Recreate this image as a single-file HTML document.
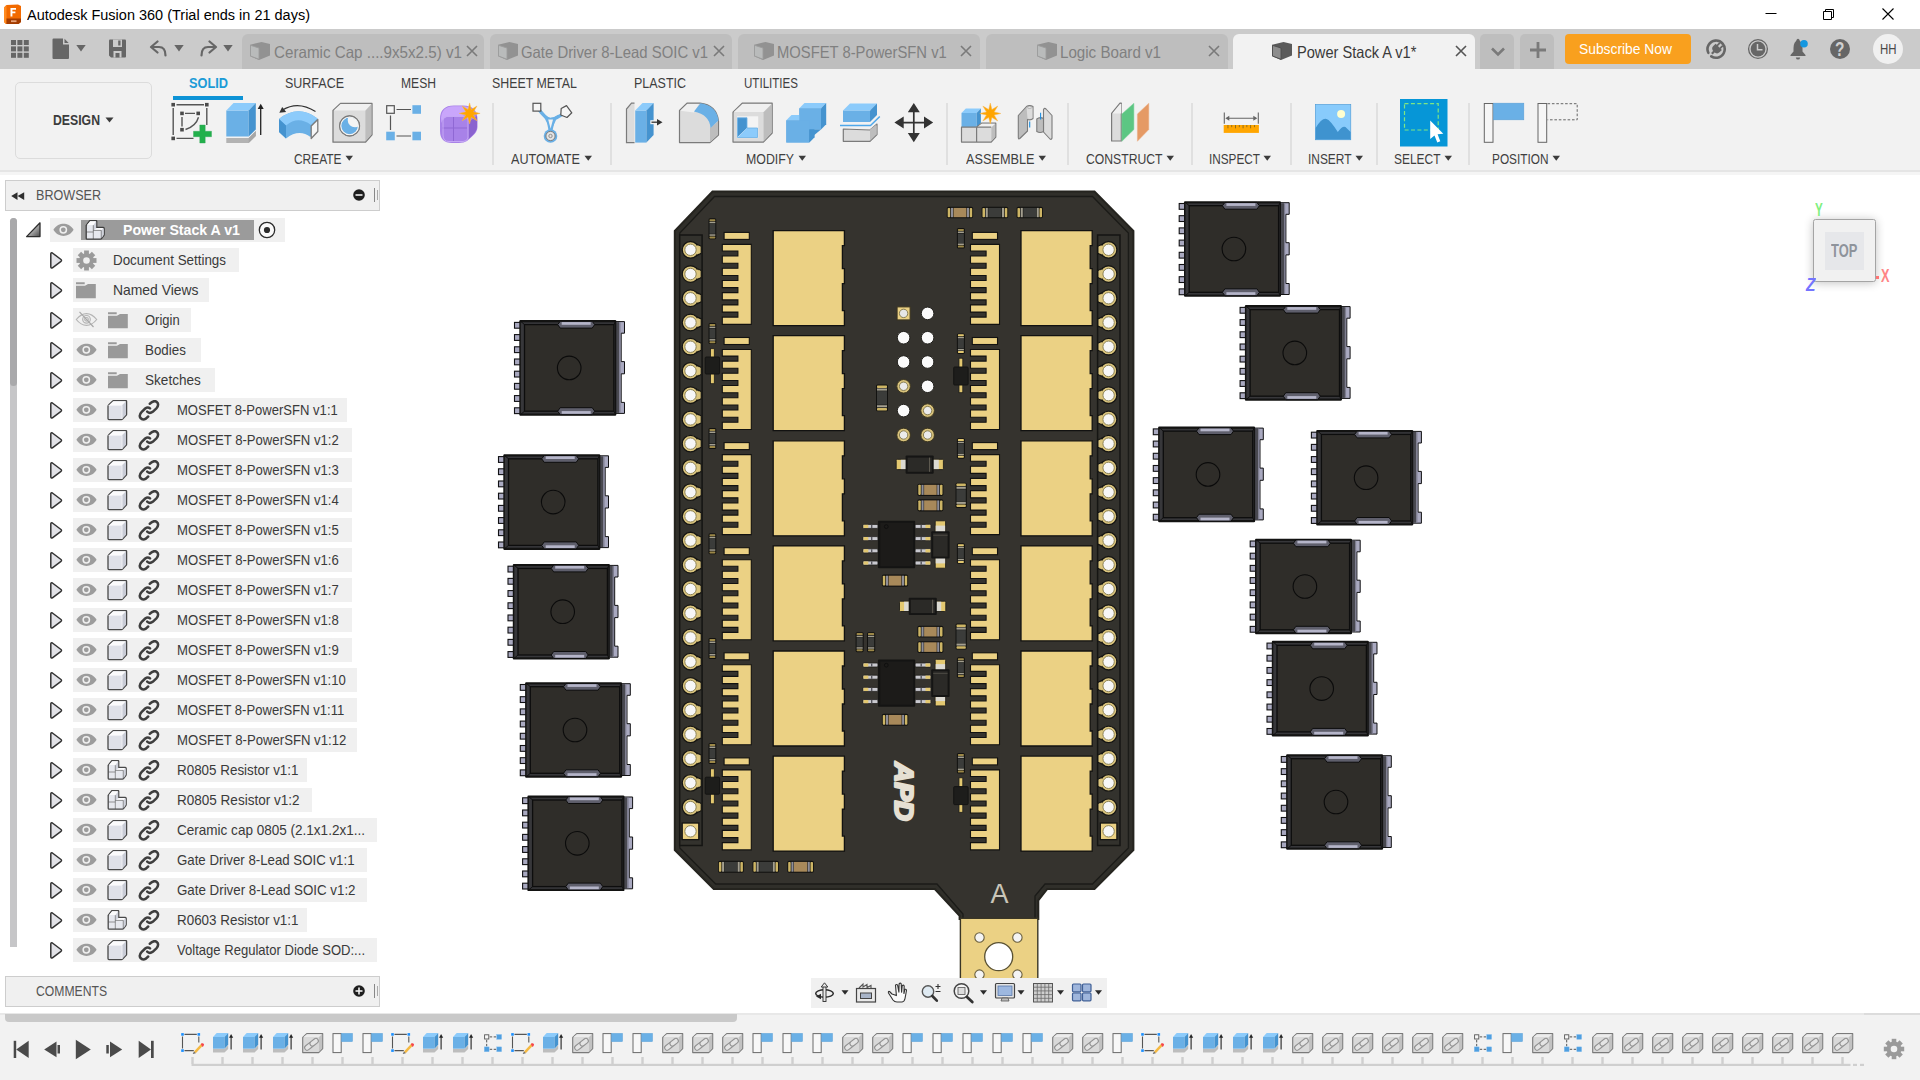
<!DOCTYPE html>
<html><head><meta charset="utf-8"><title>Autodesk Fusion 360</title>
<style>
html,body{margin:0;padding:0;}
body{width:1920px;height:1080px;overflow:hidden;background:#fff;font-family:"Liberation Sans",sans-serif;position:relative;}
.a{position:absolute;display:block;}
.t{position:absolute;white-space:nowrap;line-height:1;transform-origin:0 50%;}
</style></head><body>
<div class="a" style="left:0px;top:0px;width:1920px;height:29px;background:#ffffff;"></div>
<svg class="a" style="left:3px;top:4px;" width="19" height="21" viewBox="0 0 19 21">
<path d="M1 3.5 L3.5 1 L15 0.5 L18 2 L18 18 L15.5 20 L3 20 L1 18 Z" fill="#f26a00"/>
<path d="M1 3.5 L3.5 1 L3.5 20 L3 20 L1 18 Z" fill="#ff8a1f"/>
<path d="M3.5 14.5 L18 14.5 L18 18 L15.5 20 L3.5 20 Z" fill="#a33c00"/>
<path d="M7.5 4 H13 V5.8 H9.4 V7.6 H12.4 V9.3 H9.4 V12.5 H7.5 Z" fill="#fff"/>
<rect x="8" y="16.3" width="5.5" height="1.8" fill="#e7a37a"/>
</svg>
<span class="t" style="left:27px;top:6.75px;font-size:15.5px;color:#000000;font-weight:400;transform:scaleX(0.9349);">Autodesk Fusion 360 (Trial ends in 21 days)</span>
<svg class="a" style="left:1760px;top:4px;" width="150" height="22" viewBox="0 0 150 22">
<path d="M5.5 9.5 H16.5" stroke="#000" stroke-width="1" fill="none"/>
<path d="M63.5 7.5 h8 v8 h-8 z M65.5 7.5 v-2 h8 v8 h-2" stroke="#000" stroke-width="1" fill="none" stroke-linejoin="round"/>
<path d="M122.5 4.5 l11 11 M133.5 4.5 l-11 11" stroke="#000" stroke-width="1.1" fill="none"/>
</svg>
<div class="a" style="left:0px;top:29px;width:1920px;height:40px;background:#cbcbcb;"></div>
<svg class="a" style="left:10px;top:39px;" width="20" height="20" viewBox="0 0 20 20"><rect x="1.0" y="1.0" width="5" height="5" fill="#666666"/><rect x="1.0" y="7.4" width="5" height="5" fill="#666666"/><rect x="1.0" y="13.8" width="5" height="5" fill="#666666"/><rect x="7.4" y="1.0" width="5" height="5" fill="#666666"/><rect x="7.4" y="7.4" width="5" height="5" fill="#666666"/><rect x="7.4" y="13.8" width="5" height="5" fill="#666666"/><rect x="13.8" y="1.0" width="5" height="5" fill="#666666"/><rect x="13.8" y="7.4" width="5" height="5" fill="#666666"/><rect x="13.8" y="13.8" width="5" height="5" fill="#666666"/></svg>
<svg class="a" style="left:52px;top:38px;" width="18" height="22" viewBox="0 0 18 22"><path d="M0.5 1.5 Q0.5 0.5 1.5 0.5 H11 V6.5 H17 V20 Q17 21 16 21 H1.5 Q0.5 21 0.5 20 Z" fill="#666666"/><path d="M12.5 0.8 L16.7 5 H12.5 Z" fill="#666666"/></svg>
<svg class="a" style="left:76px;top:44px;" width="10" height="8" viewBox="0 0 10 8"><path d="M0.300 1 H9.700 L5 7.600 Z" fill="#666666"/></svg>
<svg class="a" style="left:108px;top:39px;" width="19" height="20" viewBox="0 0 19 20"><path d="M1 1.5 Q1 0.5 2 0.5 H17 Q18 0.5 18 1.5 V17.5 Q18 18.5 17 18.5 H3 L1 16.5 Z" fill="#666666"/><rect x="5" y="0.5" width="9" height="7.5" fill="#cbcbcb"/><rect x="10.2" y="1.5" width="2.3" height="5" fill="#666666"/><rect x="5.5" y="12" width="8" height="6.5" fill="#cbcbcb"/><rect x="7.5" y="14" width="4" height="4.5" fill="#666666"/></svg>
<svg class="a" style="left:149px;top:40px;" width="20" height="18" viewBox="0 0 20 18"><path d="M8.5 1.5 L2 7 L8.5 12.5 M2.5 7 H10 Q16.5 7 16.5 15.5" stroke="#666666" stroke-width="2.2" fill="none" stroke-linecap="round" stroke-linejoin="round"/></svg>
<svg class="a" style="left:174px;top:44px;" width="10" height="8" viewBox="0 0 10 8"><path d="M0.300 1 H9.700 L5 7.600 Z" fill="#666666"/></svg>
<svg class="a" style="left:198px;top:40px;" width="20" height="18" viewBox="0 0 20 18"><path d="M11.5 1.5 L18 7 L11.5 12.5 M17.5 7 H10 Q3.5 7 3.5 15.5" stroke="#666666" stroke-width="2.2" fill="none" stroke-linecap="round" stroke-linejoin="round"/></svg>
<svg class="a" style="left:223px;top:44px;" width="10" height="8" viewBox="0 0 10 8"><path d="M0.300 1 H9.700 L5 7.600 Z" fill="#666666"/></svg>
<div class="a" style="left:242px;top:34px;width:242px;height:35px;background:#bebebe;border-radius:6px 6px 0 0;"></div>
<svg class="a" style="left:249px;top:41px;" width="22" height="20" viewBox="0 0 22 20"><path d="M1.200 3.800 L12.500 1 L21 3 L21 14.500 L10 19 L1.200 15.300 Z" fill="#929292"/><path d="M1.500 4.300 L10 7 L10 18.300 L1.500 15 Z" fill="#b9bbbb" stroke="#9c9c9c" stroke-width="0.900" stroke-linejoin="round"/></svg>
<span class="t" style="left:274px;top:43.75px;font-size:16.5px;color:#808080;font-weight:400;transform:scaleX(0.9193);">Ceramic Cap ....9x5x2.5) v1</span>
<svg class="a" style="left:466px;top:45px;" width="12" height="12" viewBox="0 0 12 12"><path d="M1 1 L11 11 M11 1 L1 11" stroke="#7a7a7a" stroke-width="1.6" fill="none"/></svg>
<div class="a" style="left:490px;top:34px;width:242px;height:35px;background:#bebebe;border-radius:6px 6px 0 0;"></div>
<svg class="a" style="left:497px;top:41px;" width="22" height="20" viewBox="0 0 22 20"><path d="M1.200 3.800 L12.500 1 L21 3 L21 14.500 L10 19 L1.200 15.300 Z" fill="#929292"/><path d="M1.500 4.300 L10 7 L10 18.300 L1.500 15 Z" fill="#b9bbbb" stroke="#9c9c9c" stroke-width="0.900" stroke-linejoin="round"/></svg>
<span class="t" style="left:521px;top:43.75px;font-size:16.5px;color:#808080;font-weight:400;transform:scaleX(0.9023);">Gate Driver 8-Lead SOIC v1</span>
<svg class="a" style="left:713px;top:45px;" width="12" height="12" viewBox="0 0 12 12"><path d="M1 1 L11 11 M11 1 L1 11" stroke="#7a7a7a" stroke-width="1.6" fill="none"/></svg>
<div class="a" style="left:738px;top:34px;width:242px;height:35px;background:#bebebe;border-radius:6px 6px 0 0;"></div>
<svg class="a" style="left:753px;top:41px;" width="22" height="20" viewBox="0 0 22 20"><path d="M1.200 3.800 L12.500 1 L21 3 L21 14.500 L10 19 L1.200 15.300 Z" fill="#929292"/><path d="M1.500 4.300 L10 7 L10 18.300 L1.500 15 Z" fill="#b9bbbb" stroke="#9c9c9c" stroke-width="0.900" stroke-linejoin="round"/></svg>
<span class="t" style="left:777px;top:43.75px;font-size:16.5px;color:#808080;font-weight:400;transform:scaleX(0.8958);">MOSFET 8-PowerSFN v1</span>
<svg class="a" style="left:960px;top:45px;" width="12" height="12" viewBox="0 0 12 12"><path d="M1 1 L11 11 M11 1 L1 11" stroke="#7a7a7a" stroke-width="1.6" fill="none"/></svg>
<div class="a" style="left:986px;top:34px;width:242px;height:35px;background:#bebebe;border-radius:6px 6px 0 0;"></div>
<svg class="a" style="left:1036px;top:41px;" width="22" height="20" viewBox="0 0 22 20"><path d="M1.200 3.800 L12.500 1 L21 3 L21 14.500 L10 19 L1.200 15.300 Z" fill="#929292"/><path d="M1.500 4.300 L10 7 L10 18.300 L1.500 15 Z" fill="#b9bbbb" stroke="#9c9c9c" stroke-width="0.900" stroke-linejoin="round"/></svg>
<span class="t" style="left:1060px;top:43.75px;font-size:16.5px;color:#808080;font-weight:400;transform:scaleX(0.9176);">Logic Board v1</span>
<svg class="a" style="left:1208px;top:45px;" width="12" height="12" viewBox="0 0 12 12"><path d="M1 1 L11 11 M11 1 L1 11" stroke="#7a7a7a" stroke-width="1.6" fill="none"/></svg>
<div class="a" style="left:1233px;top:34px;width:242px;height:35px;background:#f2f2f2;border-radius:6px 6px 0 0;"></div>
<svg class="a" style="left:1271px;top:41px;" width="22" height="20" viewBox="0 0 22 20"><path d="M1.200 3.800 L12.500 1 L21 3 L21 14.500 L10 19 L1.200 15.300 Z" fill="#5a5a5a"/><path d="M1.500 4.300 L10 7 L10 18.300 L1.500 15 Z" fill="#8d8d8d" stroke="#4c4c4c" stroke-width="0.900" stroke-linejoin="round"/></svg>
<span class="t" style="left:1297px;top:43.75px;font-size:16.5px;color:#3a3a3a;font-weight:400;transform:scaleX(0.8855);">Power Stack A v1*</span>
<svg class="a" style="left:1455px;top:45px;" width="12" height="12" viewBox="0 0 12 12"><path d="M1 1 L11 11 M11 1 L1 11" stroke="#555" stroke-width="1.6" fill="none"/></svg>
<div class="a" style="left:1480px;top:34px;width:34px;height:35px;background:#bebebe;border-radius:5px 5px 0 0;"></div>
<svg class="a" style="left:1490px;top:46px;" width="16" height="12" viewBox="0 0 16 12"><path d="M2 2.5 L8 8.5 L14 2.5" stroke="#7a7a7a" stroke-width="2.6" fill="none"/></svg>
<div class="a" style="left:1520px;top:34px;width:34px;height:35px;background:#bebebe;border-radius:5px 5px 0 0;"></div>
<svg class="a" style="left:1529px;top:41px;" width="18" height="18" viewBox="0 0 18 18"><path d="M9 1 V17 M1 9 H17" stroke="#7a7a7a" stroke-width="2.8" fill="none"/></svg>
<div class="a" style="left:1565px;top:34px;width:126px;height:30px;background:#f9a01e;border-radius:4px;"></div>
<span class="t" style="left:1579px;top:42.00px;font-size:14px;color:#ffffff;font-weight:400;transform:scaleX(0.9878);">Subscribe Now</span>
<svg class="a" style="left:1705px;top:38px;" width="23" height="23" viewBox="0 0 23 23"><path d="M6.300 18.300 A8.600 8.600 0 1 0 3.300 14.800" stroke="#666666" stroke-width="2.600" fill="none" stroke-linecap="round"/><g transform="translate(11.800 10.800) rotate(45)" fill="#666666"><rect x="-2.900" y="-6.300" width="1.700" height="4" rx="0.600"/><rect x="1.200" y="-6.300" width="1.700" height="4" rx="0.600"/><path d="M-4.400 -2.800 H4.400 V0.600 Q4.400 4.200 0 4.200 Q-4.400 4.200 -4.400 0.600 Z"/><rect x="-1.100" y="3.600" width="2.200" height="3.400" /></g></svg>
<svg class="a" style="left:1747px;top:38px;" width="22" height="22" viewBox="0 0 22 22"><circle cx="11" cy="11" r="9.400" stroke="#666666" stroke-width="1.300" fill="none"/><circle cx="11" cy="11" r="7.400" fill="#666666"/><path d="M10.500 6 V11.800 H15.500" stroke="#cbcbcb" stroke-width="1.500" fill="none"/></svg>
<svg class="a" style="left:1788px;top:37px;" width="22" height="24" viewBox="0 0 22 24"><path d="M10 3 Q5.500 4.500 5.500 11 V14.500 L2.500 18 V19 H17.500 V18 L14.500 14.500 V11 Q14.500 4.500 10 3 Z" fill="#666666"/><circle cx="10" cy="3.200" r="1.500" fill="#666666"/><path d="M7.800 20.400 H12.200 Q11.800 22.600 10 22.600 Q8.200 22.600 7.800 20.400 Z" fill="#666666"/><circle cx="16" cy="6.700" r="3.800" fill="#1597e0"/></svg>
<svg class="a" style="left:1829px;top:38px;" width="22" height="22" viewBox="0 0 22 22"><circle cx="11" cy="11" r="10" fill="#666666"/></svg>
<span class="t" style="left:1835.3px;top:38.80px;font-size:20px;color:#d0d0d0;font-weight:700;transform:scaleX(0.7694);">?</span>
<div class="a" style="left:1873px;top:34px;width:30px;height:30px;border-radius:15px;background:#f0f0f0;"></div>
<span class="t" style="left:1879.5px;top:41.75px;font-size:14.5px;color:#4a4a4a;font-weight:400;transform:scaleX(0.7879);">HH</span>
<div class="a" style="left:0px;top:69px;width:1920px;height:102px;background:#f2f2f2;"></div>
<div class="a" style="left:0px;top:170px;width:1920px;height:2px;background:#e5e5e5;"></div>
<div class="a" style="left:0px;top:172px;width:1920px;height:2.7px;background:#f5f5f5;"></div>
<div class="a" style="left:15px;top:82px;width:135px;height:75px;border:1.5px solid #dcdcdc;border-radius:5px;box-sizing:content-box;"></div>
<span class="t" style="left:53px;top:113.25px;font-size:14.5px;color:#3c3c3c;font-weight:700;transform:scaleX(0.8454);">DESIGN</span>
<svg class="a" style="left:105px;top:117px;" width="10" height="7" viewBox="0 0 10 7"><path d="M0.5 0.5 H8.5 L4.5 5.5 Z" fill="#3c3c3c"/></svg>
<span class="t" style="left:189px;top:75.75px;font-size:14.5px;color:#1b9bd7;font-weight:700;transform:scaleX(0.8802);">SOLID</span>
<div class="a" style="left:173px;top:96px;width:70px;height:3.5px;background:#0d93d6;"></div>
<span class="t" style="left:285px;top:75.75px;font-size:14.5px;color:#3f3f3f;font-weight:400;transform:scaleX(0.8615);">SURFACE</span>
<span class="t" style="left:401px;top:75.75px;font-size:14.5px;color:#3f3f3f;font-weight:400;transform:scaleX(0.8355);">MESH</span>
<span class="t" style="left:492px;top:75.75px;font-size:14.5px;color:#3f3f3f;font-weight:400;transform:scaleX(0.8531);">SHEET METAL</span>
<span class="t" style="left:634px;top:75.75px;font-size:14.5px;color:#3f3f3f;font-weight:400;transform:scaleX(0.8604);">PLASTIC</span>
<span class="t" style="left:744px;top:75.75px;font-size:14.5px;color:#3f3f3f;font-weight:400;transform:scaleX(0.7979);">UTILITIES</span>
<div class="a" style="left:492px;top:103px;width:2px;height:62px;background:#e0e0e0;"></div>
<div class="a" style="left:610px;top:103px;width:2px;height:62px;background:#e0e0e0;"></div>
<div class="a" style="left:946px;top:103px;width:2px;height:62px;background:#e0e0e0;"></div>
<div class="a" style="left:1067px;top:103px;width:2px;height:62px;background:#e0e0e0;"></div>
<div class="a" style="left:1191px;top:103px;width:2px;height:62px;background:#e0e0e0;"></div>
<div class="a" style="left:1290px;top:103px;width:2px;height:62px;background:#e0e0e0;"></div>
<div class="a" style="left:1376px;top:103px;width:2px;height:62px;background:#e0e0e0;"></div>
<div class="a" style="left:1468px;top:103px;width:2px;height:62px;background:#e0e0e0;"></div>
<span class="t" style="left:294px;top:151.75px;font-size:14.5px;color:#3f3f3f;font-weight:400;transform:scaleX(0.8227);">CREATE</span>
<svg class="a" style="left:345.0px;top:155px;" width="9" height="7" viewBox="0 0 9 7"><path d="M0.5 0.8 H8 L4.25 5.8 Z" fill="#3c3c3c"/></svg>
<span class="t" style="left:511px;top:151.75px;font-size:14.5px;color:#3f3f3f;font-weight:400;transform:scaleX(0.8710);">AUTOMATE</span>
<svg class="a" style="left:583.5px;top:155px;" width="9" height="7" viewBox="0 0 9 7"><path d="M0.5 0.8 H8 L4.25 5.8 Z" fill="#3c3c3c"/></svg>
<span class="t" style="left:746px;top:151.75px;font-size:14.5px;color:#3f3f3f;font-weight:400;transform:scaleX(0.8513);">MODIFY</span>
<svg class="a" style="left:797.5px;top:155px;" width="9" height="7" viewBox="0 0 9 7"><path d="M0.5 0.8 H8 L4.25 5.8 Z" fill="#3c3c3c"/></svg>
<span class="t" style="left:966px;top:151.75px;font-size:14.5px;color:#3f3f3f;font-weight:400;transform:scaleX(0.8763);">ASSEMBLE</span>
<svg class="a" style="left:1038.0px;top:155px;" width="9" height="7" viewBox="0 0 9 7"><path d="M0.5 0.8 H8 L4.25 5.8 Z" fill="#3c3c3c"/></svg>
<span class="t" style="left:1085.5px;top:151.75px;font-size:14.5px;color:#3f3f3f;font-weight:400;transform:scaleX(0.8405);">CONSTRUCT</span>
<svg class="a" style="left:1165.5px;top:155px;" width="9" height="7" viewBox="0 0 9 7"><path d="M0.5 0.8 H8 L4.25 5.8 Z" fill="#3c3c3c"/></svg>
<span class="t" style="left:1208.5px;top:151.75px;font-size:14.5px;color:#3f3f3f;font-weight:400;transform:scaleX(0.8115);">INSPECT</span>
<svg class="a" style="left:1263.0px;top:155px;" width="9" height="7" viewBox="0 0 9 7"><path d="M0.5 0.8 H8 L4.25 5.8 Z" fill="#3c3c3c"/></svg>
<span class="t" style="left:1307.5px;top:151.75px;font-size:14.5px;color:#3f3f3f;font-weight:400;transform:scaleX(0.8222);">INSERT</span>
<svg class="a" style="left:1354.5px;top:155px;" width="9" height="7" viewBox="0 0 9 7"><path d="M0.5 0.8 H8 L4.25 5.8 Z" fill="#3c3c3c"/></svg>
<span class="t" style="left:1394px;top:151.75px;font-size:14.5px;color:#3f3f3f;font-weight:400;transform:scaleX(0.8244);">SELECT</span>
<svg class="a" style="left:1444.0px;top:155px;" width="9" height="7" viewBox="0 0 9 7"><path d="M0.5 0.8 H8 L4.25 5.8 Z" fill="#3c3c3c"/></svg>
<span class="t" style="left:1491.5px;top:151.75px;font-size:14.5px;color:#3f3f3f;font-weight:400;transform:scaleX(0.8155);">POSITION</span>
<svg class="a" style="left:1551.5px;top:155px;" width="9" height="7" viewBox="0 0 9 7"><path d="M0.5 0.8 H8 L4.25 5.8 Z" fill="#3c3c3c"/></svg>
<svg class="a" style="left:0;top:96px" width="1920" height="56" viewBox="0 96 1920 56"><g stroke="#555555" stroke-width="1.4" fill="none"><path d="M176.5 104.7 H204 M173.2 108 V135 M206.8 108 V125 M176.5 138.4 H193.5"/><path d="M185 113.4 H195 M182 117 V126.5 M185.5 129.5 Q196 126 198.5 117.2"/></g><rect x="171.39999999999998" y="102.9" width="3.6" height="3.6" fill="#4a4a4a"/><rect x="205.0" y="102.9" width="3.6" height="3.6" fill="#4a4a4a"/><rect x="171.39999999999998" y="136.6" width="3.6" height="3.6" fill="#4a4a4a"/><rect x="180.2" y="111.60000000000001" width="3.6" height="3.6" fill="#4a4a4a"/><rect x="196.39999999999998" y="111.60000000000001" width="3.6" height="3.6" fill="#4a4a4a"/><rect x="180.2" y="127.89999999999999" width="3.6" height="3.6" fill="#4a4a4a"/><path d="M199.8 125 h5.4 v6.3 h6.3 v5.4 h-6.3 v6.3 h-5.4 v-6.3 h-6.3 v-5.4 h6.3 z" fill="#22b04b" stroke="#2ea556" stroke-width="0.4"/><path d="M226.3 138 H248.7 L255.8 131 V136 L248.7 143 H226.3 Z" fill="#b3b3b3"/><path d="M248.7 138 L255.8 131 V136 L248.7 143 Z" fill="#a6a6a6"/><path d="M226.3 110.5 H248.7 V136.5 H226.3 Z" fill="#6ab0e6"/><path d="M226.3 110.5 L233.5 103 H255.8 L248.7 110.5 Z" fill="#8ccbfb"/><path d="M248.7 110.5 L255.8 103 V129.5 L248.7 136.5 Z" fill="#4593cf"/><path d="M260.7 135 V108" stroke="#222" stroke-width="1.3"/><path d="M260.7 103.8 L257.7 109 H263.7 Z" fill="#222"/><path d="M279 119 Q298 104 317.5 118.5 L310.5 137 Q299 128.5 286 138.5 L279 132 Z" fill="#6ab0e6"/><path d="M279 119 Q298 104 317.5 118.5 L311 125 Q298 115.5 286 125.5 Z" fill="#8ccbfb"/><path d="M279 119 L286 125.5 V138.5 L279 132 Z" fill="#4593cf"/><path d="M311.2 126 L317.8 119.5 V131.5 L311.2 138.5 Z" fill="#f6f6f6" stroke="#7b7b7b" stroke-width="1.3" stroke-linejoin="round"/><path d="M315.5 111.5 Q298 100.5 282.5 110" stroke="#333" stroke-width="1.2" fill="none"/><path d="M279.3 112.8 L282.2 107 L286.2 112 Z" fill="#333"/><path d="M333 110.5 L340.5 103.4 H372 V134.7 L365.4 142.2 H333 Z" fill="#dcdcdc" stroke="#7b7b7b" stroke-width="1.3" stroke-linejoin="round"/><path d="M333.7 110.5 L340.8 104 H371.3 L365.4 110.5 Z" fill="#f0f0f0"/><path d="M365.4 110.8 L371.4 104.3 V134.5 L365.4 141.5 Z" fill="#bdbdbd"/><defs><clipPath id="hc"><circle cx="349.6" cy="125.9" r="8.6"/></clipPath></defs><circle cx="349.6" cy="125.9" r="10" fill="#f4f4f4" stroke="#7b7b7b" stroke-width="1.1"/><circle cx="349.6" cy="125.9" r="8.3" fill="#6ab0e6"/><circle cx="355" cy="120" r="7.3" fill="#f4f4f4" clip-path="url(#hc)"/><circle cx="349.6" cy="125.9" r="9.2" fill="none" stroke="#f4f4f4" stroke-width="1.2"/><circle cx="349.6" cy="125.9" r="10" fill="none" stroke="#7b7b7b" stroke-width="1.1"/><path d="M396.5 109.5 H411 M390.5 115.5 V130 M396.5 136 H411" stroke="#555555" stroke-width="1.2"/><rect x="386.7" y="105.7" width="7.6" height="7.6" fill="#f6f6f6" stroke="#555555" stroke-width="1.2"/><rect x="412.4" y="105.2" width="8.6" height="8.6" fill="#6ab0e6"/><rect x="386.2" y="131.7" width="8.6" height="8.6" fill="#6ab0e6"/><rect x="412.4" y="131.7" width="8.6" height="8.6" fill="#6ab0e6"/><path d="M440 119 Q440 105.5 454 105.5 H463 Q477.5 105.5 477.5 120 V127 Q477.5 132 472 136.5 L467 141 Q464 143 459 143 H452 Q440 143 440 131 Z" fill="#a882e8"/><path d="M441 118 Q441.5 107 453 106.2 H462 Q470 106.5 472 110 Q468 116 458 116.5 H449 Q443 117 441.5 123 Z" fill="#c9a6fb"/><path d="M468.5 122 L477 116 V127 Q477 132 468.5 139 Z" fill="#8a63cf"/><path d="M442 128 H467 M453.5 117 V142" stroke="#8f68d4" stroke-width="1" fill="none"/><path d="M443 120 Q443 116.5 447 116.5 H465.5 Q468 117 468 120 V138 Q467 141.5 463 141.5 H449 Q443 141.500 443 135 Z" fill="none" stroke="#c5a7f5" stroke-width="1"/><polygon points="469.60,102.90 471.21,109.52 477.02,105.98 473.48,111.79 480.10,113.40 473.48,115.01 477.02,120.82 471.21,117.28 469.60,123.90 467.99,117.28 462.18,120.82 465.72,115.01 459.10,113.40 465.72,111.79 462.18,105.98 467.99,109.52" fill="#ffa500" stroke="#f7b955" stroke-width="0.5"/><path d="M537 107 Q546 119.500 550.5 119.500 Q556 119.500 566 111.500 M548 118.5 L550.5 132 L553.5 118.5" stroke="#6ab0e6" stroke-width="3.4" fill="none" stroke-linejoin="round"/><path d="M543 115 Q550 121 558.5 114.500 L551 131 Z" fill="#6ab0e6"/><path d="M548.2 119.500 H553 L550.6 128.5 Z" fill="#f2f2f2"/><circle cx="550.5" cy="136" r="6.8" fill="#6ab0e6"/><circle cx="550.5" cy="136" r="4.6" fill="#e4e4e4" stroke="#7b7b7b" stroke-width="1"/><circle cx="550.5" cy="136" r="1.7" fill="none" stroke="#7b7b7b" stroke-width="0.8"/><rect x="533" y="103.300" width="7.8" height="7.8" fill="#f6f6f6" stroke="#555555" stroke-width="1.2"/><polygon points="566.5,105.600 571.8,112.800 567,117.500 560.800,115 561.2,108.5" fill="#f6f6f6" stroke="#555555" stroke-width="1.2" stroke-linejoin="round"/><path d="M634.5 103.200 H631.500 L626.500 109 V142.600 H634.5" fill="#dcdcdc" stroke="#7b7b7b" stroke-width="1.2"/><path d="M635.2 110.5 H646.4 V142.600 H635.2 Z" fill="#6ab0e6"/><path d="M635.2 110.5 L642.5 103 H653.600 L646.4 110.5 Z" fill="#8ccbfb"/><path d="M646.4 110.5 L653.600 103 V135 L646.4 142.600 Z" fill="#4593cf"/><rect x="650.300" y="120.2" width="5" height="4" fill="#f2f2f2"/><path d="M651.5 122.2 H658" stroke="#333" stroke-width="1.3"/><path d="M662.5 122.2 L657 119 V125.4 Z" fill="#333"/><path d="M679.500 142.600 V110.5 L687 103.200 H700 Q716.500 105 718.500 121 V135 L710 142.600 Z" fill="#dcdcdc" stroke="#7b7b7b" stroke-width="1.2" stroke-linejoin="round"/><path d="M680.200 110.7 L687.200 103.900 H699 L694 112.5 Z" fill="#f0f0f0"/><path d="M710 128 L718 121.500 V134.800 L710 142 Z" fill="#bdbdbd"/><path d="M694 111.500 L700.500 103.300 Q716.500 105.500 718.500 120.5 L710.5 128 Q709.500 114.500 694 111.500 Z" fill="#6ab0e6"/><path d="M733 112.300 L742.2 103.200 H772.2 V133 L763.400 142.100 H733 Z" fill="#dcdcdc" stroke="#7b7b7b" stroke-width="1.2" stroke-linejoin="round"/><path d="M733.800 112.100 L742.400 103.900 H771.400 L763.400 112.100 Z" fill="#f0f0f0"/><path d="M763.600 112.300 L771.600 104.200 V132.800 L763.600 141.300 Z" fill="#bdbdbd"/><rect x="737" y="116.300" width="21.2" height="21.8" fill="#f4f4f4"/><path d="M737.5 117.800 H747 V128 L737.5 137 Z" fill="#4593cf"/><path d="M747 128 H757.500 V137.500 H737.5 Z" fill="#8ccbfb"/><path d="M737.5 117.800 H747 V128 H757.500 V137.500 H737.5 Z" fill="none" stroke="#6ab0e6" stroke-width="0.8"/><path d="M799.3 108.3 H821 V129.5 H799.3 Z" fill="#6ab0e6"/><path d="M799.3 108.3 L804.5 103.1 H826.2 L821 108.3 Z" fill="#8ccbfb"/><path d="M821 108.3 L826.2 103.1 V124.3 L821 129.5 Z" fill="#4593cf"/><path d="M786.3 120.3 H809.2 V142.5 H786.3 Z" fill="#6ab0e6"/><path d="M786.3 120.3 L791.5 115.1 H814.4000000000001 L809.2 120.3 Z" fill="#8ccbfb"/><path d="M809.2 120.3 L814.4000000000001 115.1 V137.3 L809.2 142.5 Z" fill="#4593cf"/><rect x="799.300" y="108.300" width="21.7" height="21.2" fill="#6ab0e6"/><rect x="786.300" y="120.300" width="22.900" height="22.200" fill="#6ab0e6"/><path d="M809.200 129.500 H821 L814.400 134.900 V137.300 L809.200 142.500 Z" fill="#4593cf"/><path d="M843.300 129 V141.300 H870 L877 134.500 V124 L870 130 Z" fill="#dcdcdc" stroke="#7b7b7b" stroke-width="1.2" stroke-linejoin="round"/><path d="M870 129.500 L876.500 124.500 V134.300 L870 140.700 Z" fill="#bdbdbd"/><path d="M843 110.4 H870 V122 H843 Z" fill="#6ab0e6"/><path d="M843 110.4 L850 103.4 H877 L870 110.4 Z" fill="#8ccbfb"/><path d="M870 110.4 L877 103.4 V115 L870 122 Z" fill="#4593cf"/><path d="M840 125.500 H870.500 L879.800 116.500" stroke="#f2f2f2" stroke-width="4.200" fill="none"/><path d="M840 125.500 H870.500 L879.800 116.500" stroke="#4fa8ea" stroke-width="1.500" fill="none"/><path d="M913.800 108 V137 M899 122.600 H929" stroke="#333" stroke-width="1.700"/><path d="M913.800 103 L907.800 112.300 H919.800 Z M913.800 142.200 L907.800 133 H919.800 Z M894.400 122.600 L903.700 116.600 V128.600 Z M933.200 122.600 L924 116.600 V128.600 Z" fill="#333"/><path d="M961.5 112.9 H976.6 V127.2 H961.5 Z" fill="#6ab0e6"/><path d="M961.5 112.9 L965.8 108.60000000000001 H980.9 L976.6 112.9 Z" fill="#8ccbfb"/><path d="M976.6 112.9 L980.9 108.60000000000001 V122.9 L976.6 127.2 Z" fill="#4593cf"/><path d="M961.500 127.200 H976.600 L981.500 123.200 H995.800 V137 L991.200 142.100 H961.500 Z" fill="#dcdcdc" stroke="#7b7b7b" stroke-width="1.200" stroke-linejoin="round"/><path d="M977.200 127.200 L981.700 123.800 H995 L991.200 127.200 Z" fill="#f0f0f0"/><path d="M991.400 127.500 L995.200 124 V136.800 L991.400 141.300 Z" fill="#bdbdbd"/><path d="M976.600 127.200 V142 M976.600 127.200 H991.200" stroke="#7b7b7b" stroke-width="1.200" fill="none"/><polygon points="990.30,103.00 991.91,109.62 997.72,106.08 994.18,111.89 1000.80,113.50 994.18,115.11 997.72,120.92 991.91,117.38 990.30,124.00 988.69,117.38 982.88,120.92 986.42,115.11 979.80,113.50 986.42,111.89 982.88,106.08 988.69,109.62" fill="#ffa500" stroke="#f7b955" stroke-width="0.5"/><path d="M1018.300 115.500 L1026.500 106.500 Q1029.500 104.700 1033 106.500 V118.500 Q1031 120.500 1027.500 119.500 V131 L1019.800 138.500 Q1018.300 139.500 1018.300 137.500 Z" fill="#bdbdbd" stroke="#7b7b7b" stroke-width="1.100" stroke-linejoin="round"/><path d="M1026.500 107 Q1029.500 105.300 1032.500 107 V118 Q1030 119.600 1027.500 118.500 Z" fill="#dcdcdc"/><ellipse cx="1029.600" cy="107.200" rx="2.600" ry="1" fill="#fafafa" stroke="#7b7b7b" stroke-width="0.600"/><path d="M1043.500 109.500 Q1044.500 107.500 1046 109 L1052 115.500 V138 Q1051.500 140 1050 139 L1043.500 132 Z" fill="#dcdcdc" stroke="#7b7b7b" stroke-width="1.100" stroke-linejoin="round"/><path d="M1036.800 119 Q1040 116.500 1043.500 118.500 V131.500 Q1040 133.500 1036.800 131.500 Z" fill="#bdbdbd" stroke="#7b7b7b" stroke-width="1.100"/><path d="M1029.700 121.500 V127.500 M1040.600 112.800 V119.500" stroke="#1f8fe0" stroke-width="1.100"/><path d="M1121.300 103.200 H1120 L1111.600 113.500 V141 H1121.300 Z" fill="#dcdcdc" stroke="#7b7b7b" stroke-width="1.200" stroke-linejoin="round"/><path d="M1112.300 113.500 L1120.200 103.900 H1121.300 V113.500 Z" fill="#f0f0f0"/><polygon points="1121.900,114 1133.900,103.200 1133.900,129.500 1121.900,141.300" fill="#5cc683" stroke="#7fd09b" stroke-width="0.500"/><polygon points="1137.400,114 1148.800,103.200 1148.800,129.500 1137.400,141.300" fill="#e59a65" stroke="#ecb088" stroke-width="0.500"/><rect x="1223.700" y="125" width="35.200" height="7.900" fill="#ffa600"/><rect x="1227.50" y="125" width="0.900" height="3.3" fill="#8a6a1c"/><rect x="1231.28" y="125" width="0.900" height="2.2" fill="#8a6a1c"/><rect x="1235.06" y="125" width="0.900" height="3.3" fill="#8a6a1c"/><rect x="1238.84" y="125" width="0.900" height="2.2" fill="#8a6a1c"/><rect x="1242.62" y="125" width="0.900" height="3.3" fill="#8a6a1c"/><rect x="1246.40" y="125" width="0.900" height="2.2" fill="#8a6a1c"/><rect x="1250.18" y="125" width="0.900" height="3.3" fill="#8a6a1c"/><rect x="1253.96" y="125" width="0.900" height="2.2" fill="#8a6a1c"/><path d="M1224.300 112.600 V123.700 M1258.300 112.600 V123.700 M1227 118.300 H1255.500" stroke="#666" stroke-width="1.100"/><path d="M1225.300 118.300 L1229.300 115.800 V120.800 Z M1257.300 118.300 L1253.300 115.800 V120.800 Z" fill="#666"/><rect x="1315.300" y="104.400" width="35.500" height="35.400" fill="#88cbfc" stroke="#4a97d3" stroke-width="0.600"/><path d="M1315.600 128 Q1322 117.500 1326.500 119 Q1330 119.800 1337.800 132 Q1343.500 124 1346.500 128 L1350.600 132 V139.600 H1315.600 Z" fill="#3f93cf"/><circle cx="1341.100" cy="114" r="4" fill="#ffffd0"/><rect x="1400" y="99" width="47.500" height="47.500" fill="#0696d7"/><rect x="1404.500" y="103.700" width="33.700" height="26.300" fill="none" stroke="#7fe683" stroke-width="1.200" stroke-dasharray="4 2.400"/><path d="M1430.200 120.500 L1430.200 139 L1434.500 135.500 L1437.300 142.500 L1440.300 141.200 L1437.600 134.300 L1443.300 133.800 Z" fill="#fff"/><rect x="1484.300" y="103.500" width="8.700" height="38.800" fill="#f6f6f6" stroke="#666" stroke-width="1"/><rect x="1493.500" y="103.200" width="30.300" height="16.600" fill="#6ab0e6" stroke="#5a9fd6" stroke-width="0.600"/><rect x="1538" y="103.500" width="8.700" height="38.800" fill="#f6f6f6" stroke="#666" stroke-width="1"/><path d="M1547.500 103.700 H1577.200 V119.800 H1547.500" fill="none" stroke="#666" stroke-width="1" stroke-dasharray="2.600 1.800"/></svg>
<div class="a" style="left:5px;top:180.300px;width:373px;height:28.500px;background:#f0f0f0;border:1px solid #cdcdcd;"></div>
<svg class="a" style="left:11px;top:190px;" width="14" height="12" viewBox="0 0 14 12"><path d="M0.200 6.100 L6.500 2.200 V10 Z M6.600 6.100 L13.200 2.200 V10 Z" fill="#2e2e2e"/></svg>
<span class="t" style="left:36px;top:187.75px;font-size:14.5px;color:#555555;font-weight:400;transform:scaleX(0.8676);">BROWSER</span>
<svg class="a" style="left:352px;top:188px;" width="14" height="14" viewBox="0 0 14 14"><circle cx="7" cy="7" r="5.800" fill="#1e1e1e"/><rect x="3.500" y="6.200" width="7" height="1.600" fill="#f0f0f0"/></svg>
<div class="a" style="left:374px;top:188px;width:1px;height:14px;background:#888;"></div>
<div class="a" style="left:376.5px;top:190px;width:1px;height:10px;background:#aaa;"></div>
<div class="a" style="left:10.200px;top:217.500px;width:7px;height:729.500px;background:#c6c6c8;border-radius:3.500px 3.500px 0 0;"></div>
<div class="a" style="left:10.200px;top:217.500px;width:7px;height:168px;background:#a9a9ab;border-radius:3.500px;"></div>
<div class="a" style="left:50px;top:218px;width:235px;height:24px;background:#f0f0f0;"></div>
<div class="a" style="left:81.3px;top:220.2px;width:173px;height:19.5px;background:#9b9b9b;"></div>
<svg class="a" style="left:25px;top:221px;" width="17" height="17" viewBox="0 0 17 17"><defs><linearGradient id="rg" x1="0" y1="0" x2="1" y2="1"><stop offset="0.300" stop-color="#d5d5d5"/><stop offset="1" stop-color="#4a4a4a"/></linearGradient></defs><path d="M1.600 15.600 H15 V1.800 Z" fill="url(#rg)" stroke="#2e2e2e" stroke-width="1.300" stroke-linejoin="round"/></svg>
<svg class="a" style="left:53.25px;top:223.1px;" width="21" height="13" viewBox="0 0 21 13"><path d="M0.400 6.800 C3 2.300 7 0.700 10.500 0.700 C14 0.700 18 2.300 20.600 6.800 C18 11.300 14 12.900 10.500 12.900 C7 12.900 3 11.300 0.400 6.800 Z" fill="#9c9c9c"/><circle cx="10.300" cy="6.800" r="3.900" fill="#f0f0f0"/><circle cx="10.300" cy="6.800" r="2.400" fill="#9c9c9c"/></svg>
<svg class="a" style="left:85px;top:220px;" width="21" height="21" viewBox="0 0 21 21"><path d="M1.200 5.300 L4.600 0.800 Q5 0.500 5.600 0.500 H10.900 Q11.700 0.500 11.700 1.300 V7.500 H18.300 Q19.200 7.500 19.200 8.400 V14.600 Q19.200 15.200 18.800 15.700 L16.500 18.700 Q16.100 19.200 15.400 19.200 H2.200 Q1.200 19.200 1.200 18.200 Z" fill="#e6e8ee" stroke="#3e3e3e" stroke-width="1.300" stroke-linejoin="round"/><path d="M2 5 L5.200 1.200 H11 L8.300 5 Z M9 10.200 L11.800 8 H18.400 L16.200 10.200 Z" fill="#fcfcfd"/><path d="M8.500 5.300 L11.200 1.600 V7.500 L8.500 10.400 Z M16.500 10.600 L18.700 8.300 V14.700 L16.500 18.400 Z" fill="#cfd2db"/><path d="M8.300 5.200 V19 M8.300 10.400 H16.250 V19 M1.500 12 H8.300" fill="none" stroke="#3e3e3e" stroke-width="1" opacity="0.550"/></svg>
<span class="t" style="left:123px;top:222.75px;font-size:14.5px;color:#ffffff;font-weight:700;transform:scaleX(0.9761);">Power Stack A v1</span>
<svg class="a" style="left:258px;top:221px;" width="18" height="18" viewBox="0 0 18 18"><circle cx="9" cy="9" r="7.700" fill="#fafafa" stroke="#2b2b2b" stroke-width="1.300"/><circle cx="9" cy="9" r="3.100" fill="#2b2b2b"/></svg>
<div class="a" style="left:72.7px;top:247.7px;width:166.8px;height:24.3px;background:#f0f0f0;"></div>
<svg class="a" style="left:49px;top:250.5px;" width="14" height="19" viewBox="0 0 14 19"><path d="M1.800 3 Q1.800 1.300 3.400 2 L12 8.500 Q13 9.400 12 10.300 L3.400 16.800 Q1.800 17.500 1.800 15.800 Z" fill="#e2e2e7" stroke="#333" stroke-width="1.500" stroke-linejoin="round"/></svg>
<svg class="a" style="left:75.75px;top:249.5px;" width="21" height="21" viewBox="0 0 21 21"><g transform="translate(10.500 10.500)"><rect x="-2.400" y="-10" width="4.800" height="5" transform="rotate(0)" fill="#9a9a9a"/><rect x="-2.400" y="-10" width="4.800" height="5" transform="rotate(45)" fill="#9a9a9a"/><rect x="-2.400" y="-10" width="4.800" height="5" transform="rotate(90)" fill="#9a9a9a"/><rect x="-2.400" y="-10" width="4.800" height="5" transform="rotate(135)" fill="#9a9a9a"/><rect x="-2.400" y="-10" width="4.800" height="5" transform="rotate(180)" fill="#9a9a9a"/><rect x="-2.400" y="-10" width="4.800" height="5" transform="rotate(225)" fill="#9a9a9a"/><rect x="-2.400" y="-10" width="4.800" height="5" transform="rotate(270)" fill="#9a9a9a"/><rect x="-2.400" y="-10" width="4.800" height="5" transform="rotate(315)" fill="#9a9a9a"/><circle r="7.300" fill="#9a9a9a"/><circle r="3.300" fill="#f0f0f0"/></g></svg>
<span class="t" style="left:113px;top:252.75px;font-size:14.5px;color:#3a3a3a;font-weight:400;transform:scaleX(0.9224);">Document Settings</span>
<div class="a" style="left:72.7px;top:277.7px;width:136.8px;height:24.3px;background:#f0f0f0;"></div>
<svg class="a" style="left:49px;top:280.5px;" width="14" height="19" viewBox="0 0 14 19"><path d="M1.800 3 Q1.800 1.300 3.400 2 L12 8.500 Q13 9.400 12 10.300 L3.400 16.800 Q1.800 17.500 1.800 15.800 Z" fill="#e2e2e7" stroke="#333" stroke-width="1.500" stroke-linejoin="round"/></svg>
<svg class="a" style="left:76.3px;top:281.5px;" width="20" height="17" viewBox="0 0 20 17"><path d="M0 0.200 H8.700 V2.300 H0 Z M0 3.800 H9 L12 2 H19.800 V16.200 H0 Z" fill="#999"/></svg>
<span class="t" style="left:113px;top:282.75px;font-size:14.5px;color:#3a3a3a;font-weight:400;transform:scaleX(0.9587);">Named Views</span>
<div class="a" style="left:72.7px;top:307.7px;width:118.10000000000001px;height:24.3px;background:#f0f0f0;"></div>
<svg class="a" style="left:49px;top:310.5px;" width="14" height="19" viewBox="0 0 14 19"><path d="M1.800 3 Q1.800 1.300 3.400 2 L12 8.500 Q13 9.400 12 10.300 L3.400 16.800 Q1.800 17.500 1.800 15.800 Z" fill="#e2e2e7" stroke="#333" stroke-width="1.500" stroke-linejoin="round"/></svg>
<svg class="a" style="left:74.75px;top:311.3px;" width="23" height="17" viewBox="0 0 23 17"><g fill="none" stroke="#b4b4b4" stroke-width="1.200"><path d="M1.300 8.500 Q6 2.600 11.500 2.600 Q17 2.600 21.700 8.500 Q17 14.400 11.500 14.400 Q6 14.400 1.300 8.500 Z"/><circle cx="11.500" cy="8.300" r="3.800"/><circle cx="11.500" cy="8.300" r="1.800"/><path d="M4.500 0.800 L18.500 16" stroke="#a8a8a8"/></g></svg>
<svg class="a" style="left:107.5px;top:311.5px;" width="20" height="17" viewBox="0 0 20 17"><path d="M0 0.200 H8.700 V2.300 H0 Z M0 3.800 H9 L12 2 H19.800 V16.200 H0 Z" fill="#999"/></svg>
<span class="t" style="left:145px;top:312.75px;font-size:14.5px;color:#3a3a3a;font-weight:400;transform:scaleX(0.8946);">Origin</span>
<div class="a" style="left:72.7px;top:337.7px;width:128.10000000000002px;height:24.3px;background:#f0f0f0;"></div>
<svg class="a" style="left:49px;top:340.5px;" width="14" height="19" viewBox="0 0 14 19"><path d="M1.800 3 Q1.800 1.300 3.400 2 L12 8.500 Q13 9.400 12 10.300 L3.400 16.800 Q1.800 17.500 1.800 15.800 Z" fill="#e2e2e7" stroke="#333" stroke-width="1.500" stroke-linejoin="round"/></svg>
<svg class="a" style="left:75.75px;top:343.3px;" width="21" height="13" viewBox="0 0 21 13"><path d="M0.400 6.800 C3 2.300 7 0.700 10.500 0.700 C14 0.700 18 2.300 20.600 6.800 C18 11.300 14 12.900 10.500 12.900 C7 12.900 3 11.300 0.400 6.800 Z" fill="#9c9c9c"/><circle cx="10.300" cy="6.800" r="3.900" fill="#f0f0f0"/><circle cx="10.300" cy="6.800" r="2.400" fill="#9c9c9c"/></svg>
<svg class="a" style="left:107.5px;top:341.5px;" width="20" height="17" viewBox="0 0 20 17"><path d="M0 0.200 H8.700 V2.300 H0 Z M0 3.800 H9 L12 2 H19.800 V16.200 H0 Z" fill="#999"/></svg>
<span class="t" style="left:145px;top:342.75px;font-size:14.5px;color:#3a3a3a;font-weight:400;transform:scaleX(0.9203);">Bodies</span>
<div class="a" style="left:72.7px;top:367.7px;width:142.8px;height:24.3px;background:#f0f0f0;"></div>
<svg class="a" style="left:49px;top:370.5px;" width="14" height="19" viewBox="0 0 14 19"><path d="M1.800 3 Q1.800 1.300 3.400 2 L12 8.500 Q13 9.400 12 10.300 L3.400 16.800 Q1.800 17.500 1.800 15.800 Z" fill="#e2e2e7" stroke="#333" stroke-width="1.500" stroke-linejoin="round"/></svg>
<svg class="a" style="left:75.75px;top:373.3px;" width="21" height="13" viewBox="0 0 21 13"><path d="M0.400 6.800 C3 2.300 7 0.700 10.500 0.700 C14 0.700 18 2.300 20.600 6.800 C18 11.300 14 12.900 10.500 12.900 C7 12.900 3 11.300 0.400 6.800 Z" fill="#9c9c9c"/><circle cx="10.300" cy="6.800" r="3.900" fill="#f0f0f0"/><circle cx="10.300" cy="6.800" r="2.400" fill="#9c9c9c"/></svg>
<svg class="a" style="left:107.5px;top:371.5px;" width="20" height="17" viewBox="0 0 20 17"><path d="M0 0.200 H8.700 V2.300 H0 Z M0 3.800 H9 L12 2 H19.800 V16.200 H0 Z" fill="#999"/></svg>
<span class="t" style="left:145px;top:372.75px;font-size:14.5px;color:#3a3a3a;font-weight:400;transform:scaleX(0.9356);">Sketches</span>
<div class="a" style="left:72.7px;top:397.7px;width:274.8px;height:24.3px;background:#f0f0f0;"></div>
<svg class="a" style="left:49px;top:400.5px;" width="14" height="19" viewBox="0 0 14 19"><path d="M1.800 3 Q1.800 1.300 3.400 2 L12 8.500 Q13 9.400 12 10.300 L3.400 16.800 Q1.800 17.500 1.800 15.800 Z" fill="#e2e2e7" stroke="#333" stroke-width="1.500" stroke-linejoin="round"/></svg>
<svg class="a" style="left:75.75px;top:403.3px;" width="21" height="13" viewBox="0 0 21 13"><path d="M0.400 6.800 C3 2.300 7 0.700 10.500 0.700 C14 0.700 18 2.300 20.600 6.800 C18 11.300 14 12.900 10.500 12.900 C7 12.900 3 11.300 0.400 6.800 Z" fill="#9c9c9c"/><circle cx="10.300" cy="6.800" r="3.900" fill="#f0f0f0"/><circle cx="10.300" cy="6.800" r="2.400" fill="#9c9c9c"/></svg>
<svg class="a" style="left:107.2px;top:400px;" width="21" height="21" viewBox="0 0 21 21"><path d="M1 6.400 Q1 5.400 1.800 4.800 L5.800 0.900 Q6.300 0.500 7 0.500 H18.600 Q19.600 0.500 19.600 1.500 V14.200 Q19.600 14.900 19.100 15.400 L15.600 19.100 Q15.100 19.600 14.400 19.600 H2 Q1 19.600 1 18.600 Z" fill="#dfe1e8" stroke="#484848" stroke-width="1.300" stroke-linejoin="round"/><path d="M2 5.300 L6.300 1.200 H18.800 L14.900 5.300 Z" fill="#fbfbfc"/><path d="M15.200 5.600 L18.900 1.800 V14.400 L15.200 18.600 Z" fill="#c9ccd6"/><path d="M1.500 5.500 H15 V19" fill="none" stroke="#f4f4f6" stroke-width="0.800"/></svg>
<svg class="a" style="left:138px;top:399.5px;" width="22" height="21" viewBox="0 0 22 21"><g fill="none" stroke="#3e3e3e" stroke-width="2.500" stroke-linecap="round" stroke-linejoin="round"><path d="M11.800 3.800 L14 2.100 Q17.300 -0.100 19.500 2.700 Q21.100 5.600 18.400 8.300 L14.700 11.800 Q11.800 14 9.200 11.600"/><path d="M10.200 16.500 L7.900 18.600 Q4.700 20.700 2.400 17.900 Q0.700 15 3.500 12.100 L7.200 8.500 Q9.800 6.400 12 8.400"/></g></svg>
<span class="t" style="left:176.5px;top:402.75px;font-size:14.5px;color:#3a3a3a;font-weight:400;transform:scaleX(0.9001);">MOSFET 8-PowerSFN v1:1</span>
<div class="a" style="left:72.7px;top:427.7px;width:279.8px;height:24.3px;background:#f0f0f0;"></div>
<svg class="a" style="left:49px;top:430.5px;" width="14" height="19" viewBox="0 0 14 19"><path d="M1.800 3 Q1.800 1.300 3.400 2 L12 8.500 Q13 9.400 12 10.300 L3.400 16.800 Q1.800 17.500 1.800 15.800 Z" fill="#e2e2e7" stroke="#333" stroke-width="1.500" stroke-linejoin="round"/></svg>
<svg class="a" style="left:75.75px;top:433.3px;" width="21" height="13" viewBox="0 0 21 13"><path d="M0.400 6.800 C3 2.300 7 0.700 10.500 0.700 C14 0.700 18 2.300 20.600 6.800 C18 11.300 14 12.900 10.500 12.900 C7 12.900 3 11.300 0.400 6.800 Z" fill="#9c9c9c"/><circle cx="10.300" cy="6.800" r="3.900" fill="#f0f0f0"/><circle cx="10.300" cy="6.800" r="2.400" fill="#9c9c9c"/></svg>
<svg class="a" style="left:107.2px;top:430px;" width="21" height="21" viewBox="0 0 21 21"><path d="M1 6.400 Q1 5.400 1.800 4.800 L5.800 0.900 Q6.300 0.500 7 0.500 H18.600 Q19.600 0.500 19.600 1.500 V14.200 Q19.600 14.900 19.100 15.400 L15.600 19.100 Q15.100 19.600 14.400 19.600 H2 Q1 19.600 1 18.600 Z" fill="#dfe1e8" stroke="#484848" stroke-width="1.300" stroke-linejoin="round"/><path d="M2 5.300 L6.300 1.200 H18.800 L14.900 5.300 Z" fill="#fbfbfc"/><path d="M15.200 5.600 L18.900 1.800 V14.400 L15.200 18.600 Z" fill="#c9ccd6"/><path d="M1.500 5.500 H15 V19" fill="none" stroke="#f4f4f6" stroke-width="0.800"/></svg>
<svg class="a" style="left:138px;top:429.5px;" width="22" height="21" viewBox="0 0 22 21"><g fill="none" stroke="#3e3e3e" stroke-width="2.500" stroke-linecap="round" stroke-linejoin="round"><path d="M11.800 3.800 L14 2.100 Q17.300 -0.100 19.500 2.700 Q21.100 5.600 18.400 8.300 L14.700 11.800 Q11.800 14 9.200 11.600"/><path d="M10.200 16.500 L7.900 18.600 Q4.700 20.700 2.400 17.900 Q0.700 15 3.500 12.100 L7.200 8.500 Q9.800 6.400 12 8.400"/></g></svg>
<span class="t" style="left:176.5px;top:432.75px;font-size:14.5px;color:#3a3a3a;font-weight:400;transform:scaleX(0.9057);">MOSFET 8-PowerSFN v1:2</span>
<div class="a" style="left:72.7px;top:457.7px;width:279.8px;height:24.3px;background:#f0f0f0;"></div>
<svg class="a" style="left:49px;top:460.5px;" width="14" height="19" viewBox="0 0 14 19"><path d="M1.800 3 Q1.800 1.300 3.400 2 L12 8.500 Q13 9.400 12 10.300 L3.400 16.800 Q1.800 17.500 1.800 15.800 Z" fill="#e2e2e7" stroke="#333" stroke-width="1.500" stroke-linejoin="round"/></svg>
<svg class="a" style="left:75.75px;top:463.3px;" width="21" height="13" viewBox="0 0 21 13"><path d="M0.400 6.800 C3 2.300 7 0.700 10.500 0.700 C14 0.700 18 2.300 20.600 6.800 C18 11.300 14 12.900 10.500 12.900 C7 12.900 3 11.300 0.400 6.800 Z" fill="#9c9c9c"/><circle cx="10.300" cy="6.800" r="3.900" fill="#f0f0f0"/><circle cx="10.300" cy="6.800" r="2.400" fill="#9c9c9c"/></svg>
<svg class="a" style="left:107.2px;top:460px;" width="21" height="21" viewBox="0 0 21 21"><path d="M1 6.400 Q1 5.400 1.800 4.800 L5.800 0.900 Q6.300 0.500 7 0.500 H18.600 Q19.600 0.500 19.600 1.500 V14.200 Q19.600 14.900 19.100 15.400 L15.600 19.100 Q15.100 19.600 14.400 19.600 H2 Q1 19.600 1 18.600 Z" fill="#dfe1e8" stroke="#484848" stroke-width="1.300" stroke-linejoin="round"/><path d="M2 5.300 L6.300 1.200 H18.800 L14.900 5.300 Z" fill="#fbfbfc"/><path d="M15.200 5.600 L18.900 1.800 V14.400 L15.200 18.600 Z" fill="#c9ccd6"/><path d="M1.500 5.500 H15 V19" fill="none" stroke="#f4f4f6" stroke-width="0.800"/></svg>
<svg class="a" style="left:138px;top:459.5px;" width="22" height="21" viewBox="0 0 22 21"><g fill="none" stroke="#3e3e3e" stroke-width="2.500" stroke-linecap="round" stroke-linejoin="round"><path d="M11.800 3.800 L14 2.100 Q17.300 -0.100 19.500 2.700 Q21.100 5.600 18.400 8.300 L14.700 11.800 Q11.800 14 9.200 11.600"/><path d="M10.200 16.500 L7.900 18.600 Q4.700 20.700 2.400 17.900 Q0.700 15 3.500 12.100 L7.200 8.500 Q9.800 6.400 12 8.400"/></g></svg>
<span class="t" style="left:176.5px;top:462.75px;font-size:14.5px;color:#3a3a3a;font-weight:400;transform:scaleX(0.9057);">MOSFET 8-PowerSFN v1:3</span>
<div class="a" style="left:72.7px;top:487.7px;width:279.8px;height:24.3px;background:#f0f0f0;"></div>
<svg class="a" style="left:49px;top:490.5px;" width="14" height="19" viewBox="0 0 14 19"><path d="M1.800 3 Q1.800 1.300 3.400 2 L12 8.500 Q13 9.400 12 10.300 L3.400 16.800 Q1.800 17.500 1.800 15.800 Z" fill="#e2e2e7" stroke="#333" stroke-width="1.500" stroke-linejoin="round"/></svg>
<svg class="a" style="left:75.75px;top:493.3px;" width="21" height="13" viewBox="0 0 21 13"><path d="M0.400 6.800 C3 2.300 7 0.700 10.500 0.700 C14 0.700 18 2.300 20.600 6.800 C18 11.300 14 12.900 10.500 12.900 C7 12.900 3 11.300 0.400 6.800 Z" fill="#9c9c9c"/><circle cx="10.300" cy="6.800" r="3.900" fill="#f0f0f0"/><circle cx="10.300" cy="6.800" r="2.400" fill="#9c9c9c"/></svg>
<svg class="a" style="left:107.2px;top:490px;" width="21" height="21" viewBox="0 0 21 21"><path d="M1 6.400 Q1 5.400 1.800 4.800 L5.800 0.900 Q6.300 0.500 7 0.500 H18.600 Q19.600 0.500 19.600 1.500 V14.200 Q19.600 14.900 19.100 15.400 L15.600 19.100 Q15.100 19.600 14.400 19.600 H2 Q1 19.600 1 18.600 Z" fill="#dfe1e8" stroke="#484848" stroke-width="1.300" stroke-linejoin="round"/><path d="M2 5.300 L6.300 1.200 H18.800 L14.900 5.300 Z" fill="#fbfbfc"/><path d="M15.200 5.600 L18.900 1.800 V14.400 L15.200 18.600 Z" fill="#c9ccd6"/><path d="M1.500 5.500 H15 V19" fill="none" stroke="#f4f4f6" stroke-width="0.800"/></svg>
<svg class="a" style="left:138px;top:489.5px;" width="22" height="21" viewBox="0 0 22 21"><g fill="none" stroke="#3e3e3e" stroke-width="2.500" stroke-linecap="round" stroke-linejoin="round"><path d="M11.800 3.800 L14 2.100 Q17.300 -0.100 19.500 2.700 Q21.100 5.600 18.400 8.300 L14.700 11.800 Q11.800 14 9.200 11.600"/><path d="M10.200 16.500 L7.900 18.600 Q4.700 20.700 2.400 17.900 Q0.700 15 3.500 12.100 L7.200 8.500 Q9.800 6.400 12 8.400"/></g></svg>
<span class="t" style="left:176.5px;top:492.75px;font-size:14.5px;color:#3a3a3a;font-weight:400;transform:scaleX(0.9057);">MOSFET 8-PowerSFN v1:4</span>
<div class="a" style="left:72.7px;top:517.7px;width:279.8px;height:24.3px;background:#f0f0f0;"></div>
<svg class="a" style="left:49px;top:520.5px;" width="14" height="19" viewBox="0 0 14 19"><path d="M1.800 3 Q1.800 1.300 3.400 2 L12 8.500 Q13 9.400 12 10.300 L3.400 16.800 Q1.800 17.500 1.800 15.800 Z" fill="#e2e2e7" stroke="#333" stroke-width="1.500" stroke-linejoin="round"/></svg>
<svg class="a" style="left:75.75px;top:523.3px;" width="21" height="13" viewBox="0 0 21 13"><path d="M0.400 6.800 C3 2.300 7 0.700 10.500 0.700 C14 0.700 18 2.300 20.600 6.800 C18 11.300 14 12.900 10.500 12.900 C7 12.900 3 11.300 0.400 6.800 Z" fill="#9c9c9c"/><circle cx="10.300" cy="6.800" r="3.900" fill="#f0f0f0"/><circle cx="10.300" cy="6.800" r="2.400" fill="#9c9c9c"/></svg>
<svg class="a" style="left:107.2px;top:520px;" width="21" height="21" viewBox="0 0 21 21"><path d="M1 6.400 Q1 5.400 1.800 4.800 L5.800 0.900 Q6.300 0.500 7 0.500 H18.600 Q19.600 0.500 19.600 1.500 V14.200 Q19.600 14.900 19.100 15.400 L15.600 19.100 Q15.100 19.600 14.400 19.600 H2 Q1 19.600 1 18.600 Z" fill="#dfe1e8" stroke="#484848" stroke-width="1.300" stroke-linejoin="round"/><path d="M2 5.300 L6.300 1.200 H18.800 L14.900 5.300 Z" fill="#fbfbfc"/><path d="M15.200 5.600 L18.900 1.800 V14.400 L15.200 18.600 Z" fill="#c9ccd6"/><path d="M1.500 5.500 H15 V19" fill="none" stroke="#f4f4f6" stroke-width="0.800"/></svg>
<svg class="a" style="left:138px;top:519.5px;" width="22" height="21" viewBox="0 0 22 21"><g fill="none" stroke="#3e3e3e" stroke-width="2.500" stroke-linecap="round" stroke-linejoin="round"><path d="M11.800 3.800 L14 2.100 Q17.300 -0.100 19.500 2.700 Q21.100 5.600 18.400 8.300 L14.700 11.800 Q11.800 14 9.200 11.600"/><path d="M10.200 16.500 L7.900 18.600 Q4.700 20.700 2.400 17.900 Q0.700 15 3.500 12.100 L7.200 8.500 Q9.800 6.400 12 8.400"/></g></svg>
<span class="t" style="left:176.5px;top:522.75px;font-size:14.5px;color:#3a3a3a;font-weight:400;transform:scaleX(0.9057);">MOSFET 8-PowerSFN v1:5</span>
<div class="a" style="left:72.7px;top:547.7px;width:279.8px;height:24.3px;background:#f0f0f0;"></div>
<svg class="a" style="left:49px;top:550.5px;" width="14" height="19" viewBox="0 0 14 19"><path d="M1.800 3 Q1.800 1.300 3.400 2 L12 8.500 Q13 9.400 12 10.300 L3.400 16.800 Q1.800 17.500 1.800 15.800 Z" fill="#e2e2e7" stroke="#333" stroke-width="1.500" stroke-linejoin="round"/></svg>
<svg class="a" style="left:75.75px;top:553.3px;" width="21" height="13" viewBox="0 0 21 13"><path d="M0.400 6.800 C3 2.300 7 0.700 10.500 0.700 C14 0.700 18 2.300 20.600 6.800 C18 11.300 14 12.900 10.500 12.900 C7 12.900 3 11.300 0.400 6.800 Z" fill="#9c9c9c"/><circle cx="10.300" cy="6.800" r="3.900" fill="#f0f0f0"/><circle cx="10.300" cy="6.800" r="2.400" fill="#9c9c9c"/></svg>
<svg class="a" style="left:107.2px;top:550px;" width="21" height="21" viewBox="0 0 21 21"><path d="M1 6.400 Q1 5.400 1.800 4.800 L5.800 0.900 Q6.300 0.500 7 0.500 H18.600 Q19.600 0.500 19.600 1.500 V14.200 Q19.600 14.900 19.100 15.400 L15.600 19.100 Q15.100 19.600 14.400 19.600 H2 Q1 19.600 1 18.600 Z" fill="#dfe1e8" stroke="#484848" stroke-width="1.300" stroke-linejoin="round"/><path d="M2 5.300 L6.300 1.200 H18.800 L14.900 5.300 Z" fill="#fbfbfc"/><path d="M15.200 5.600 L18.900 1.800 V14.400 L15.200 18.600 Z" fill="#c9ccd6"/><path d="M1.500 5.500 H15 V19" fill="none" stroke="#f4f4f6" stroke-width="0.800"/></svg>
<svg class="a" style="left:138px;top:549.5px;" width="22" height="21" viewBox="0 0 22 21"><g fill="none" stroke="#3e3e3e" stroke-width="2.500" stroke-linecap="round" stroke-linejoin="round"><path d="M11.800 3.800 L14 2.100 Q17.300 -0.100 19.500 2.700 Q21.100 5.600 18.400 8.300 L14.700 11.800 Q11.800 14 9.200 11.600"/><path d="M10.200 16.500 L7.900 18.600 Q4.700 20.700 2.400 17.900 Q0.700 15 3.500 12.100 L7.200 8.500 Q9.800 6.400 12 8.400"/></g></svg>
<span class="t" style="left:176.5px;top:552.75px;font-size:14.5px;color:#3a3a3a;font-weight:400;transform:scaleX(0.9057);">MOSFET 8-PowerSFN v1:6</span>
<div class="a" style="left:72.7px;top:577.7px;width:279.8px;height:24.3px;background:#f0f0f0;"></div>
<svg class="a" style="left:49px;top:580.5px;" width="14" height="19" viewBox="0 0 14 19"><path d="M1.800 3 Q1.800 1.300 3.400 2 L12 8.500 Q13 9.400 12 10.300 L3.400 16.800 Q1.800 17.500 1.800 15.800 Z" fill="#e2e2e7" stroke="#333" stroke-width="1.500" stroke-linejoin="round"/></svg>
<svg class="a" style="left:75.75px;top:583.3px;" width="21" height="13" viewBox="0 0 21 13"><path d="M0.400 6.800 C3 2.300 7 0.700 10.500 0.700 C14 0.700 18 2.300 20.600 6.800 C18 11.300 14 12.900 10.500 12.900 C7 12.900 3 11.300 0.400 6.800 Z" fill="#9c9c9c"/><circle cx="10.300" cy="6.800" r="3.900" fill="#f0f0f0"/><circle cx="10.300" cy="6.800" r="2.400" fill="#9c9c9c"/></svg>
<svg class="a" style="left:107.2px;top:580px;" width="21" height="21" viewBox="0 0 21 21"><path d="M1 6.400 Q1 5.400 1.800 4.800 L5.800 0.900 Q6.300 0.500 7 0.500 H18.600 Q19.600 0.500 19.600 1.500 V14.200 Q19.600 14.900 19.100 15.400 L15.600 19.100 Q15.100 19.600 14.400 19.600 H2 Q1 19.600 1 18.600 Z" fill="#dfe1e8" stroke="#484848" stroke-width="1.300" stroke-linejoin="round"/><path d="M2 5.300 L6.300 1.200 H18.800 L14.900 5.300 Z" fill="#fbfbfc"/><path d="M15.200 5.600 L18.900 1.800 V14.400 L15.200 18.600 Z" fill="#c9ccd6"/><path d="M1.500 5.500 H15 V19" fill="none" stroke="#f4f4f6" stroke-width="0.800"/></svg>
<svg class="a" style="left:138px;top:579.5px;" width="22" height="21" viewBox="0 0 22 21"><g fill="none" stroke="#3e3e3e" stroke-width="2.500" stroke-linecap="round" stroke-linejoin="round"><path d="M11.800 3.800 L14 2.100 Q17.300 -0.100 19.500 2.700 Q21.100 5.600 18.400 8.300 L14.700 11.800 Q11.800 14 9.200 11.600"/><path d="M10.200 16.500 L7.900 18.600 Q4.700 20.700 2.400 17.900 Q0.700 15 3.500 12.100 L7.200 8.500 Q9.800 6.400 12 8.400"/></g></svg>
<span class="t" style="left:176.5px;top:582.75px;font-size:14.5px;color:#3a3a3a;font-weight:400;transform:scaleX(0.9057);">MOSFET 8-PowerSFN v1:7</span>
<div class="a" style="left:72.7px;top:607.7px;width:279.8px;height:24.3px;background:#f0f0f0;"></div>
<svg class="a" style="left:49px;top:610.5px;" width="14" height="19" viewBox="0 0 14 19"><path d="M1.800 3 Q1.800 1.300 3.400 2 L12 8.500 Q13 9.400 12 10.300 L3.400 16.800 Q1.800 17.500 1.800 15.800 Z" fill="#e2e2e7" stroke="#333" stroke-width="1.500" stroke-linejoin="round"/></svg>
<svg class="a" style="left:75.75px;top:613.3px;" width="21" height="13" viewBox="0 0 21 13"><path d="M0.400 6.800 C3 2.300 7 0.700 10.500 0.700 C14 0.700 18 2.300 20.600 6.800 C18 11.300 14 12.900 10.500 12.900 C7 12.900 3 11.300 0.400 6.800 Z" fill="#9c9c9c"/><circle cx="10.300" cy="6.800" r="3.900" fill="#f0f0f0"/><circle cx="10.300" cy="6.800" r="2.400" fill="#9c9c9c"/></svg>
<svg class="a" style="left:107.2px;top:610px;" width="21" height="21" viewBox="0 0 21 21"><path d="M1 6.400 Q1 5.400 1.800 4.800 L5.800 0.900 Q6.300 0.500 7 0.500 H18.600 Q19.600 0.500 19.600 1.500 V14.200 Q19.600 14.900 19.100 15.400 L15.600 19.100 Q15.100 19.600 14.400 19.600 H2 Q1 19.600 1 18.600 Z" fill="#dfe1e8" stroke="#484848" stroke-width="1.300" stroke-linejoin="round"/><path d="M2 5.300 L6.300 1.200 H18.800 L14.900 5.300 Z" fill="#fbfbfc"/><path d="M15.200 5.600 L18.900 1.800 V14.400 L15.200 18.600 Z" fill="#c9ccd6"/><path d="M1.500 5.500 H15 V19" fill="none" stroke="#f4f4f6" stroke-width="0.800"/></svg>
<svg class="a" style="left:138px;top:609.5px;" width="22" height="21" viewBox="0 0 22 21"><g fill="none" stroke="#3e3e3e" stroke-width="2.500" stroke-linecap="round" stroke-linejoin="round"><path d="M11.800 3.800 L14 2.100 Q17.300 -0.100 19.500 2.700 Q21.100 5.600 18.400 8.300 L14.700 11.800 Q11.800 14 9.200 11.600"/><path d="M10.200 16.500 L7.900 18.600 Q4.700 20.700 2.400 17.900 Q0.700 15 3.500 12.100 L7.200 8.500 Q9.800 6.400 12 8.400"/></g></svg>
<span class="t" style="left:176.5px;top:612.75px;font-size:14.5px;color:#3a3a3a;font-weight:400;transform:scaleX(0.9057);">MOSFET 8-PowerSFN v1:8</span>
<div class="a" style="left:72.7px;top:637.7px;width:279.8px;height:24.3px;background:#f0f0f0;"></div>
<svg class="a" style="left:49px;top:640.5px;" width="14" height="19" viewBox="0 0 14 19"><path d="M1.800 3 Q1.800 1.300 3.400 2 L12 8.500 Q13 9.400 12 10.300 L3.400 16.800 Q1.800 17.500 1.800 15.800 Z" fill="#e2e2e7" stroke="#333" stroke-width="1.500" stroke-linejoin="round"/></svg>
<svg class="a" style="left:75.75px;top:643.3px;" width="21" height="13" viewBox="0 0 21 13"><path d="M0.400 6.800 C3 2.300 7 0.700 10.500 0.700 C14 0.700 18 2.300 20.600 6.800 C18 11.300 14 12.900 10.500 12.900 C7 12.900 3 11.300 0.400 6.800 Z" fill="#9c9c9c"/><circle cx="10.300" cy="6.800" r="3.900" fill="#f0f0f0"/><circle cx="10.300" cy="6.800" r="2.400" fill="#9c9c9c"/></svg>
<svg class="a" style="left:107.2px;top:640px;" width="21" height="21" viewBox="0 0 21 21"><path d="M1 6.400 Q1 5.400 1.800 4.800 L5.800 0.900 Q6.300 0.500 7 0.500 H18.600 Q19.600 0.500 19.600 1.500 V14.200 Q19.600 14.900 19.100 15.400 L15.600 19.100 Q15.100 19.600 14.400 19.600 H2 Q1 19.600 1 18.600 Z" fill="#dfe1e8" stroke="#484848" stroke-width="1.300" stroke-linejoin="round"/><path d="M2 5.300 L6.300 1.200 H18.800 L14.900 5.300 Z" fill="#fbfbfc"/><path d="M15.200 5.600 L18.900 1.800 V14.400 L15.200 18.600 Z" fill="#c9ccd6"/><path d="M1.500 5.500 H15 V19" fill="none" stroke="#f4f4f6" stroke-width="0.800"/></svg>
<svg class="a" style="left:138px;top:639.5px;" width="22" height="21" viewBox="0 0 22 21"><g fill="none" stroke="#3e3e3e" stroke-width="2.500" stroke-linecap="round" stroke-linejoin="round"><path d="M11.800 3.800 L14 2.100 Q17.300 -0.100 19.500 2.700 Q21.100 5.600 18.400 8.300 L14.700 11.800 Q11.800 14 9.200 11.600"/><path d="M10.200 16.500 L7.900 18.600 Q4.700 20.700 2.400 17.900 Q0.700 15 3.500 12.100 L7.200 8.500 Q9.800 6.400 12 8.400"/></g></svg>
<span class="t" style="left:176.5px;top:642.75px;font-size:14.5px;color:#3a3a3a;font-weight:400;transform:scaleX(0.9057);">MOSFET 8-PowerSFN v1:9</span>
<div class="a" style="left:72.7px;top:667.7px;width:284.8px;height:24.3px;background:#f0f0f0;"></div>
<svg class="a" style="left:49px;top:670.5px;" width="14" height="19" viewBox="0 0 14 19"><path d="M1.800 3 Q1.800 1.300 3.400 2 L12 8.500 Q13 9.400 12 10.300 L3.400 16.800 Q1.800 17.500 1.800 15.800 Z" fill="#e2e2e7" stroke="#333" stroke-width="1.500" stroke-linejoin="round"/></svg>
<svg class="a" style="left:75.75px;top:673.3px;" width="21" height="13" viewBox="0 0 21 13"><path d="M0.400 6.800 C3 2.300 7 0.700 10.500 0.700 C14 0.700 18 2.300 20.600 6.800 C18 11.300 14 12.900 10.500 12.900 C7 12.900 3 11.300 0.400 6.800 Z" fill="#9c9c9c"/><circle cx="10.300" cy="6.800" r="3.900" fill="#f0f0f0"/><circle cx="10.300" cy="6.800" r="2.400" fill="#9c9c9c"/></svg>
<svg class="a" style="left:107.2px;top:670px;" width="21" height="21" viewBox="0 0 21 21"><path d="M1 6.400 Q1 5.400 1.800 4.800 L5.800 0.900 Q6.300 0.500 7 0.500 H18.600 Q19.600 0.500 19.600 1.500 V14.200 Q19.600 14.900 19.100 15.400 L15.600 19.100 Q15.100 19.600 14.400 19.600 H2 Q1 19.600 1 18.600 Z" fill="#dfe1e8" stroke="#484848" stroke-width="1.300" stroke-linejoin="round"/><path d="M2 5.300 L6.300 1.200 H18.800 L14.900 5.300 Z" fill="#fbfbfc"/><path d="M15.200 5.600 L18.900 1.800 V14.400 L15.200 18.600 Z" fill="#c9ccd6"/><path d="M1.500 5.500 H15 V19" fill="none" stroke="#f4f4f6" stroke-width="0.800"/></svg>
<svg class="a" style="left:138px;top:669.5px;" width="22" height="21" viewBox="0 0 22 21"><g fill="none" stroke="#3e3e3e" stroke-width="2.500" stroke-linecap="round" stroke-linejoin="round"><path d="M11.800 3.800 L14 2.100 Q17.300 -0.100 19.500 2.700 Q21.100 5.600 18.400 8.300 L14.700 11.800 Q11.800 14 9.200 11.600"/><path d="M10.200 16.500 L7.900 18.600 Q4.700 20.700 2.400 17.900 Q0.700 15 3.500 12.100 L7.200 8.500 Q9.800 6.400 12 8.400"/></g></svg>
<span class="t" style="left:176.5px;top:672.75px;font-size:14.5px;color:#3a3a3a;font-weight:400;transform:scaleX(0.9041);">MOSFET 8-PowerSFN v1:10</span>
<div class="a" style="left:72.7px;top:697.7px;width:284.8px;height:24.3px;background:#f0f0f0;"></div>
<svg class="a" style="left:49px;top:700.5px;" width="14" height="19" viewBox="0 0 14 19"><path d="M1.800 3 Q1.800 1.300 3.400 2 L12 8.500 Q13 9.400 12 10.300 L3.400 16.800 Q1.800 17.500 1.800 15.800 Z" fill="#e2e2e7" stroke="#333" stroke-width="1.500" stroke-linejoin="round"/></svg>
<svg class="a" style="left:75.75px;top:703.3px;" width="21" height="13" viewBox="0 0 21 13"><path d="M0.400 6.800 C3 2.300 7 0.700 10.500 0.700 C14 0.700 18 2.300 20.600 6.800 C18 11.300 14 12.900 10.500 12.900 C7 12.900 3 11.300 0.400 6.800 Z" fill="#9c9c9c"/><circle cx="10.300" cy="6.800" r="3.900" fill="#f0f0f0"/><circle cx="10.300" cy="6.800" r="2.400" fill="#9c9c9c"/></svg>
<svg class="a" style="left:107.2px;top:700px;" width="21" height="21" viewBox="0 0 21 21"><path d="M1 6.400 Q1 5.400 1.800 4.800 L5.800 0.900 Q6.300 0.500 7 0.500 H18.600 Q19.600 0.500 19.600 1.500 V14.200 Q19.600 14.900 19.100 15.400 L15.600 19.100 Q15.100 19.600 14.400 19.600 H2 Q1 19.600 1 18.600 Z" fill="#dfe1e8" stroke="#484848" stroke-width="1.300" stroke-linejoin="round"/><path d="M2 5.300 L6.300 1.200 H18.800 L14.900 5.300 Z" fill="#fbfbfc"/><path d="M15.200 5.600 L18.900 1.800 V14.400 L15.200 18.600 Z" fill="#c9ccd6"/><path d="M1.500 5.500 H15 V19" fill="none" stroke="#f4f4f6" stroke-width="0.800"/></svg>
<svg class="a" style="left:138px;top:699.5px;" width="22" height="21" viewBox="0 0 22 21"><g fill="none" stroke="#3e3e3e" stroke-width="2.500" stroke-linecap="round" stroke-linejoin="round"><path d="M11.800 3.800 L14 2.100 Q17.300 -0.100 19.500 2.700 Q21.100 5.600 18.400 8.300 L14.700 11.800 Q11.800 14 9.200 11.600"/><path d="M10.200 16.500 L7.900 18.600 Q4.700 20.700 2.400 17.900 Q0.700 15 3.500 12.100 L7.200 8.500 Q9.800 6.400 12 8.400"/></g></svg>
<span class="t" style="left:176.5px;top:702.75px;font-size:14.5px;color:#3a3a3a;font-weight:400;transform:scaleX(0.9012);">MOSFET 8-PowerSFN v1:11</span>
<div class="a" style="left:72.7px;top:727.7px;width:284.8px;height:24.3px;background:#f0f0f0;"></div>
<svg class="a" style="left:49px;top:730.5px;" width="14" height="19" viewBox="0 0 14 19"><path d="M1.800 3 Q1.800 1.300 3.400 2 L12 8.500 Q13 9.400 12 10.300 L3.400 16.800 Q1.800 17.500 1.800 15.800 Z" fill="#e2e2e7" stroke="#333" stroke-width="1.500" stroke-linejoin="round"/></svg>
<svg class="a" style="left:75.75px;top:733.3px;" width="21" height="13" viewBox="0 0 21 13"><path d="M0.400 6.800 C3 2.300 7 0.700 10.500 0.700 C14 0.700 18 2.300 20.600 6.800 C18 11.300 14 12.900 10.500 12.900 C7 12.900 3 11.300 0.400 6.800 Z" fill="#9c9c9c"/><circle cx="10.300" cy="6.800" r="3.900" fill="#f0f0f0"/><circle cx="10.300" cy="6.800" r="2.400" fill="#9c9c9c"/></svg>
<svg class="a" style="left:107.2px;top:730px;" width="21" height="21" viewBox="0 0 21 21"><path d="M1 6.400 Q1 5.400 1.800 4.800 L5.800 0.900 Q6.300 0.500 7 0.500 H18.600 Q19.600 0.500 19.600 1.500 V14.200 Q19.600 14.900 19.100 15.400 L15.600 19.100 Q15.100 19.600 14.400 19.600 H2 Q1 19.600 1 18.600 Z" fill="#dfe1e8" stroke="#484848" stroke-width="1.300" stroke-linejoin="round"/><path d="M2 5.300 L6.300 1.200 H18.800 L14.900 5.300 Z" fill="#fbfbfc"/><path d="M15.200 5.600 L18.900 1.800 V14.400 L15.200 18.600 Z" fill="#c9ccd6"/><path d="M1.500 5.500 H15 V19" fill="none" stroke="#f4f4f6" stroke-width="0.800"/></svg>
<svg class="a" style="left:138px;top:729.5px;" width="22" height="21" viewBox="0 0 22 21"><g fill="none" stroke="#3e3e3e" stroke-width="2.500" stroke-linecap="round" stroke-linejoin="round"><path d="M11.800 3.800 L14 2.100 Q17.300 -0.100 19.500 2.700 Q21.100 5.600 18.400 8.300 L14.700 11.800 Q11.800 14 9.200 11.600"/><path d="M10.200 16.500 L7.900 18.600 Q4.700 20.700 2.400 17.900 Q0.700 15 3.500 12.100 L7.200 8.500 Q9.800 6.400 12 8.400"/></g></svg>
<span class="t" style="left:176.5px;top:732.75px;font-size:14.5px;color:#3a3a3a;font-weight:400;transform:scaleX(0.9067);">MOSFET 8-PowerSFN v1:12</span>
<div class="a" style="left:72.7px;top:757.7px;width:234.3px;height:24.3px;background:#f0f0f0;"></div>
<svg class="a" style="left:49px;top:760.5px;" width="14" height="19" viewBox="0 0 14 19"><path d="M1.800 3 Q1.800 1.300 3.400 2 L12 8.500 Q13 9.400 12 10.300 L3.400 16.800 Q1.800 17.500 1.800 15.800 Z" fill="#e2e2e7" stroke="#333" stroke-width="1.500" stroke-linejoin="round"/></svg>
<svg class="a" style="left:75.75px;top:763.3px;" width="21" height="13" viewBox="0 0 21 13"><path d="M0.400 6.800 C3 2.300 7 0.700 10.500 0.700 C14 0.700 18 2.300 20.600 6.800 C18 11.300 14 12.900 10.500 12.900 C7 12.900 3 11.300 0.400 6.800 Z" fill="#9c9c9c"/><circle cx="10.300" cy="6.800" r="3.900" fill="#f0f0f0"/><circle cx="10.300" cy="6.800" r="2.400" fill="#9c9c9c"/></svg>
<svg class="a" style="left:107.2px;top:760px;" width="21" height="21" viewBox="0 0 21 21"><path d="M1.200 5.300 L4.600 0.800 Q5 0.500 5.600 0.500 H10.900 Q11.700 0.500 11.700 1.300 V7.500 H18.300 Q19.200 7.500 19.200 8.400 V14.600 Q19.200 15.200 18.800 15.700 L16.500 18.700 Q16.100 19.200 15.400 19.200 H2.200 Q1.200 19.200 1.200 18.200 Z" fill="#e6e8ee" stroke="#484848" stroke-width="1.300" stroke-linejoin="round"/><path d="M2 5 L5.200 1.200 H11 L8.300 5 Z M9 10.200 L11.800 8 H18.400 L16.200 10.200 Z" fill="#fcfcfd"/><path d="M8.500 5.300 L11.200 1.600 V7.500 L8.500 10.400 Z M16.500 10.600 L18.700 8.300 V14.700 L16.500 18.400 Z" fill="#cfd2db"/><path d="M8.300 5.200 V19 M8.300 10.400 H16.250 V19 M1.500 12 H8.300" fill="none" stroke="#484848" stroke-width="1" opacity="0.550"/></svg>
<svg class="a" style="left:138px;top:759.5px;" width="22" height="21" viewBox="0 0 22 21"><g fill="none" stroke="#3e3e3e" stroke-width="2.500" stroke-linecap="round" stroke-linejoin="round"><path d="M11.800 3.800 L14 2.100 Q17.300 -0.100 19.500 2.700 Q21.100 5.600 18.400 8.300 L14.700 11.800 Q11.800 14 9.200 11.600"/><path d="M10.200 16.500 L7.900 18.600 Q4.700 20.700 2.400 17.900 Q0.700 15 3.500 12.100 L7.200 8.500 Q9.800 6.400 12 8.400"/></g></svg>
<span class="t" style="left:176.5px;top:762.75px;font-size:14.5px;color:#3a3a3a;font-weight:400;transform:scaleX(0.9249);">R0805 Resistor v1:1</span>
<div class="a" style="left:72.7px;top:787.7px;width:239.3px;height:24.3px;background:#f0f0f0;"></div>
<svg class="a" style="left:49px;top:790.5px;" width="14" height="19" viewBox="0 0 14 19"><path d="M1.800 3 Q1.800 1.300 3.400 2 L12 8.500 Q13 9.400 12 10.300 L3.400 16.800 Q1.800 17.500 1.800 15.800 Z" fill="#e2e2e7" stroke="#333" stroke-width="1.500" stroke-linejoin="round"/></svg>
<svg class="a" style="left:75.75px;top:793.3px;" width="21" height="13" viewBox="0 0 21 13"><path d="M0.400 6.800 C3 2.300 7 0.700 10.500 0.700 C14 0.700 18 2.300 20.600 6.800 C18 11.300 14 12.900 10.500 12.900 C7 12.900 3 11.300 0.400 6.800 Z" fill="#9c9c9c"/><circle cx="10.300" cy="6.800" r="3.900" fill="#f0f0f0"/><circle cx="10.300" cy="6.800" r="2.400" fill="#9c9c9c"/></svg>
<svg class="a" style="left:107.2px;top:790px;" width="21" height="21" viewBox="0 0 21 21"><path d="M1.200 5.300 L4.600 0.800 Q5 0.500 5.600 0.500 H10.900 Q11.700 0.500 11.700 1.300 V7.500 H18.300 Q19.200 7.500 19.200 8.400 V14.600 Q19.200 15.200 18.800 15.700 L16.500 18.700 Q16.100 19.200 15.400 19.200 H2.200 Q1.200 19.200 1.200 18.200 Z" fill="#e6e8ee" stroke="#484848" stroke-width="1.300" stroke-linejoin="round"/><path d="M2 5 L5.200 1.200 H11 L8.300 5 Z M9 10.200 L11.800 8 H18.400 L16.200 10.200 Z" fill="#fcfcfd"/><path d="M8.500 5.300 L11.200 1.600 V7.500 L8.500 10.400 Z M16.500 10.600 L18.700 8.300 V14.700 L16.500 18.400 Z" fill="#cfd2db"/><path d="M8.300 5.200 V19 M8.300 10.400 H16.250 V19 M1.500 12 H8.300" fill="none" stroke="#484848" stroke-width="1" opacity="0.550"/></svg>
<svg class="a" style="left:138px;top:789.5px;" width="22" height="21" viewBox="0 0 22 21"><g fill="none" stroke="#3e3e3e" stroke-width="2.500" stroke-linecap="round" stroke-linejoin="round"><path d="M11.800 3.800 L14 2.100 Q17.300 -0.100 19.500 2.700 Q21.100 5.600 18.400 8.300 L14.700 11.800 Q11.800 14 9.200 11.600"/><path d="M10.200 16.500 L7.900 18.600 Q4.700 20.700 2.400 17.900 Q0.700 15 3.500 12.100 L7.200 8.500 Q9.800 6.400 12 8.400"/></g></svg>
<span class="t" style="left:176.5px;top:792.75px;font-size:14.5px;color:#3a3a3a;font-weight:400;transform:scaleX(0.9325);">R0805 Resistor v1:2</span>
<div class="a" style="left:72.7px;top:817.7px;width:304.8px;height:24.3px;background:#f0f0f0;"></div>
<svg class="a" style="left:49px;top:820.5px;" width="14" height="19" viewBox="0 0 14 19"><path d="M1.800 3 Q1.800 1.300 3.400 2 L12 8.500 Q13 9.400 12 10.300 L3.400 16.800 Q1.800 17.500 1.800 15.800 Z" fill="#e2e2e7" stroke="#333" stroke-width="1.500" stroke-linejoin="round"/></svg>
<svg class="a" style="left:75.75px;top:823.3px;" width="21" height="13" viewBox="0 0 21 13"><path d="M0.400 6.800 C3 2.300 7 0.700 10.500 0.700 C14 0.700 18 2.300 20.600 6.800 C18 11.300 14 12.900 10.500 12.900 C7 12.900 3 11.300 0.400 6.800 Z" fill="#9c9c9c"/><circle cx="10.300" cy="6.800" r="3.900" fill="#f0f0f0"/><circle cx="10.300" cy="6.800" r="2.400" fill="#9c9c9c"/></svg>
<svg class="a" style="left:107.2px;top:820px;" width="21" height="21" viewBox="0 0 21 21"><path d="M1 6.400 Q1 5.400 1.800 4.800 L5.800 0.900 Q6.300 0.500 7 0.500 H18.600 Q19.600 0.500 19.600 1.500 V14.200 Q19.600 14.900 19.100 15.400 L15.600 19.100 Q15.100 19.600 14.400 19.600 H2 Q1 19.600 1 18.600 Z" fill="#dfe1e8" stroke="#484848" stroke-width="1.300" stroke-linejoin="round"/><path d="M2 5.300 L6.300 1.200 H18.800 L14.900 5.300 Z" fill="#fbfbfc"/><path d="M15.200 5.600 L18.900 1.800 V14.400 L15.200 18.600 Z" fill="#c9ccd6"/><path d="M1.500 5.500 H15 V19" fill="none" stroke="#f4f4f6" stroke-width="0.800"/></svg>
<svg class="a" style="left:138px;top:819.5px;" width="22" height="21" viewBox="0 0 22 21"><g fill="none" stroke="#3e3e3e" stroke-width="2.500" stroke-linecap="round" stroke-linejoin="round"><path d="M11.800 3.800 L14 2.100 Q17.300 -0.100 19.500 2.700 Q21.100 5.600 18.400 8.300 L14.700 11.800 Q11.800 14 9.200 11.600"/><path d="M10.200 16.500 L7.900 18.600 Q4.700 20.700 2.400 17.900 Q0.700 15 3.500 12.100 L7.200 8.500 Q9.800 6.400 12 8.400"/></g></svg>
<span class="t" style="left:176.5px;top:822.75px;font-size:14.5px;color:#3a3a3a;font-weight:400;transform:scaleX(0.9330);">Ceramic cap 0805 (2.1x1.2x1...</span>
<div class="a" style="left:72.7px;top:847.7px;width:294.8px;height:24.3px;background:#f0f0f0;"></div>
<svg class="a" style="left:49px;top:850.5px;" width="14" height="19" viewBox="0 0 14 19"><path d="M1.800 3 Q1.800 1.300 3.400 2 L12 8.500 Q13 9.400 12 10.300 L3.400 16.800 Q1.800 17.500 1.800 15.800 Z" fill="#e2e2e7" stroke="#333" stroke-width="1.500" stroke-linejoin="round"/></svg>
<svg class="a" style="left:75.75px;top:853.3px;" width="21" height="13" viewBox="0 0 21 13"><path d="M0.400 6.800 C3 2.300 7 0.700 10.500 0.700 C14 0.700 18 2.300 20.600 6.800 C18 11.300 14 12.900 10.500 12.900 C7 12.900 3 11.300 0.400 6.800 Z" fill="#9c9c9c"/><circle cx="10.300" cy="6.800" r="3.900" fill="#f0f0f0"/><circle cx="10.300" cy="6.800" r="2.400" fill="#9c9c9c"/></svg>
<svg class="a" style="left:107.2px;top:850px;" width="21" height="21" viewBox="0 0 21 21"><path d="M1 6.400 Q1 5.400 1.800 4.800 L5.800 0.900 Q6.300 0.500 7 0.500 H18.600 Q19.600 0.500 19.600 1.500 V14.200 Q19.600 14.900 19.100 15.400 L15.600 19.100 Q15.100 19.600 14.400 19.600 H2 Q1 19.600 1 18.600 Z" fill="#dfe1e8" stroke="#484848" stroke-width="1.300" stroke-linejoin="round"/><path d="M2 5.300 L6.300 1.200 H18.800 L14.900 5.300 Z" fill="#fbfbfc"/><path d="M15.200 5.600 L18.900 1.800 V14.400 L15.200 18.600 Z" fill="#c9ccd6"/><path d="M1.500 5.500 H15 V19" fill="none" stroke="#f4f4f6" stroke-width="0.800"/></svg>
<svg class="a" style="left:138px;top:849.5px;" width="22" height="21" viewBox="0 0 22 21"><g fill="none" stroke="#3e3e3e" stroke-width="2.500" stroke-linecap="round" stroke-linejoin="round"><path d="M11.800 3.800 L14 2.100 Q17.300 -0.100 19.500 2.700 Q21.100 5.600 18.400 8.300 L14.700 11.800 Q11.800 14 9.200 11.600"/><path d="M10.200 16.500 L7.900 18.600 Q4.700 20.700 2.400 17.900 Q0.700 15 3.500 12.100 L7.200 8.500 Q9.800 6.400 12 8.400"/></g></svg>
<span class="t" style="left:176.5px;top:852.75px;font-size:14.5px;color:#3a3a3a;font-weight:400;transform:scaleX(0.9139);">Gate Driver 8-Lead SOIC v1:1</span>
<div class="a" style="left:72.7px;top:877.7px;width:294.8px;height:24.3px;background:#f0f0f0;"></div>
<svg class="a" style="left:49px;top:880.5px;" width="14" height="19" viewBox="0 0 14 19"><path d="M1.800 3 Q1.800 1.300 3.400 2 L12 8.500 Q13 9.400 12 10.300 L3.400 16.800 Q1.800 17.500 1.800 15.800 Z" fill="#e2e2e7" stroke="#333" stroke-width="1.500" stroke-linejoin="round"/></svg>
<svg class="a" style="left:75.75px;top:883.3px;" width="21" height="13" viewBox="0 0 21 13"><path d="M0.400 6.800 C3 2.300 7 0.700 10.500 0.700 C14 0.700 18 2.300 20.600 6.800 C18 11.300 14 12.900 10.500 12.900 C7 12.900 3 11.300 0.400 6.800 Z" fill="#9c9c9c"/><circle cx="10.300" cy="6.800" r="3.900" fill="#f0f0f0"/><circle cx="10.300" cy="6.800" r="2.400" fill="#9c9c9c"/></svg>
<svg class="a" style="left:107.2px;top:880px;" width="21" height="21" viewBox="0 0 21 21"><path d="M1 6.400 Q1 5.400 1.800 4.800 L5.800 0.900 Q6.300 0.500 7 0.500 H18.600 Q19.600 0.500 19.600 1.500 V14.200 Q19.600 14.900 19.100 15.400 L15.600 19.100 Q15.100 19.600 14.400 19.600 H2 Q1 19.600 1 18.600 Z" fill="#dfe1e8" stroke="#484848" stroke-width="1.300" stroke-linejoin="round"/><path d="M2 5.300 L6.300 1.200 H18.800 L14.900 5.300 Z" fill="#fbfbfc"/><path d="M15.200 5.600 L18.900 1.800 V14.400 L15.200 18.600 Z" fill="#c9ccd6"/><path d="M1.500 5.500 H15 V19" fill="none" stroke="#f4f4f6" stroke-width="0.800"/></svg>
<svg class="a" style="left:138px;top:879.5px;" width="22" height="21" viewBox="0 0 22 21"><g fill="none" stroke="#3e3e3e" stroke-width="2.500" stroke-linecap="round" stroke-linejoin="round"><path d="M11.800 3.800 L14 2.100 Q17.300 -0.100 19.500 2.700 Q21.100 5.600 18.400 8.300 L14.700 11.800 Q11.800 14 9.200 11.600"/><path d="M10.200 16.500 L7.900 18.600 Q4.700 20.700 2.400 17.900 Q0.700 15 3.500 12.100 L7.200 8.500 Q9.800 6.400 12 8.400"/></g></svg>
<span class="t" style="left:176.5px;top:882.75px;font-size:14.5px;color:#3a3a3a;font-weight:400;transform:scaleX(0.9191);">Gate Driver 8-Lead SOIC v1:2</span>
<div class="a" style="left:72.7px;top:907.7px;width:234.3px;height:24.3px;background:#f0f0f0;"></div>
<svg class="a" style="left:49px;top:910.5px;" width="14" height="19" viewBox="0 0 14 19"><path d="M1.800 3 Q1.800 1.300 3.400 2 L12 8.500 Q13 9.400 12 10.300 L3.400 16.800 Q1.800 17.500 1.800 15.800 Z" fill="#e2e2e7" stroke="#333" stroke-width="1.500" stroke-linejoin="round"/></svg>
<svg class="a" style="left:75.75px;top:913.3px;" width="21" height="13" viewBox="0 0 21 13"><path d="M0.400 6.800 C3 2.300 7 0.700 10.500 0.700 C14 0.700 18 2.300 20.600 6.800 C18 11.300 14 12.900 10.500 12.900 C7 12.900 3 11.300 0.400 6.800 Z" fill="#9c9c9c"/><circle cx="10.300" cy="6.800" r="3.900" fill="#f0f0f0"/><circle cx="10.300" cy="6.800" r="2.400" fill="#9c9c9c"/></svg>
<svg class="a" style="left:107.2px;top:910px;" width="21" height="21" viewBox="0 0 21 21"><path d="M1.200 5.300 L4.600 0.800 Q5 0.500 5.600 0.500 H10.900 Q11.700 0.500 11.700 1.300 V7.500 H18.300 Q19.200 7.500 19.200 8.400 V14.600 Q19.200 15.200 18.800 15.700 L16.500 18.700 Q16.100 19.200 15.400 19.200 H2.200 Q1.200 19.200 1.200 18.200 Z" fill="#e6e8ee" stroke="#484848" stroke-width="1.300" stroke-linejoin="round"/><path d="M2 5 L5.200 1.200 H11 L8.300 5 Z M9 10.200 L11.800 8 H18.400 L16.200 10.200 Z" fill="#fcfcfd"/><path d="M8.500 5.300 L11.200 1.600 V7.500 L8.500 10.400 Z M16.500 10.600 L18.700 8.300 V14.700 L16.500 18.400 Z" fill="#cfd2db"/><path d="M8.300 5.200 V19 M8.300 10.400 H16.250 V19 M1.500 12 H8.300" fill="none" stroke="#484848" stroke-width="1" opacity="0.550"/></svg>
<svg class="a" style="left:138px;top:909.5px;" width="22" height="21" viewBox="0 0 22 21"><g fill="none" stroke="#3e3e3e" stroke-width="2.500" stroke-linecap="round" stroke-linejoin="round"><path d="M11.800 3.800 L14 2.100 Q17.300 -0.100 19.500 2.700 Q21.100 5.600 18.400 8.300 L14.700 11.800 Q11.800 14 9.200 11.600"/><path d="M10.200 16.500 L7.900 18.600 Q4.700 20.700 2.400 17.900 Q0.700 15 3.500 12.100 L7.200 8.500 Q9.800 6.400 12 8.400"/></g></svg>
<span class="t" style="left:176.5px;top:912.75px;font-size:14.5px;color:#3a3a3a;font-weight:400;transform:scaleX(0.9249);">R0603 Resistor v1:1</span>
<div class="a" style="left:72.7px;top:937.7px;width:304.8px;height:24.3px;background:#f0f0f0;"></div>
<svg class="a" style="left:49px;top:940.5px;" width="14" height="19" viewBox="0 0 14 19"><path d="M1.800 3 Q1.800 1.300 3.400 2 L12 8.500 Q13 9.400 12 10.300 L3.400 16.800 Q1.800 17.500 1.800 15.800 Z" fill="#e2e2e7" stroke="#333" stroke-width="1.500" stroke-linejoin="round"/></svg>
<svg class="a" style="left:75.75px;top:943.3px;" width="21" height="13" viewBox="0 0 21 13"><path d="M0.400 6.800 C3 2.300 7 0.700 10.500 0.700 C14 0.700 18 2.300 20.600 6.800 C18 11.300 14 12.900 10.500 12.900 C7 12.900 3 11.300 0.400 6.800 Z" fill="#9c9c9c"/><circle cx="10.300" cy="6.800" r="3.900" fill="#f0f0f0"/><circle cx="10.300" cy="6.800" r="2.400" fill="#9c9c9c"/></svg>
<svg class="a" style="left:107.2px;top:940px;" width="21" height="21" viewBox="0 0 21 21"><path d="M1 6.400 Q1 5.400 1.800 4.800 L5.800 0.900 Q6.300 0.500 7 0.500 H18.600 Q19.600 0.500 19.600 1.500 V14.200 Q19.600 14.900 19.100 15.400 L15.600 19.100 Q15.100 19.600 14.400 19.600 H2 Q1 19.600 1 18.600 Z" fill="#dfe1e8" stroke="#484848" stroke-width="1.300" stroke-linejoin="round"/><path d="M2 5.300 L6.300 1.200 H18.800 L14.900 5.300 Z" fill="#fbfbfc"/><path d="M15.200 5.600 L18.900 1.800 V14.400 L15.200 18.600 Z" fill="#c9ccd6"/><path d="M1.500 5.500 H15 V19" fill="none" stroke="#f4f4f6" stroke-width="0.800"/></svg>
<svg class="a" style="left:138px;top:939.5px;" width="22" height="21" viewBox="0 0 22 21"><g fill="none" stroke="#3e3e3e" stroke-width="2.500" stroke-linecap="round" stroke-linejoin="round"><path d="M11.800 3.800 L14 2.100 Q17.300 -0.100 19.500 2.700 Q21.100 5.600 18.400 8.300 L14.700 11.800 Q11.800 14 9.200 11.600"/><path d="M10.200 16.500 L7.900 18.600 Q4.700 20.700 2.400 17.900 Q0.700 15 3.500 12.100 L7.200 8.500 Q9.800 6.400 12 8.400"/></g></svg>
<span class="t" style="left:176.5px;top:942.75px;font-size:14.5px;color:#3a3a3a;font-weight:400;transform:scaleX(0.9006);">Voltage Regulator Diode SOD:...</span>
<div class="a" style="left:5px;top:976px;width:373px;height:29px;background:#f0f0f0;border:1px solid #cdcdcd;"></div>
<span class="t" style="left:36px;top:983.75px;font-size:14.5px;color:#555555;font-weight:400;transform:scaleX(0.8395);">COMMENTS</span>
<svg class="a" style="left:352px;top:984px;" width="14" height="14" viewBox="0 0 14 14"><circle cx="7" cy="7" r="5.800" fill="#1e1e1e"/><rect x="3.500" y="6.200" width="7" height="1.600" fill="#f0f0f0"/><rect x="6.200" y="3.500" width="1.600" height="7" fill="#f0f0f0"/></svg>
<div class="a" style="left:374px;top:984px;width:1px;height:14px;background:#888;"></div>
<div class="a" style="left:376.5px;top:986px;width:1px;height:10px;background:#aaa;"></div>
<svg class="a" style="left:0;top:176px" width="1920" height="836" viewBox="0 176 1920 836"><path d="M712.500 191.500 H1094.500 L1133.400 231 V850 L1094.500 889 H1047.300 L1038.300 900.400 V919 H959.600 V915.800 L934.800 889 H713.700 L674.800 850 V231 Z" fill="#302f2a" stroke="#25241f" stroke-width="2" stroke-linejoin="miter"/><path d="M714.500 196.500 H1092.500 L1128.400 233 V848 L1092.500 884 H1045 L1035 896 V919 H963 V914 L937 884 H715.700 L679.800 848 V233 Z" fill="#35332e" stroke="#1b1b18" stroke-width="1.300"/><rect x="960.400" y="918.300" width="77.400" height="62" fill="#ebd184" stroke="#3a3626" stroke-width="1.400"/><circle cx="998.700" cy="956.700" r="14" fill="#fff" stroke="#5a5234" stroke-width="1.300"/><circle cx="979.5" cy="937.5" r="4.700" fill="#f4f4f4" stroke="#6a6040" stroke-width="1.100"/><circle cx="1017.4" cy="937.5" r="4.700" fill="#f4f4f4" stroke="#6a6040" stroke-width="1.100"/><circle cx="979.5" cy="974.6" r="4.700" fill="#f4f4f4" stroke="#6a6040" stroke-width="1.100"/><circle cx="1017.4" cy="974.6" r="4.700" fill="#f4f4f4" stroke="#6a6040" stroke-width="1.100"/><rect x="679.7" y="235" width="22.400" height="610.500" fill="#33322d" stroke="#151513" stroke-width="1.500"/><rect x="1097.6" y="235" width="22.400" height="610.500" fill="#33322d" stroke="#151513" stroke-width="1.500"/><path d="M695.5 243.5 L701.1 246.20000000000002 V253.4 L695.5 256.1 Z" fill="#dcc67e" stroke="#151513" stroke-width="1.200" stroke-linejoin="round"/><circle cx="690.5" cy="249.8" r="8.300" fill="#dcc67e" stroke="#151513" stroke-width="1.300"/><path d="M697.0 245.20000000000002 L700.3 246.8 V252.8 L697.0 254.4 Z" fill="#dcc67e"/><circle cx="690.5" cy="249.8" r="5.700" fill="#f7f7f7" stroke="#8d8356" stroke-width="1"/><path d="M695.5 267.73 L701.1 270.43 V277.63000000000005 L695.5 280.33000000000004 Z" fill="#dcc67e" stroke="#151513" stroke-width="1.200" stroke-linejoin="round"/><circle cx="690.5" cy="274.03000000000003" r="8.300" fill="#dcc67e" stroke="#151513" stroke-width="1.300"/><path d="M697.0 269.43 L700.3 271.03000000000003 V277.03000000000003 L697.0 278.63000000000005 Z" fill="#dcc67e"/><circle cx="690.5" cy="274.03000000000003" r="5.700" fill="#f7f7f7" stroke="#8d8356" stroke-width="1"/><path d="M695.5 291.96 L701.1 294.65999999999997 V301.86 L695.5 304.56 Z" fill="#dcc67e" stroke="#151513" stroke-width="1.200" stroke-linejoin="round"/><circle cx="690.5" cy="298.26" r="8.300" fill="#dcc67e" stroke="#151513" stroke-width="1.300"/><path d="M697.0 293.65999999999997 L700.3 295.26 V301.26 L697.0 302.86 Z" fill="#dcc67e"/><circle cx="690.5" cy="298.26" r="5.700" fill="#f7f7f7" stroke="#8d8356" stroke-width="1"/><path d="M695.5 316.19 L701.1 318.89 V326.09000000000003 L695.5 328.79 Z" fill="#dcc67e" stroke="#151513" stroke-width="1.200" stroke-linejoin="round"/><circle cx="690.5" cy="322.49" r="8.300" fill="#dcc67e" stroke="#151513" stroke-width="1.300"/><path d="M697.0 317.89 L700.3 319.49 V325.49 L697.0 327.09000000000003 Z" fill="#dcc67e"/><circle cx="690.5" cy="322.49" r="5.700" fill="#f7f7f7" stroke="#8d8356" stroke-width="1"/><path d="M695.5 340.42 L701.1 343.12 V350.32000000000005 L695.5 353.02000000000004 Z" fill="#dcc67e" stroke="#151513" stroke-width="1.200" stroke-linejoin="round"/><circle cx="690.5" cy="346.72" r="8.300" fill="#dcc67e" stroke="#151513" stroke-width="1.300"/><path d="M697.0 342.12 L700.3 343.72 V349.72 L697.0 351.32000000000005 Z" fill="#dcc67e"/><circle cx="690.5" cy="346.72" r="5.700" fill="#f7f7f7" stroke="#8d8356" stroke-width="1"/><path d="M695.5 364.65000000000003 L701.1 367.35 V374.55000000000007 L695.5 377.25000000000006 Z" fill="#dcc67e" stroke="#151513" stroke-width="1.200" stroke-linejoin="round"/><circle cx="690.5" cy="370.95000000000005" r="8.300" fill="#dcc67e" stroke="#151513" stroke-width="1.300"/><path d="M697.0 366.35 L700.3 367.95000000000005 V373.95000000000005 L697.0 375.55000000000007 Z" fill="#dcc67e"/><circle cx="690.5" cy="370.95000000000005" r="5.700" fill="#f7f7f7" stroke="#8d8356" stroke-width="1"/><path d="M695.5 388.88 L701.1 391.58 V398.78000000000003 L695.5 401.48 Z" fill="#dcc67e" stroke="#151513" stroke-width="1.200" stroke-linejoin="round"/><circle cx="690.5" cy="395.18" r="8.300" fill="#dcc67e" stroke="#151513" stroke-width="1.300"/><path d="M697.0 390.58 L700.3 392.18 V398.18 L697.0 399.78000000000003 Z" fill="#dcc67e"/><circle cx="690.5" cy="395.18" r="5.700" fill="#f7f7f7" stroke="#8d8356" stroke-width="1"/><path d="M695.5 413.11 L701.1 415.81 V423.01000000000005 L695.5 425.71000000000004 Z" fill="#dcc67e" stroke="#151513" stroke-width="1.200" stroke-linejoin="round"/><circle cx="690.5" cy="419.41" r="8.300" fill="#dcc67e" stroke="#151513" stroke-width="1.300"/><path d="M697.0 414.81 L700.3 416.41 V422.41 L697.0 424.01000000000005 Z" fill="#dcc67e"/><circle cx="690.5" cy="419.41" r="5.700" fill="#f7f7f7" stroke="#8d8356" stroke-width="1"/><path d="M695.5 437.34 L701.1 440.03999999999996 V447.24 L695.5 449.94 Z" fill="#dcc67e" stroke="#151513" stroke-width="1.200" stroke-linejoin="round"/><circle cx="690.5" cy="443.64" r="8.300" fill="#dcc67e" stroke="#151513" stroke-width="1.300"/><path d="M697.0 439.03999999999996 L700.3 440.64 V446.64 L697.0 448.24 Z" fill="#dcc67e"/><circle cx="690.5" cy="443.64" r="5.700" fill="#f7f7f7" stroke="#8d8356" stroke-width="1"/><path d="M695.5 461.57 L701.1 464.27 V471.47 L695.5 474.17 Z" fill="#dcc67e" stroke="#151513" stroke-width="1.200" stroke-linejoin="round"/><circle cx="690.5" cy="467.87" r="8.300" fill="#dcc67e" stroke="#151513" stroke-width="1.300"/><path d="M697.0 463.27 L700.3 464.87 V470.87 L697.0 472.47 Z" fill="#dcc67e"/><circle cx="690.5" cy="467.87" r="5.700" fill="#f7f7f7" stroke="#8d8356" stroke-width="1"/><path d="M695.5 485.8 L701.1 488.5 V495.70000000000005 L695.5 498.40000000000003 Z" fill="#dcc67e" stroke="#151513" stroke-width="1.200" stroke-linejoin="round"/><circle cx="690.5" cy="492.1" r="8.300" fill="#dcc67e" stroke="#151513" stroke-width="1.300"/><path d="M697.0 487.5 L700.3 489.1 V495.1 L697.0 496.70000000000005 Z" fill="#dcc67e"/><circle cx="690.5" cy="492.1" r="5.700" fill="#f7f7f7" stroke="#8d8356" stroke-width="1"/><path d="M695.5 510.03000000000003 L701.1 512.73 V519.9300000000001 L695.5 522.63 Z" fill="#dcc67e" stroke="#151513" stroke-width="1.200" stroke-linejoin="round"/><circle cx="690.5" cy="516.33" r="8.300" fill="#dcc67e" stroke="#151513" stroke-width="1.300"/><path d="M697.0 511.73 L700.3 513.33 V519.33 L697.0 520.9300000000001 Z" fill="#dcc67e"/><circle cx="690.5" cy="516.33" r="5.700" fill="#f7f7f7" stroke="#8d8356" stroke-width="1"/><path d="M695.5 534.26 L701.1 536.9599999999999 V544.16 L695.5 546.8599999999999 Z" fill="#dcc67e" stroke="#151513" stroke-width="1.200" stroke-linejoin="round"/><circle cx="690.5" cy="540.56" r="8.300" fill="#dcc67e" stroke="#151513" stroke-width="1.300"/><path d="M697.0 535.9599999999999 L700.3 537.56 V543.56 L697.0 545.16 Z" fill="#dcc67e"/><circle cx="690.5" cy="540.56" r="5.700" fill="#f7f7f7" stroke="#8d8356" stroke-width="1"/><path d="M695.5 558.49 L701.1 561.1899999999999 V568.39 L695.5 571.0899999999999 Z" fill="#dcc67e" stroke="#151513" stroke-width="1.200" stroke-linejoin="round"/><circle cx="690.5" cy="564.79" r="8.300" fill="#dcc67e" stroke="#151513" stroke-width="1.300"/><path d="M697.0 560.1899999999999 L700.3 561.79 V567.79 L697.0 569.39 Z" fill="#dcc67e"/><circle cx="690.5" cy="564.79" r="5.700" fill="#f7f7f7" stroke="#8d8356" stroke-width="1"/><path d="M695.5 582.72 L701.1 585.42 V592.62 L695.5 595.3199999999999 Z" fill="#dcc67e" stroke="#151513" stroke-width="1.200" stroke-linejoin="round"/><circle cx="690.5" cy="589.02" r="8.300" fill="#dcc67e" stroke="#151513" stroke-width="1.300"/><path d="M697.0 584.42 L700.3 586.02 V592.02 L697.0 593.62 Z" fill="#dcc67e"/><circle cx="690.5" cy="589.02" r="5.700" fill="#f7f7f7" stroke="#8d8356" stroke-width="1"/><path d="M695.5 606.95 L701.1 609.65 V616.85 L695.5 619.55 Z" fill="#dcc67e" stroke="#151513" stroke-width="1.200" stroke-linejoin="round"/><circle cx="690.5" cy="613.25" r="8.300" fill="#dcc67e" stroke="#151513" stroke-width="1.300"/><path d="M697.0 608.65 L700.3 610.25 V616.25 L697.0 617.85 Z" fill="#dcc67e"/><circle cx="690.5" cy="613.25" r="5.700" fill="#f7f7f7" stroke="#8d8356" stroke-width="1"/><path d="M695.5 631.1800000000001 L701.1 633.88 V641.08 L695.5 643.78 Z" fill="#dcc67e" stroke="#151513" stroke-width="1.200" stroke-linejoin="round"/><circle cx="690.5" cy="637.48" r="8.300" fill="#dcc67e" stroke="#151513" stroke-width="1.300"/><path d="M697.0 632.88 L700.3 634.48 V640.48 L697.0 642.08 Z" fill="#dcc67e"/><circle cx="690.5" cy="637.48" r="5.700" fill="#f7f7f7" stroke="#8d8356" stroke-width="1"/><path d="M695.5 655.4100000000001 L701.1 658.11 V665.3100000000001 L695.5 668.01 Z" fill="#dcc67e" stroke="#151513" stroke-width="1.200" stroke-linejoin="round"/><circle cx="690.5" cy="661.71" r="8.300" fill="#dcc67e" stroke="#151513" stroke-width="1.300"/><path d="M697.0 657.11 L700.3 658.71 V664.71 L697.0 666.3100000000001 Z" fill="#dcc67e"/><circle cx="690.5" cy="661.71" r="5.700" fill="#f7f7f7" stroke="#8d8356" stroke-width="1"/><path d="M695.5 679.6400000000001 L701.1 682.34 V689.5400000000001 L695.5 692.24 Z" fill="#dcc67e" stroke="#151513" stroke-width="1.200" stroke-linejoin="round"/><circle cx="690.5" cy="685.94" r="8.300" fill="#dcc67e" stroke="#151513" stroke-width="1.300"/><path d="M697.0 681.34 L700.3 682.94 V688.94 L697.0 690.5400000000001 Z" fill="#dcc67e"/><circle cx="690.5" cy="685.94" r="5.700" fill="#f7f7f7" stroke="#8d8356" stroke-width="1"/><path d="M695.5 703.8700000000001 L701.1 706.57 V713.7700000000001 L695.5 716.47 Z" fill="#dcc67e" stroke="#151513" stroke-width="1.200" stroke-linejoin="round"/><circle cx="690.5" cy="710.1700000000001" r="8.300" fill="#dcc67e" stroke="#151513" stroke-width="1.300"/><path d="M697.0 705.57 L700.3 707.1700000000001 V713.1700000000001 L697.0 714.7700000000001 Z" fill="#dcc67e"/><circle cx="690.5" cy="710.1700000000001" r="5.700" fill="#f7f7f7" stroke="#8d8356" stroke-width="1"/><path d="M695.5 728.1000000000001 L701.1 730.8000000000001 V738.0000000000001 L695.5 740.7 Z" fill="#dcc67e" stroke="#151513" stroke-width="1.200" stroke-linejoin="round"/><circle cx="690.5" cy="734.4000000000001" r="8.300" fill="#dcc67e" stroke="#151513" stroke-width="1.300"/><path d="M697.0 729.8000000000001 L700.3 731.4000000000001 V737.4000000000001 L697.0 739.0000000000001 Z" fill="#dcc67e"/><circle cx="690.5" cy="734.4000000000001" r="5.700" fill="#f7f7f7" stroke="#8d8356" stroke-width="1"/><path d="M695.5 752.33 L701.1 755.03 V762.23 L695.5 764.93 Z" fill="#dcc67e" stroke="#151513" stroke-width="1.200" stroke-linejoin="round"/><circle cx="690.5" cy="758.63" r="8.300" fill="#dcc67e" stroke="#151513" stroke-width="1.300"/><path d="M697.0 754.03 L700.3 755.63 V761.63 L697.0 763.23 Z" fill="#dcc67e"/><circle cx="690.5" cy="758.63" r="5.700" fill="#f7f7f7" stroke="#8d8356" stroke-width="1"/><path d="M695.5 776.5600000000002 L701.1 779.2600000000001 V786.4600000000002 L695.5 789.1600000000001 Z" fill="#dcc67e" stroke="#151513" stroke-width="1.200" stroke-linejoin="round"/><circle cx="690.5" cy="782.8600000000001" r="8.300" fill="#dcc67e" stroke="#151513" stroke-width="1.300"/><path d="M697.0 778.2600000000001 L700.3 779.8600000000001 V785.8600000000001 L697.0 787.4600000000002 Z" fill="#dcc67e"/><circle cx="690.5" cy="782.8600000000001" r="5.700" fill="#f7f7f7" stroke="#8d8356" stroke-width="1"/><path d="M695.5 800.79 L701.1 803.4899999999999 V810.6899999999999 L695.5 813.3899999999999 Z" fill="#dcc67e" stroke="#151513" stroke-width="1.200" stroke-linejoin="round"/><circle cx="690.5" cy="807.0899999999999" r="8.300" fill="#dcc67e" stroke="#151513" stroke-width="1.300"/><path d="M697.0 802.4899999999999 L700.3 804.0899999999999 V810.0899999999999 L697.0 811.6899999999999 Z" fill="#dcc67e"/><circle cx="690.5" cy="807.0899999999999" r="5.700" fill="#f7f7f7" stroke="#8d8356" stroke-width="1"/><rect x="682.2" y="823.02" width="16.600" height="16.600" fill="#ebd184" stroke="#151513" stroke-width="1.300"/><circle cx="690.5" cy="831.3199999999999" r="5.700" fill="#f7f7f7" stroke="#8d8356" stroke-width="1"/><path d="M1103.6 243.5 L1098.0 246.20000000000002 V253.4 L1103.6 256.1 Z" fill="#dcc67e" stroke="#151513" stroke-width="1.200" stroke-linejoin="round"/><circle cx="1108.6" cy="249.8" r="8.300" fill="#dcc67e" stroke="#151513" stroke-width="1.300"/><path d="M1102.1 245.20000000000002 L1098.8 246.8 V252.8 L1102.1 254.4 Z" fill="#dcc67e"/><circle cx="1108.6" cy="249.8" r="5.700" fill="#f7f7f7" stroke="#8d8356" stroke-width="1"/><path d="M1103.6 267.73 L1098.0 270.43 V277.63000000000005 L1103.6 280.33000000000004 Z" fill="#dcc67e" stroke="#151513" stroke-width="1.200" stroke-linejoin="round"/><circle cx="1108.6" cy="274.03000000000003" r="8.300" fill="#dcc67e" stroke="#151513" stroke-width="1.300"/><path d="M1102.1 269.43 L1098.8 271.03000000000003 V277.03000000000003 L1102.1 278.63000000000005 Z" fill="#dcc67e"/><circle cx="1108.6" cy="274.03000000000003" r="5.700" fill="#f7f7f7" stroke="#8d8356" stroke-width="1"/><path d="M1103.6 291.96 L1098.0 294.65999999999997 V301.86 L1103.6 304.56 Z" fill="#dcc67e" stroke="#151513" stroke-width="1.200" stroke-linejoin="round"/><circle cx="1108.6" cy="298.26" r="8.300" fill="#dcc67e" stroke="#151513" stroke-width="1.300"/><path d="M1102.1 293.65999999999997 L1098.8 295.26 V301.26 L1102.1 302.86 Z" fill="#dcc67e"/><circle cx="1108.6" cy="298.26" r="5.700" fill="#f7f7f7" stroke="#8d8356" stroke-width="1"/><path d="M1103.6 316.19 L1098.0 318.89 V326.09000000000003 L1103.6 328.79 Z" fill="#dcc67e" stroke="#151513" stroke-width="1.200" stroke-linejoin="round"/><circle cx="1108.6" cy="322.49" r="8.300" fill="#dcc67e" stroke="#151513" stroke-width="1.300"/><path d="M1102.1 317.89 L1098.8 319.49 V325.49 L1102.1 327.09000000000003 Z" fill="#dcc67e"/><circle cx="1108.6" cy="322.49" r="5.700" fill="#f7f7f7" stroke="#8d8356" stroke-width="1"/><path d="M1103.6 340.42 L1098.0 343.12 V350.32000000000005 L1103.6 353.02000000000004 Z" fill="#dcc67e" stroke="#151513" stroke-width="1.200" stroke-linejoin="round"/><circle cx="1108.6" cy="346.72" r="8.300" fill="#dcc67e" stroke="#151513" stroke-width="1.300"/><path d="M1102.1 342.12 L1098.8 343.72 V349.72 L1102.1 351.32000000000005 Z" fill="#dcc67e"/><circle cx="1108.6" cy="346.72" r="5.700" fill="#f7f7f7" stroke="#8d8356" stroke-width="1"/><path d="M1103.6 364.65000000000003 L1098.0 367.35 V374.55000000000007 L1103.6 377.25000000000006 Z" fill="#dcc67e" stroke="#151513" stroke-width="1.200" stroke-linejoin="round"/><circle cx="1108.6" cy="370.95000000000005" r="8.300" fill="#dcc67e" stroke="#151513" stroke-width="1.300"/><path d="M1102.1 366.35 L1098.8 367.95000000000005 V373.95000000000005 L1102.1 375.55000000000007 Z" fill="#dcc67e"/><circle cx="1108.6" cy="370.95000000000005" r="5.700" fill="#f7f7f7" stroke="#8d8356" stroke-width="1"/><path d="M1103.6 388.88 L1098.0 391.58 V398.78000000000003 L1103.6 401.48 Z" fill="#dcc67e" stroke="#151513" stroke-width="1.200" stroke-linejoin="round"/><circle cx="1108.6" cy="395.18" r="8.300" fill="#dcc67e" stroke="#151513" stroke-width="1.300"/><path d="M1102.1 390.58 L1098.8 392.18 V398.18 L1102.1 399.78000000000003 Z" fill="#dcc67e"/><circle cx="1108.6" cy="395.18" r="5.700" fill="#f7f7f7" stroke="#8d8356" stroke-width="1"/><path d="M1103.6 413.11 L1098.0 415.81 V423.01000000000005 L1103.6 425.71000000000004 Z" fill="#dcc67e" stroke="#151513" stroke-width="1.200" stroke-linejoin="round"/><circle cx="1108.6" cy="419.41" r="8.300" fill="#dcc67e" stroke="#151513" stroke-width="1.300"/><path d="M1102.1 414.81 L1098.8 416.41 V422.41 L1102.1 424.01000000000005 Z" fill="#dcc67e"/><circle cx="1108.6" cy="419.41" r="5.700" fill="#f7f7f7" stroke="#8d8356" stroke-width="1"/><path d="M1103.6 437.34 L1098.0 440.03999999999996 V447.24 L1103.6 449.94 Z" fill="#dcc67e" stroke="#151513" stroke-width="1.200" stroke-linejoin="round"/><circle cx="1108.6" cy="443.64" r="8.300" fill="#dcc67e" stroke="#151513" stroke-width="1.300"/><path d="M1102.1 439.03999999999996 L1098.8 440.64 V446.64 L1102.1 448.24 Z" fill="#dcc67e"/><circle cx="1108.6" cy="443.64" r="5.700" fill="#f7f7f7" stroke="#8d8356" stroke-width="1"/><path d="M1103.6 461.57 L1098.0 464.27 V471.47 L1103.6 474.17 Z" fill="#dcc67e" stroke="#151513" stroke-width="1.200" stroke-linejoin="round"/><circle cx="1108.6" cy="467.87" r="8.300" fill="#dcc67e" stroke="#151513" stroke-width="1.300"/><path d="M1102.1 463.27 L1098.8 464.87 V470.87 L1102.1 472.47 Z" fill="#dcc67e"/><circle cx="1108.6" cy="467.87" r="5.700" fill="#f7f7f7" stroke="#8d8356" stroke-width="1"/><path d="M1103.6 485.8 L1098.0 488.5 V495.70000000000005 L1103.6 498.40000000000003 Z" fill="#dcc67e" stroke="#151513" stroke-width="1.200" stroke-linejoin="round"/><circle cx="1108.6" cy="492.1" r="8.300" fill="#dcc67e" stroke="#151513" stroke-width="1.300"/><path d="M1102.1 487.5 L1098.8 489.1 V495.1 L1102.1 496.70000000000005 Z" fill="#dcc67e"/><circle cx="1108.6" cy="492.1" r="5.700" fill="#f7f7f7" stroke="#8d8356" stroke-width="1"/><path d="M1103.6 510.03000000000003 L1098.0 512.73 V519.9300000000001 L1103.6 522.63 Z" fill="#dcc67e" stroke="#151513" stroke-width="1.200" stroke-linejoin="round"/><circle cx="1108.6" cy="516.33" r="8.300" fill="#dcc67e" stroke="#151513" stroke-width="1.300"/><path d="M1102.1 511.73 L1098.8 513.33 V519.33 L1102.1 520.9300000000001 Z" fill="#dcc67e"/><circle cx="1108.6" cy="516.33" r="5.700" fill="#f7f7f7" stroke="#8d8356" stroke-width="1"/><path d="M1103.6 534.26 L1098.0 536.9599999999999 V544.16 L1103.6 546.8599999999999 Z" fill="#dcc67e" stroke="#151513" stroke-width="1.200" stroke-linejoin="round"/><circle cx="1108.6" cy="540.56" r="8.300" fill="#dcc67e" stroke="#151513" stroke-width="1.300"/><path d="M1102.1 535.9599999999999 L1098.8 537.56 V543.56 L1102.1 545.16 Z" fill="#dcc67e"/><circle cx="1108.6" cy="540.56" r="5.700" fill="#f7f7f7" stroke="#8d8356" stroke-width="1"/><path d="M1103.6 558.49 L1098.0 561.1899999999999 V568.39 L1103.6 571.0899999999999 Z" fill="#dcc67e" stroke="#151513" stroke-width="1.200" stroke-linejoin="round"/><circle cx="1108.6" cy="564.79" r="8.300" fill="#dcc67e" stroke="#151513" stroke-width="1.300"/><path d="M1102.1 560.1899999999999 L1098.8 561.79 V567.79 L1102.1 569.39 Z" fill="#dcc67e"/><circle cx="1108.6" cy="564.79" r="5.700" fill="#f7f7f7" stroke="#8d8356" stroke-width="1"/><path d="M1103.6 582.72 L1098.0 585.42 V592.62 L1103.6 595.3199999999999 Z" fill="#dcc67e" stroke="#151513" stroke-width="1.200" stroke-linejoin="round"/><circle cx="1108.6" cy="589.02" r="8.300" fill="#dcc67e" stroke="#151513" stroke-width="1.300"/><path d="M1102.1 584.42 L1098.8 586.02 V592.02 L1102.1 593.62 Z" fill="#dcc67e"/><circle cx="1108.6" cy="589.02" r="5.700" fill="#f7f7f7" stroke="#8d8356" stroke-width="1"/><path d="M1103.6 606.95 L1098.0 609.65 V616.85 L1103.6 619.55 Z" fill="#dcc67e" stroke="#151513" stroke-width="1.200" stroke-linejoin="round"/><circle cx="1108.6" cy="613.25" r="8.300" fill="#dcc67e" stroke="#151513" stroke-width="1.300"/><path d="M1102.1 608.65 L1098.8 610.25 V616.25 L1102.1 617.85 Z" fill="#dcc67e"/><circle cx="1108.6" cy="613.25" r="5.700" fill="#f7f7f7" stroke="#8d8356" stroke-width="1"/><path d="M1103.6 631.1800000000001 L1098.0 633.88 V641.08 L1103.6 643.78 Z" fill="#dcc67e" stroke="#151513" stroke-width="1.200" stroke-linejoin="round"/><circle cx="1108.6" cy="637.48" r="8.300" fill="#dcc67e" stroke="#151513" stroke-width="1.300"/><path d="M1102.1 632.88 L1098.8 634.48 V640.48 L1102.1 642.08 Z" fill="#dcc67e"/><circle cx="1108.6" cy="637.48" r="5.700" fill="#f7f7f7" stroke="#8d8356" stroke-width="1"/><path d="M1103.6 655.4100000000001 L1098.0 658.11 V665.3100000000001 L1103.6 668.01 Z" fill="#dcc67e" stroke="#151513" stroke-width="1.200" stroke-linejoin="round"/><circle cx="1108.6" cy="661.71" r="8.300" fill="#dcc67e" stroke="#151513" stroke-width="1.300"/><path d="M1102.1 657.11 L1098.8 658.71 V664.71 L1102.1 666.3100000000001 Z" fill="#dcc67e"/><circle cx="1108.6" cy="661.71" r="5.700" fill="#f7f7f7" stroke="#8d8356" stroke-width="1"/><path d="M1103.6 679.6400000000001 L1098.0 682.34 V689.5400000000001 L1103.6 692.24 Z" fill="#dcc67e" stroke="#151513" stroke-width="1.200" stroke-linejoin="round"/><circle cx="1108.6" cy="685.94" r="8.300" fill="#dcc67e" stroke="#151513" stroke-width="1.300"/><path d="M1102.1 681.34 L1098.8 682.94 V688.94 L1102.1 690.5400000000001 Z" fill="#dcc67e"/><circle cx="1108.6" cy="685.94" r="5.700" fill="#f7f7f7" stroke="#8d8356" stroke-width="1"/><path d="M1103.6 703.8700000000001 L1098.0 706.57 V713.7700000000001 L1103.6 716.47 Z" fill="#dcc67e" stroke="#151513" stroke-width="1.200" stroke-linejoin="round"/><circle cx="1108.6" cy="710.1700000000001" r="8.300" fill="#dcc67e" stroke="#151513" stroke-width="1.300"/><path d="M1102.1 705.57 L1098.8 707.1700000000001 V713.1700000000001 L1102.1 714.7700000000001 Z" fill="#dcc67e"/><circle cx="1108.6" cy="710.1700000000001" r="5.700" fill="#f7f7f7" stroke="#8d8356" stroke-width="1"/><path d="M1103.6 728.1000000000001 L1098.0 730.8000000000001 V738.0000000000001 L1103.6 740.7 Z" fill="#dcc67e" stroke="#151513" stroke-width="1.200" stroke-linejoin="round"/><circle cx="1108.6" cy="734.4000000000001" r="8.300" fill="#dcc67e" stroke="#151513" stroke-width="1.300"/><path d="M1102.1 729.8000000000001 L1098.8 731.4000000000001 V737.4000000000001 L1102.1 739.0000000000001 Z" fill="#dcc67e"/><circle cx="1108.6" cy="734.4000000000001" r="5.700" fill="#f7f7f7" stroke="#8d8356" stroke-width="1"/><path d="M1103.6 752.33 L1098.0 755.03 V762.23 L1103.6 764.93 Z" fill="#dcc67e" stroke="#151513" stroke-width="1.200" stroke-linejoin="round"/><circle cx="1108.6" cy="758.63" r="8.300" fill="#dcc67e" stroke="#151513" stroke-width="1.300"/><path d="M1102.1 754.03 L1098.8 755.63 V761.63 L1102.1 763.23 Z" fill="#dcc67e"/><circle cx="1108.6" cy="758.63" r="5.700" fill="#f7f7f7" stroke="#8d8356" stroke-width="1"/><path d="M1103.6 776.5600000000002 L1098.0 779.2600000000001 V786.4600000000002 L1103.6 789.1600000000001 Z" fill="#dcc67e" stroke="#151513" stroke-width="1.200" stroke-linejoin="round"/><circle cx="1108.6" cy="782.8600000000001" r="8.300" fill="#dcc67e" stroke="#151513" stroke-width="1.300"/><path d="M1102.1 778.2600000000001 L1098.8 779.8600000000001 V785.8600000000001 L1102.1 787.4600000000002 Z" fill="#dcc67e"/><circle cx="1108.6" cy="782.8600000000001" r="5.700" fill="#f7f7f7" stroke="#8d8356" stroke-width="1"/><path d="M1103.6 800.79 L1098.0 803.4899999999999 V810.6899999999999 L1103.6 813.3899999999999 Z" fill="#dcc67e" stroke="#151513" stroke-width="1.200" stroke-linejoin="round"/><circle cx="1108.6" cy="807.0899999999999" r="8.300" fill="#dcc67e" stroke="#151513" stroke-width="1.300"/><path d="M1102.1 802.4899999999999 L1098.8 804.0899999999999 V810.0899999999999 L1102.1 811.6899999999999 Z" fill="#dcc67e"/><circle cx="1108.6" cy="807.0899999999999" r="5.700" fill="#f7f7f7" stroke="#8d8356" stroke-width="1"/><rect x="1100.3" y="823.02" width="16.600" height="16.600" fill="#ebd184" stroke="#151513" stroke-width="1.300"/><circle cx="1108.6" cy="831.3199999999999" r="5.700" fill="#f7f7f7" stroke="#8d8356" stroke-width="1"/><path d="M773.2 230.6 H844.4000000000001 V245.6 h-2 V268.6 h2 V283.6 h-2 V310.6 h2 V325.6 H773.2 Z" fill="#ebd184" stroke="#121211" stroke-width="1.300"/><path d="M1021 230.6 H1092.2 V245.6 h-2 V268.6 h2 V283.6 h-2 V310.6 h2 V325.6 H1021 Z" fill="#ebd184" stroke="#121211" stroke-width="1.300"/><rect x="724.0999999999999" y="232.4" width="25.200" height="7" fill="#ebd184" stroke="#121211" stroke-width="1.100"/><path d="M722.3 244.4 H751.3 V324.4 H722.3 V317.10 H737.9 V312.10 H722.3 V304.88 H737.9 V299.88 H722.3 V292.66 H737.9 V287.66 H722.3 V280.44 H737.9 V275.44 H722.3 V268.22 H737.9 V263.22 H722.3 V256.00 H737.9 V251.00 H722.3 Z" fill="#ebd184" stroke="#121211" stroke-width="1.100"/><rect x="972.3" y="232.4" width="25.200" height="7" fill="#ebd184" stroke="#121211" stroke-width="1.100"/><path d="M970.5 244.4 H999.5 V324.4 H970.5 V317.10 H986.1 V312.10 H970.5 V304.88 H986.1 V299.88 H970.5 V292.66 H986.1 V287.66 H970.5 V280.44 H986.1 V275.44 H970.5 V268.22 H986.1 V263.22 H970.5 V256.00 H986.1 V251.00 H970.5 Z" fill="#ebd184" stroke="#121211" stroke-width="1.100"/><path d="M773.2 335.7 H844.4000000000001 V350.7 h-2 V373.7 h2 V388.7 h-2 V415.7 h2 V430.7 H773.2 Z" fill="#ebd184" stroke="#121211" stroke-width="1.300"/><path d="M1021 335.7 H1092.2 V350.7 h-2 V373.7 h2 V388.7 h-2 V415.7 h2 V430.7 H1021 Z" fill="#ebd184" stroke="#121211" stroke-width="1.300"/><rect x="724.0999999999999" y="337.5" width="25.200" height="7" fill="#ebd184" stroke="#121211" stroke-width="1.100"/><path d="M722.3 349.5 H751.3 V429.5 H722.3 V422.20 H737.9 V417.20 H722.3 V409.98 H737.9 V404.98 H722.3 V397.76 H737.9 V392.76 H722.3 V385.54 H737.9 V380.54 H722.3 V373.32 H737.9 V368.32 H722.3 V361.10 H737.9 V356.10 H722.3 Z" fill="#ebd184" stroke="#121211" stroke-width="1.100"/><rect x="972.3" y="337.5" width="25.200" height="7" fill="#ebd184" stroke="#121211" stroke-width="1.100"/><path d="M970.5 349.5 H999.5 V429.5 H970.5 V422.20 H986.1 V417.20 H970.5 V409.98 H986.1 V404.98 H970.5 V397.76 H986.1 V392.76 H970.5 V385.54 H986.1 V380.54 H970.5 V373.32 H986.1 V368.32 H970.5 V361.10 H986.1 V356.10 H970.5 Z" fill="#ebd184" stroke="#121211" stroke-width="1.100"/><path d="M773.2 440.79999999999995 H844.4000000000001 V455.79999999999995 h-2 V478.79999999999995 h2 V493.79999999999995 h-2 V520.8 h2 V535.8 H773.2 Z" fill="#ebd184" stroke="#121211" stroke-width="1.300"/><path d="M1021 440.79999999999995 H1092.2 V455.79999999999995 h-2 V478.79999999999995 h2 V493.79999999999995 h-2 V520.8 h2 V535.8 H1021 Z" fill="#ebd184" stroke="#121211" stroke-width="1.300"/><rect x="724.0999999999999" y="442.59999999999997" width="25.200" height="7" fill="#ebd184" stroke="#121211" stroke-width="1.100"/><path d="M722.3 454.59999999999997 H751.3 V534.5999999999999 H722.3 V527.30 H737.9 V522.30 H722.3 V515.08 H737.9 V510.08 H722.3 V502.86 H737.9 V497.86 H722.3 V490.64 H737.9 V485.64 H722.3 V478.42 H737.9 V473.42 H722.3 V466.20 H737.9 V461.20 H722.3 Z" fill="#ebd184" stroke="#121211" stroke-width="1.100"/><rect x="972.3" y="442.59999999999997" width="25.200" height="7" fill="#ebd184" stroke="#121211" stroke-width="1.100"/><path d="M970.5 454.59999999999997 H999.5 V534.5999999999999 H970.5 V527.30 H986.1 V522.30 H970.5 V515.08 H986.1 V510.08 H970.5 V502.86 H986.1 V497.86 H970.5 V490.64 H986.1 V485.64 H970.5 V478.42 H986.1 V473.42 H970.5 V466.20 H986.1 V461.20 H970.5 Z" fill="#ebd184" stroke="#121211" stroke-width="1.100"/><path d="M773.2 545.9 H844.4000000000001 V560.9 h-2 V583.9 h2 V598.9 h-2 V625.9 h2 V640.9 H773.2 Z" fill="#ebd184" stroke="#121211" stroke-width="1.300"/><path d="M1021 545.9 H1092.2 V560.9 h-2 V583.9 h2 V598.9 h-2 V625.9 h2 V640.9 H1021 Z" fill="#ebd184" stroke="#121211" stroke-width="1.300"/><rect x="724.0999999999999" y="547.6999999999999" width="25.200" height="7" fill="#ebd184" stroke="#121211" stroke-width="1.100"/><path d="M722.3 559.6999999999999 H751.3 V639.6999999999999 H722.3 V632.40 H737.9 V627.40 H722.3 V620.18 H737.9 V615.18 H722.3 V607.96 H737.9 V602.96 H722.3 V595.74 H737.9 V590.74 H722.3 V583.52 H737.9 V578.52 H722.3 V571.30 H737.9 V566.30 H722.3 Z" fill="#ebd184" stroke="#121211" stroke-width="1.100"/><rect x="972.3" y="547.6999999999999" width="25.200" height="7" fill="#ebd184" stroke="#121211" stroke-width="1.100"/><path d="M970.5 559.6999999999999 H999.5 V639.6999999999999 H970.5 V632.40 H986.1 V627.40 H970.5 V620.18 H986.1 V615.18 H970.5 V607.96 H986.1 V602.96 H970.5 V595.74 H986.1 V590.74 H970.5 V583.52 H986.1 V578.52 H970.5 V571.30 H986.1 V566.30 H970.5 Z" fill="#ebd184" stroke="#121211" stroke-width="1.100"/><path d="M773.2 651.0 H844.4000000000001 V666.0 h-2 V689.0 h2 V704.0 h-2 V731.0 h2 V746.0 H773.2 Z" fill="#ebd184" stroke="#121211" stroke-width="1.300"/><path d="M1021 651.0 H1092.2 V666.0 h-2 V689.0 h2 V704.0 h-2 V731.0 h2 V746.0 H1021 Z" fill="#ebd184" stroke="#121211" stroke-width="1.300"/><rect x="724.0999999999999" y="652.8" width="25.200" height="7" fill="#ebd184" stroke="#121211" stroke-width="1.100"/><path d="M722.3 664.8 H751.3 V744.8 H722.3 V737.50 H737.9 V732.50 H722.3 V725.28 H737.9 V720.28 H722.3 V713.06 H737.9 V708.06 H722.3 V700.84 H737.9 V695.84 H722.3 V688.62 H737.9 V683.62 H722.3 V676.40 H737.9 V671.40 H722.3 Z" fill="#ebd184" stroke="#121211" stroke-width="1.100"/><rect x="972.3" y="652.8" width="25.200" height="7" fill="#ebd184" stroke="#121211" stroke-width="1.100"/><path d="M970.5 664.8 H999.5 V744.8 H970.5 V737.50 H986.1 V732.50 H970.5 V725.28 H986.1 V720.28 H970.5 V713.06 H986.1 V708.06 H970.5 V700.84 H986.1 V695.84 H970.5 V688.62 H986.1 V683.62 H970.5 V676.40 H986.1 V671.40 H970.5 Z" fill="#ebd184" stroke="#121211" stroke-width="1.100"/><path d="M773.2 756.1 H844.4000000000001 V771.1 h-2 V794.1 h2 V809.1 h-2 V836.1 h2 V851.1 H773.2 Z" fill="#ebd184" stroke="#121211" stroke-width="1.300"/><path d="M1021 756.1 H1092.2 V771.1 h-2 V794.1 h2 V809.1 h-2 V836.1 h2 V851.1 H1021 Z" fill="#ebd184" stroke="#121211" stroke-width="1.300"/><rect x="724.0999999999999" y="757.9" width="25.200" height="7" fill="#ebd184" stroke="#121211" stroke-width="1.100"/><path d="M722.3 769.9 H751.3 V849.9 H722.3 V842.60 H737.9 V837.60 H722.3 V830.38 H737.9 V825.38 H722.3 V818.16 H737.9 V813.16 H722.3 V805.94 H737.9 V800.94 H722.3 V793.72 H737.9 V788.72 H722.3 V781.50 H737.9 V776.50 H722.3 Z" fill="#ebd184" stroke="#121211" stroke-width="1.100"/><rect x="972.3" y="757.9" width="25.200" height="7" fill="#ebd184" stroke="#121211" stroke-width="1.100"/><path d="M970.5 769.9 H999.5 V849.9 H970.5 V842.60 H986.1 V837.60 H970.5 V830.38 H986.1 V825.38 H970.5 V818.16 H986.1 V813.16 H970.5 V805.94 H986.1 V800.94 H970.5 V793.72 H986.1 V788.72 H970.5 V781.50 H986.1 V776.50 H970.5 Z" fill="#ebd184" stroke="#121211" stroke-width="1.100"/><rect x="946.8" y="206.8" width="26.30" height="11.50" rx="1.800" fill="#121210"/><rect x="947.70" y="207.90" width="2.500" height="9.30" rx="0.800" fill="#cdb565"/><rect x="969.70" y="207.90" width="2.500" height="9.30" rx="0.800" fill="#cdb565"/><rect x="950.90" y="207.90" width="2.100" height="9.30" fill="#8e8e98"/><rect x="966.90" y="207.90" width="2.100" height="9.30" fill="#8e8e98"/><rect x="953.50" y="207.90" width="12.90" height="9.30" fill="#a8895a"/><rect x="981.6" y="206.8" width="26.60" height="11.50" rx="1.800" fill="#121210"/><rect x="982.50" y="207.90" width="2.500" height="9.30" rx="0.800" fill="#cdb565"/><rect x="1004.80" y="207.90" width="2.500" height="9.30" rx="0.800" fill="#cdb565"/><rect x="985.70" y="207.90" width="2.100" height="9.30" fill="#a39f90"/><rect x="1002.00" y="207.90" width="2.100" height="9.30" fill="#a39f90"/><rect x="988.30" y="207.90" width="13.20" height="9.30" fill="#3b3c3a"/><rect x="1016.6" y="206.8" width="26.30" height="11.50" rx="1.800" fill="#121210"/><rect x="1017.50" y="207.90" width="2.500" height="9.30" rx="0.800" fill="#cdb565"/><rect x="1039.50" y="207.90" width="2.500" height="9.30" rx="0.800" fill="#cdb565"/><rect x="1020.70" y="207.90" width="2.100" height="9.30" fill="#a39f90"/><rect x="1036.70" y="207.90" width="2.100" height="9.30" fill="#a39f90"/><rect x="1023.30" y="207.90" width="12.90" height="9.30" fill="#3b3c3a"/><rect x="718" y="860.8" width="25.80" height="12.00" rx="1.800" fill="#121210"/><rect x="718.90" y="861.90" width="2.500" height="9.80" rx="0.800" fill="#cdb565"/><rect x="740.40" y="861.90" width="2.500" height="9.80" rx="0.800" fill="#cdb565"/><rect x="722.10" y="861.90" width="2.100" height="9.80" fill="#a39f90"/><rect x="737.60" y="861.90" width="2.100" height="9.80" fill="#a39f90"/><rect x="724.70" y="861.90" width="12.40" height="9.80" fill="#3b3c3a"/><rect x="752.5" y="860.8" width="26.40" height="12.00" rx="1.800" fill="#121210"/><rect x="753.40" y="861.90" width="2.500" height="9.80" rx="0.800" fill="#cdb565"/><rect x="775.50" y="861.90" width="2.500" height="9.80" rx="0.800" fill="#cdb565"/><rect x="756.60" y="861.90" width="2.100" height="9.80" fill="#a39f90"/><rect x="772.70" y="861.90" width="2.100" height="9.80" fill="#a39f90"/><rect x="759.20" y="861.90" width="13.00" height="9.80" fill="#3b3c3a"/><rect x="787.3" y="860.8" width="26.60" height="12.00" rx="1.800" fill="#121210"/><rect x="788.20" y="861.90" width="2.500" height="9.80" rx="0.800" fill="#cdb565"/><rect x="810.50" y="861.90" width="2.500" height="9.80" rx="0.800" fill="#cdb565"/><rect x="791.40" y="861.90" width="2.100" height="9.80" fill="#8e8e98"/><rect x="807.70" y="861.90" width="2.100" height="9.80" fill="#8e8e98"/><rect x="794.00" y="861.90" width="13.20" height="9.80" fill="#a8895a"/><rect x="708.5" y="218.3" width="7.80" height="21.00" rx="1.600" fill="#121210"/><rect x="709.50" y="219.20" width="5.80" height="2" rx="0.700" fill="#9c8848"/><rect x="709.50" y="236.40" width="5.80" height="2" rx="0.700" fill="#9c8848"/><rect x="709.50" y="221.80" width="5.80" height="1.5" fill="#a39f90"/><rect x="709.50" y="234.30" width="5.80" height="1.5" fill="#a39f90"/><rect x="709.50" y="223.80" width="5.80" height="10.00" fill="#3b3c3a"/><rect x="708.5" y="323.1" width="7.80" height="21.00" rx="1.600" fill="#121210"/><rect x="709.50" y="324.00" width="5.80" height="2" rx="0.700" fill="#9c8848"/><rect x="709.50" y="341.20" width="5.80" height="2" rx="0.700" fill="#9c8848"/><rect x="709.50" y="326.60" width="5.80" height="1.5" fill="#a39f90"/><rect x="709.50" y="339.10" width="5.80" height="1.5" fill="#a39f90"/><rect x="709.50" y="328.60" width="5.80" height="10.00" fill="#3b3c3a"/><rect x="708.5" y="428" width="7.80" height="21.00" rx="1.600" fill="#121210"/><rect x="709.50" y="428.90" width="5.80" height="2" rx="0.700" fill="#9c8848"/><rect x="709.50" y="446.10" width="5.80" height="2" rx="0.700" fill="#9c8848"/><rect x="709.50" y="431.50" width="5.80" height="1.5" fill="#a39f90"/><rect x="709.50" y="444.00" width="5.80" height="1.5" fill="#a39f90"/><rect x="709.50" y="433.50" width="5.80" height="10.00" fill="#3b3c3a"/><rect x="708.5" y="533.3" width="7.80" height="21.00" rx="1.600" fill="#121210"/><rect x="709.50" y="534.20" width="5.80" height="2" rx="0.700" fill="#9c8848"/><rect x="709.50" y="551.40" width="5.80" height="2" rx="0.700" fill="#9c8848"/><rect x="709.50" y="536.80" width="5.80" height="1.5" fill="#a39f90"/><rect x="709.50" y="549.30" width="5.80" height="1.5" fill="#a39f90"/><rect x="709.50" y="538.80" width="5.80" height="10.00" fill="#3b3c3a"/><rect x="708.5" y="638" width="7.80" height="21.00" rx="1.600" fill="#121210"/><rect x="709.50" y="638.90" width="5.80" height="2" rx="0.700" fill="#9c8848"/><rect x="709.50" y="656.10" width="5.80" height="2" rx="0.700" fill="#9c8848"/><rect x="709.50" y="641.50" width="5.80" height="1.5" fill="#a39f90"/><rect x="709.50" y="654.00" width="5.80" height="1.5" fill="#a39f90"/><rect x="709.50" y="643.50" width="5.80" height="10.00" fill="#3b3c3a"/><rect x="708.5" y="743" width="7.80" height="21.00" rx="1.600" fill="#121210"/><rect x="709.50" y="743.90" width="5.80" height="2" rx="0.700" fill="#9c8848"/><rect x="709.50" y="761.10" width="5.80" height="2" rx="0.700" fill="#9c8848"/><rect x="709.50" y="746.50" width="5.80" height="1.5" fill="#a39f90"/><rect x="709.50" y="759.00" width="5.80" height="1.5" fill="#a39f90"/><rect x="709.50" y="748.50" width="5.80" height="10.00" fill="#3b3c3a"/><rect x="956.9" y="228" width="8.00" height="20.50" rx="1.600" fill="#121210"/><rect x="957.90" y="228.90" width="6.00" height="2" rx="0.700" fill="#9c8848"/><rect x="957.90" y="245.60" width="6.00" height="2" rx="0.700" fill="#9c8848"/><rect x="957.90" y="231.50" width="6.00" height="1.5" fill="#a39f90"/><rect x="957.90" y="243.50" width="6.00" height="1.5" fill="#a39f90"/><rect x="957.90" y="233.50" width="6.00" height="9.50" fill="#3b3c3a"/><rect x="956.9" y="333.4" width="8.00" height="20.50" rx="1.600" fill="#121210"/><rect x="957.90" y="334.30" width="6.00" height="2" rx="0.700" fill="#e3c870"/><rect x="957.90" y="351.00" width="6.00" height="2" rx="0.700" fill="#e3c870"/><rect x="957.90" y="336.90" width="6.00" height="1.5" fill="#a39f90"/><rect x="957.90" y="348.90" width="6.00" height="1.5" fill="#a39f90"/><rect x="957.90" y="338.90" width="6.00" height="9.50" fill="#3b3c3a"/><rect x="956.9" y="438.2" width="8.00" height="20.50" rx="1.600" fill="#121210"/><rect x="957.90" y="439.10" width="6.00" height="2" rx="0.700" fill="#e3c870"/><rect x="957.90" y="455.80" width="6.00" height="2" rx="0.700" fill="#e3c870"/><rect x="957.90" y="441.70" width="6.00" height="1.5" fill="#a39f90"/><rect x="957.90" y="453.70" width="6.00" height="1.5" fill="#a39f90"/><rect x="957.90" y="443.70" width="6.00" height="9.50" fill="#3b3c3a"/><rect x="956.9" y="543.3" width="8.00" height="20.50" rx="1.600" fill="#121210"/><rect x="957.90" y="544.20" width="6.00" height="2" rx="0.700" fill="#e3c870"/><rect x="957.90" y="560.90" width="6.00" height="2" rx="0.700" fill="#e3c870"/><rect x="957.90" y="546.80" width="6.00" height="1.5" fill="#a39f90"/><rect x="957.90" y="558.80" width="6.00" height="1.5" fill="#a39f90"/><rect x="957.90" y="548.80" width="6.00" height="9.50" fill="#3b3c3a"/><rect x="956.9" y="657.3" width="8.00" height="20.50" rx="1.600" fill="#121210"/><rect x="957.90" y="658.20" width="6.00" height="2" rx="0.700" fill="#9c8848"/><rect x="957.90" y="674.90" width="6.00" height="2" rx="0.700" fill="#9c8848"/><rect x="957.90" y="660.80" width="6.00" height="1.5" fill="#a39f90"/><rect x="957.90" y="672.80" width="6.00" height="1.5" fill="#a39f90"/><rect x="957.90" y="662.80" width="6.00" height="9.50" fill="#3b3c3a"/><rect x="956.9" y="753" width="8.00" height="20.50" rx="1.600" fill="#121210"/><rect x="957.90" y="753.90" width="6.00" height="2" rx="0.700" fill="#9c8848"/><rect x="957.90" y="770.60" width="6.00" height="2" rx="0.700" fill="#9c8848"/><rect x="957.90" y="756.50" width="6.00" height="1.5" fill="#a39f90"/><rect x="957.90" y="768.50" width="6.00" height="1.5" fill="#a39f90"/><rect x="957.90" y="758.50" width="6.00" height="9.50" fill="#3b3c3a"/><rect x="955.5" y="482.7" width="11.30" height="25.20" rx="1.600" fill="#121210"/><rect x="956.50" y="483.60" width="9.30" height="2.5" rx="0.700" fill="#cdb565"/><rect x="956.50" y="504.50" width="9.30" height="2.5" rx="0.700" fill="#cdb565"/><rect x="956.50" y="486.70" width="9.30" height="2.1" fill="#a39f90"/><rect x="956.50" y="501.80" width="9.30" height="2.1" fill="#a39f90"/><rect x="956.50" y="489.30" width="9.30" height="12.00" fill="#3b3c3a"/><rect x="955.5" y="623.5" width="11.30" height="26.10" rx="1.600" fill="#121210"/><rect x="956.50" y="624.40" width="9.30" height="2.5" rx="0.700" fill="#cdb565"/><rect x="956.50" y="646.20" width="9.30" height="2.5" rx="0.700" fill="#cdb565"/><rect x="956.50" y="627.50" width="9.30" height="2.1" fill="#a39f90"/><rect x="956.50" y="643.50" width="9.30" height="2.1" fill="#a39f90"/><rect x="956.50" y="630.10" width="9.30" height="12.90" fill="#3b3c3a"/><rect x="876" y="384.5" width="12.00" height="26.80" rx="1.600" fill="#121210"/><rect x="877.00" y="385.40" width="10.00" height="2.5" rx="0.700" fill="#cdb565"/><rect x="877.00" y="407.90" width="10.00" height="2.5" rx="0.700" fill="#cdb565"/><rect x="877.00" y="388.50" width="10.00" height="2.1" fill="#a39f90"/><rect x="877.00" y="405.20" width="10.00" height="2.1" fill="#a39f90"/><rect x="877.00" y="391.10" width="10.00" height="13.60" fill="#3b3c3a"/><rect x="855.6" y="632.2" width="8.10" height="20.00" rx="1.600" fill="#121210"/><rect x="856.60" y="633.10" width="6.10" height="2" rx="0.700" fill="#9c8848"/><rect x="856.60" y="649.30" width="6.10" height="2" rx="0.700" fill="#9c8848"/><rect x="856.60" y="635.70" width="6.10" height="1.5" fill="#a39f90"/><rect x="856.60" y="647.20" width="6.10" height="1.5" fill="#a39f90"/><rect x="856.60" y="637.70" width="6.10" height="9.00" fill="#3b3c3a"/><rect x="867" y="632.2" width="8.20" height="20.00" rx="1.600" fill="#121210"/><rect x="868.00" y="633.10" width="6.20" height="2" rx="0.700" fill="#9c8848"/><rect x="868.00" y="649.30" width="6.20" height="2" rx="0.700" fill="#9c8848"/><rect x="868.00" y="635.70" width="6.20" height="1.5" fill="#a39f90"/><rect x="868.00" y="647.20" width="6.20" height="1.5" fill="#a39f90"/><rect x="868.00" y="637.70" width="6.20" height="9.00" fill="#3b3c3a"/><rect x="917.4" y="483.7" width="26.00" height="12.30" rx="1.800" fill="#121210"/><rect x="918.30" y="484.80" width="2.500" height="10.10" rx="0.800" fill="#cdb565"/><rect x="940.00" y="484.80" width="2.500" height="10.10" rx="0.800" fill="#cdb565"/><rect x="921.50" y="484.80" width="2.100" height="10.10" fill="#8e8e98"/><rect x="937.20" y="484.80" width="2.100" height="10.10" fill="#8e8e98"/><rect x="924.10" y="484.80" width="12.60" height="10.10" fill="#a8895a"/><rect x="917.4" y="499.3" width="26.00" height="12.10" rx="1.800" fill="#121210"/><rect x="918.30" y="500.40" width="2.500" height="9.90" rx="0.800" fill="#cdb565"/><rect x="940.00" y="500.40" width="2.500" height="9.90" rx="0.800" fill="#cdb565"/><rect x="921.50" y="500.40" width="2.100" height="9.90" fill="#8e8e98"/><rect x="937.20" y="500.40" width="2.100" height="9.90" fill="#8e8e98"/><rect x="924.10" y="500.40" width="12.60" height="9.90" fill="#a8895a"/><rect x="881.9" y="574.6" width="26.20" height="12.10" rx="1.800" fill="#121210"/><rect x="882.80" y="575.70" width="2.500" height="9.90" rx="0.800" fill="#cdb565"/><rect x="904.70" y="575.70" width="2.500" height="9.90" rx="0.800" fill="#cdb565"/><rect x="886.00" y="575.70" width="2.100" height="9.90" fill="#8e8e98"/><rect x="901.90" y="575.70" width="2.100" height="9.90" fill="#8e8e98"/><rect x="888.60" y="575.70" width="12.80" height="9.90" fill="#a8895a"/><rect x="917.4" y="625.8" width="26.00" height="11.80" rx="1.800" fill="#121210"/><rect x="918.30" y="626.90" width="2.500" height="9.60" rx="0.800" fill="#cdb565"/><rect x="940.00" y="626.90" width="2.500" height="9.60" rx="0.800" fill="#cdb565"/><rect x="921.50" y="626.90" width="2.100" height="9.60" fill="#8e8e98"/><rect x="937.20" y="626.90" width="2.100" height="9.60" fill="#8e8e98"/><rect x="924.10" y="626.90" width="12.60" height="9.60" fill="#a8895a"/><rect x="917.4" y="641.2" width="26.00" height="11.80" rx="1.800" fill="#121210"/><rect x="918.30" y="642.30" width="2.500" height="9.60" rx="0.800" fill="#cdb565"/><rect x="940.00" y="642.30" width="2.500" height="9.60" rx="0.800" fill="#cdb565"/><rect x="921.50" y="642.30" width="2.100" height="9.60" fill="#8e8e98"/><rect x="937.20" y="642.30" width="2.100" height="9.60" fill="#8e8e98"/><rect x="924.10" y="642.30" width="12.60" height="9.60" fill="#a8895a"/><rect x="881.9" y="713.8" width="26.40" height="12.00" rx="1.800" fill="#121210"/><rect x="882.80" y="714.90" width="2.500" height="9.80" rx="0.800" fill="#cdb565"/><rect x="904.90" y="714.90" width="2.500" height="9.80" rx="0.800" fill="#cdb565"/><rect x="886.00" y="714.90" width="2.100" height="9.80" fill="#8e8e98"/><rect x="902.10" y="714.90" width="2.100" height="9.80" fill="#8e8e98"/><rect x="888.60" y="714.90" width="13.00" height="9.80" fill="#a8895a"/><rect x="710.5" y="348.7" width="3.8" height="35.00" fill="#e3c870" stroke="#1f1e1b" stroke-width="0.800"/><rect x="705.1999999999999" y="357" width="14.4" height="17.00" rx="1" fill="#1d1d1b" stroke="#141413" stroke-width="1"/><rect x="959.0" y="358.2" width="3.8" height="34.50" fill="#e3c870" stroke="#1f1e1b" stroke-width="0.800"/><rect x="953.6999999999999" y="367" width="14.4" height="18.00" rx="1" fill="#1d1d1b" stroke="#141413" stroke-width="1"/><rect x="710.5" y="768.8" width="3.8" height="35.00" fill="#e3c870" stroke="#1f1e1b" stroke-width="0.800"/><rect x="705.1999999999999" y="777.2" width="14.4" height="17.00" rx="1" fill="#1d1d1b" stroke="#141413" stroke-width="1"/><rect x="959.0" y="777.8" width="3.8" height="34.50" fill="#e3c870" stroke="#1f1e1b" stroke-width="0.800"/><rect x="953.6999999999999" y="786.6" width="14.4" height="18.00" rx="1" fill="#1d1d1b" stroke="#141413" stroke-width="1"/><rect x="896.2" y="459.3" width="47.20" height="10.30" rx="1" fill="#e3c870" stroke="#1f1e1b" stroke-width="0.900"/><rect x="900.80" y="459.8" width="38.00" height="9.30" fill="#dcdad2"/><rect x="905.6" y="455.6" width="28.10" height="18.20" rx="1" fill="#151514"/><rect x="907.6" y="457.6" width="24.10" height="14.20" fill="#2b2a27"/><rect x="929.2" y="457.6" width="0.800" height="14.20" fill="#6b665a"/><rect x="899.5" y="601.2" width="46.30" height="10.30" rx="1" fill="#e3c870" stroke="#1f1e1b" stroke-width="0.900"/><rect x="904.10" y="601.7" width="37.10" height="9.30" fill="#dcdad2"/><rect x="908.7" y="597.7" width="28.10" height="17.40" rx="1" fill="#151514"/><rect x="910.7" y="599.7" width="24.10" height="13.40" fill="#2b2a27"/><rect x="932.3" y="599.7" width="0.800" height="13.40" fill="#6b665a"/><rect x="935.2" y="520.8" width="10.40" height="47.40" rx="1" fill="#e3c870" stroke="#1f1e1b" stroke-width="0.900"/><rect x="935.7" y="525.60" width="9.40" height="37.80" fill="#dcdad2"/><rect x="931.2" y="531.2" width="18.40" height="27.40" rx="1" fill="#151514"/><rect x="933.2" y="533.2" width="14.40" height="23.40" fill="#2b2a27"/><rect x="933.2" y="534.8000000000001" width="14.40" height="0.800" fill="#55524a"/><rect x="935.2" y="659.3" width="10.40" height="46.60" rx="1" fill="#e3c870" stroke="#1f1e1b" stroke-width="0.900"/><rect x="935.7" y="664.10" width="9.40" height="37.00" fill="#dcdad2"/><rect x="931.2" y="669.3" width="18.40" height="27.70" rx="1" fill="#151514"/><rect x="933.2" y="671.3" width="14.40" height="23.70" fill="#2b2a27"/><rect x="933.2" y="672.9" width="14.40" height="0.800" fill="#55524a"/><rect x="863" y="524.40" width="15" height="4" rx="1" fill="#c9c9cf" stroke="#1f1e1b" stroke-width="0.800"/><rect x="863.500" y="524.80" width="4.800" height="3.200" fill="#e3c870"/><rect x="871" y="524.80" width="1.400" height="3.200" fill="#55555c"/><rect x="915" y="524.40" width="15.800" height="4" rx="1" fill="#c9c9cf" stroke="#1f1e1b" stroke-width="0.800"/><rect x="925.500" y="524.80" width="4.800" height="3.200" fill="#e3c870"/><rect x="920.500" y="524.80" width="1.400" height="3.200" fill="#55555c"/><rect x="863" y="536.60" width="15" height="4" rx="1" fill="#c9c9cf" stroke="#1f1e1b" stroke-width="0.800"/><rect x="863.500" y="537.00" width="4.800" height="3.200" fill="#e3c870"/><rect x="871" y="537.00" width="1.400" height="3.200" fill="#55555c"/><rect x="915" y="536.60" width="15.800" height="4" rx="1" fill="#c9c9cf" stroke="#1f1e1b" stroke-width="0.800"/><rect x="925.500" y="537.00" width="4.800" height="3.200" fill="#e3c870"/><rect x="920.500" y="537.00" width="1.400" height="3.200" fill="#55555c"/><rect x="863" y="548.80" width="15" height="4" rx="1" fill="#c9c9cf" stroke="#1f1e1b" stroke-width="0.800"/><rect x="863.500" y="549.20" width="4.800" height="3.200" fill="#e3c870"/><rect x="871" y="549.20" width="1.400" height="3.200" fill="#55555c"/><rect x="915" y="548.80" width="15.800" height="4" rx="1" fill="#c9c9cf" stroke="#1f1e1b" stroke-width="0.800"/><rect x="925.500" y="549.20" width="4.800" height="3.200" fill="#e3c870"/><rect x="920.500" y="549.20" width="1.400" height="3.200" fill="#55555c"/><rect x="863" y="561.00" width="15" height="4" rx="1" fill="#c9c9cf" stroke="#1f1e1b" stroke-width="0.800"/><rect x="863.500" y="561.40" width="4.800" height="3.200" fill="#e3c870"/><rect x="871" y="561.40" width="1.400" height="3.200" fill="#55555c"/><rect x="915" y="561.00" width="15.800" height="4" rx="1" fill="#c9c9cf" stroke="#1f1e1b" stroke-width="0.800"/><rect x="925.500" y="561.40" width="4.800" height="3.200" fill="#e3c870"/><rect x="920.500" y="561.40" width="1.400" height="3.200" fill="#55555c"/><rect x="877.900" y="520.8" width="37.300" height="47.400" rx="1" fill="#141413"/><rect x="880.300" y="522.8" width="33" height="43.400" fill="#1c1b19"/><circle cx="886.300" cy="526.60" r="1.900" fill="none" stroke="#0c0c0c" stroke-width="0.800"/><rect x="863" y="663.00" width="15" height="4" rx="1" fill="#c9c9cf" stroke="#1f1e1b" stroke-width="0.800"/><rect x="863.500" y="663.40" width="4.800" height="3.200" fill="#e3c870"/><rect x="871" y="663.40" width="1.400" height="3.200" fill="#55555c"/><rect x="915" y="663.00" width="15.800" height="4" rx="1" fill="#c9c9cf" stroke="#1f1e1b" stroke-width="0.800"/><rect x="925.500" y="663.40" width="4.800" height="3.200" fill="#e3c870"/><rect x="920.500" y="663.40" width="1.400" height="3.200" fill="#55555c"/><rect x="863" y="675.20" width="15" height="4" rx="1" fill="#c9c9cf" stroke="#1f1e1b" stroke-width="0.800"/><rect x="863.500" y="675.60" width="4.800" height="3.200" fill="#e3c870"/><rect x="871" y="675.60" width="1.400" height="3.200" fill="#55555c"/><rect x="915" y="675.20" width="15.800" height="4" rx="1" fill="#c9c9cf" stroke="#1f1e1b" stroke-width="0.800"/><rect x="925.500" y="675.60" width="4.800" height="3.200" fill="#e3c870"/><rect x="920.500" y="675.60" width="1.400" height="3.200" fill="#55555c"/><rect x="863" y="687.40" width="15" height="4" rx="1" fill="#c9c9cf" stroke="#1f1e1b" stroke-width="0.800"/><rect x="863.500" y="687.80" width="4.800" height="3.200" fill="#e3c870"/><rect x="871" y="687.80" width="1.400" height="3.200" fill="#55555c"/><rect x="915" y="687.40" width="15.800" height="4" rx="1" fill="#c9c9cf" stroke="#1f1e1b" stroke-width="0.800"/><rect x="925.500" y="687.80" width="4.800" height="3.200" fill="#e3c870"/><rect x="920.500" y="687.80" width="1.400" height="3.200" fill="#55555c"/><rect x="863" y="699.60" width="15" height="4" rx="1" fill="#c9c9cf" stroke="#1f1e1b" stroke-width="0.800"/><rect x="863.500" y="700.00" width="4.800" height="3.200" fill="#e3c870"/><rect x="871" y="700.00" width="1.400" height="3.200" fill="#55555c"/><rect x="915" y="699.60" width="15.800" height="4" rx="1" fill="#c9c9cf" stroke="#1f1e1b" stroke-width="0.800"/><rect x="925.500" y="700.00" width="4.800" height="3.200" fill="#e3c870"/><rect x="920.500" y="700.00" width="1.400" height="3.200" fill="#55555c"/><rect x="877.900" y="659.4" width="37.300" height="47.400" rx="1" fill="#141413"/><rect x="880.300" y="661.4" width="33" height="43.400" fill="#1c1b19"/><circle cx="886.300" cy="665.20" r="1.900" fill="none" stroke="#0c0c0c" stroke-width="0.800"/><rect x="897.1" y="306.9" width="13" height="13" fill="#ebd184" stroke="#3c3620" stroke-width="1"/><circle cx="903.6" cy="313.4" r="4.200" fill="#e6e6e6" stroke="#7e7448" stroke-width="0.900"/><circle cx="927.6" cy="313.4" r="6.300" fill="#fbfbfb" stroke="#23221e" stroke-width="1"/><circle cx="903.6" cy="337.7" r="6.300" fill="#fbfbfb" stroke="#23221e" stroke-width="1"/><circle cx="927.6" cy="337.7" r="6.300" fill="#fbfbfb" stroke="#23221e" stroke-width="1"/><circle cx="903.6" cy="362" r="6.300" fill="#fbfbfb" stroke="#23221e" stroke-width="1"/><circle cx="927.6" cy="362" r="6.300" fill="#fbfbfb" stroke="#23221e" stroke-width="1"/><circle cx="903.6" cy="386.3" r="6.800" fill="#d9c37c" stroke="#3c3620" stroke-width="1"/><circle cx="903.6" cy="386.3" r="4.200" fill="#ebebeb" stroke="#7e7448" stroke-width="0.900"/><circle cx="927.6" cy="386.3" r="6.300" fill="#fbfbfb" stroke="#23221e" stroke-width="1"/><circle cx="903.6" cy="410.6" r="6.300" fill="#fbfbfb" stroke="#23221e" stroke-width="1"/><circle cx="927.6" cy="410.6" r="6.800" fill="#d9c37c" stroke="#3c3620" stroke-width="1"/><circle cx="927.6" cy="410.6" r="4.200" fill="#ebebeb" stroke="#7e7448" stroke-width="0.900"/><circle cx="903.6" cy="435" r="6.800" fill="#d9c37c" stroke="#3c3620" stroke-width="1"/><circle cx="903.6" cy="435" r="4.200" fill="#ebebeb" stroke="#7e7448" stroke-width="0.900"/><circle cx="927.6" cy="435" r="6.800" fill="#d9c37c" stroke="#3c3620" stroke-width="1"/><circle cx="927.6" cy="435" r="4.200" fill="#ebebeb" stroke="#7e7448" stroke-width="0.900"/><text transform="translate(895.200 762) rotate(90)" font-family="Liberation Sans, sans-serif" font-weight="700" font-style="italic" font-size="25.500" textLength="59" lengthAdjust="spacingAndGlyphs" fill="#e6e0d3" stroke="#e6e0d3" stroke-width="2.200" stroke-linejoin="round">APD</text><g transform="translate(569.2 367.9)"><rect x="-54.700" y="-45.50" width="6.500" height="5.800" fill="#a9a9c0" stroke="#111113" stroke-width="1.100"/><rect x="-54.700" y="-33.30" width="6.500" height="5.800" fill="#a9a9c0" stroke="#111113" stroke-width="1.100"/><rect x="-54.700" y="-21.10" width="6.500" height="5.800" fill="#a9a9c0" stroke="#111113" stroke-width="1.100"/><rect x="-54.700" y="-8.90" width="6.500" height="5.800" fill="#a9a9c0" stroke="#111113" stroke-width="1.100"/><rect x="-54.700" y="3.30" width="6.500" height="5.800" fill="#a9a9c0" stroke="#111113" stroke-width="1.100"/><rect x="-54.700" y="15.50" width="6.500" height="5.800" fill="#a9a9c0" stroke="#111113" stroke-width="1.100"/><rect x="-54.700" y="27.70" width="6.500" height="5.800" fill="#a9a9c0" stroke="#111113" stroke-width="1.100"/><rect x="-54.700" y="39.90" width="6.500" height="5.800" fill="#a9a9c0" stroke="#111113" stroke-width="1.100"/><path d="M46.500 -46.300 H55.300 V-34.700 H52 V-6.300 H55.300 V5.900 H52 V34.500 H55.300 V45.500 H46.500 Z" fill="#a9a9c0" stroke="#111113" stroke-width="1"/><rect x="46.500" y="-45.800" width="3.600" height="90.800" fill="#48484f"/><rect x="50.100" y="-45.800" width="1.200" height="90.800" fill="#7e7e90"/><rect x="-49.900" y="-47.800" width="97" height="95.600" rx="1.200" fill="#131312"/><rect x="-48.400" y="-45.600" width="94" height="91.200" fill="#37373a"/><rect x="-44.700" y="-43.300" width="89.400" height="86.600" fill="#2f2d29" stroke="#0d0d0d" stroke-width="1.300"/><path d="M-49 -47 L-44.700 -43.300 M46.500 -47 L44.700 -43.300 M-49 47 L-44.700 43.300 M46.500 47 L44.700 43.300" stroke="#0d0d0d" stroke-width="0.900"/><path d="M-9 -46.600 H23 L25.500 -43.300 L23 -39.800 H-9 L-11.500 -43.300 Z" fill="#5f5f6c" stroke="#0d0d0d" stroke-width="1"/><rect x="-7.500" y="-45.800" width="29" height="2.700" fill="#b5b5c9"/><path d="M-9 39.800 H23 L25.500 43.300 L23 46.800 H-9 L-11.500 43.300 Z" fill="#5f5f6c" stroke="#0d0d0d" stroke-width="1"/><rect x="-7.500" y="43.200" width="29" height="2.700" fill="#b5b5c9"/><circle r="11.800" fill="none" stroke="#0b0b0b" stroke-width="1.100"/></g><g transform="translate(553.2 502.1)"><rect x="-54.700" y="-45.50" width="6.500" height="5.800" fill="#a9a9c0" stroke="#111113" stroke-width="1.100"/><rect x="-54.700" y="-33.30" width="6.500" height="5.800" fill="#a9a9c0" stroke="#111113" stroke-width="1.100"/><rect x="-54.700" y="-21.10" width="6.500" height="5.800" fill="#a9a9c0" stroke="#111113" stroke-width="1.100"/><rect x="-54.700" y="-8.90" width="6.500" height="5.800" fill="#a9a9c0" stroke="#111113" stroke-width="1.100"/><rect x="-54.700" y="3.30" width="6.500" height="5.800" fill="#a9a9c0" stroke="#111113" stroke-width="1.100"/><rect x="-54.700" y="15.50" width="6.500" height="5.800" fill="#a9a9c0" stroke="#111113" stroke-width="1.100"/><rect x="-54.700" y="27.70" width="6.500" height="5.800" fill="#a9a9c0" stroke="#111113" stroke-width="1.100"/><rect x="-54.700" y="39.90" width="6.500" height="5.800" fill="#a9a9c0" stroke="#111113" stroke-width="1.100"/><path d="M46.500 -46.300 H55.300 V-34.700 H52 V-6.300 H55.300 V5.900 H52 V34.500 H55.300 V45.500 H46.500 Z" fill="#a9a9c0" stroke="#111113" stroke-width="1"/><rect x="46.500" y="-45.800" width="3.600" height="90.800" fill="#48484f"/><rect x="50.100" y="-45.800" width="1.200" height="90.800" fill="#7e7e90"/><rect x="-49.900" y="-47.800" width="97" height="95.600" rx="1.200" fill="#131312"/><rect x="-48.400" y="-45.600" width="94" height="91.200" fill="#37373a"/><rect x="-44.700" y="-43.300" width="89.400" height="86.600" fill="#2f2d29" stroke="#0d0d0d" stroke-width="1.300"/><path d="M-49 -47 L-44.700 -43.300 M46.500 -47 L44.700 -43.300 M-49 47 L-44.700 43.300 M46.500 47 L44.700 43.300" stroke="#0d0d0d" stroke-width="0.900"/><path d="M-9 -46.600 H23 L25.500 -43.300 L23 -39.800 H-9 L-11.500 -43.300 Z" fill="#5f5f6c" stroke="#0d0d0d" stroke-width="1"/><rect x="-7.500" y="-45.800" width="29" height="2.700" fill="#b5b5c9"/><path d="M-9 39.800 H23 L25.500 43.300 L23 46.800 H-9 L-11.500 43.300 Z" fill="#5f5f6c" stroke="#0d0d0d" stroke-width="1"/><rect x="-7.500" y="43.200" width="29" height="2.700" fill="#b5b5c9"/><circle r="11.800" fill="none" stroke="#0b0b0b" stroke-width="1.100"/></g><g transform="translate(562.7 611.7)"><rect x="-54.700" y="-45.50" width="6.500" height="5.800" fill="#a9a9c0" stroke="#111113" stroke-width="1.100"/><rect x="-54.700" y="-33.30" width="6.500" height="5.800" fill="#a9a9c0" stroke="#111113" stroke-width="1.100"/><rect x="-54.700" y="-21.10" width="6.500" height="5.800" fill="#a9a9c0" stroke="#111113" stroke-width="1.100"/><rect x="-54.700" y="-8.90" width="6.500" height="5.800" fill="#a9a9c0" stroke="#111113" stroke-width="1.100"/><rect x="-54.700" y="3.30" width="6.500" height="5.800" fill="#a9a9c0" stroke="#111113" stroke-width="1.100"/><rect x="-54.700" y="15.50" width="6.500" height="5.800" fill="#a9a9c0" stroke="#111113" stroke-width="1.100"/><rect x="-54.700" y="27.70" width="6.500" height="5.800" fill="#a9a9c0" stroke="#111113" stroke-width="1.100"/><rect x="-54.700" y="39.90" width="6.500" height="5.800" fill="#a9a9c0" stroke="#111113" stroke-width="1.100"/><path d="M46.500 -46.300 H55.300 V-34.700 H52 V-6.300 H55.300 V5.900 H52 V34.500 H55.300 V45.500 H46.500 Z" fill="#a9a9c0" stroke="#111113" stroke-width="1"/><rect x="46.500" y="-45.800" width="3.600" height="90.800" fill="#48484f"/><rect x="50.100" y="-45.800" width="1.200" height="90.800" fill="#7e7e90"/><rect x="-49.900" y="-47.800" width="97" height="95.600" rx="1.200" fill="#131312"/><rect x="-48.400" y="-45.600" width="94" height="91.200" fill="#37373a"/><rect x="-44.700" y="-43.300" width="89.400" height="86.600" fill="#2f2d29" stroke="#0d0d0d" stroke-width="1.300"/><path d="M-49 -47 L-44.700 -43.300 M46.500 -47 L44.700 -43.300 M-49 47 L-44.700 43.300 M46.500 47 L44.700 43.300" stroke="#0d0d0d" stroke-width="0.900"/><path d="M-9 -46.600 H23 L25.500 -43.300 L23 -39.800 H-9 L-11.500 -43.300 Z" fill="#5f5f6c" stroke="#0d0d0d" stroke-width="1"/><rect x="-7.500" y="-45.800" width="29" height="2.700" fill="#b5b5c9"/><path d="M-9 39.800 H23 L25.500 43.300 L23 46.800 H-9 L-11.500 43.300 Z" fill="#5f5f6c" stroke="#0d0d0d" stroke-width="1"/><rect x="-7.500" y="43.200" width="29" height="2.700" fill="#b5b5c9"/><circle r="11.800" fill="none" stroke="#0b0b0b" stroke-width="1.100"/></g><g transform="translate(575 730)"><rect x="-54.700" y="-45.50" width="6.500" height="5.800" fill="#a9a9c0" stroke="#111113" stroke-width="1.100"/><rect x="-54.700" y="-33.30" width="6.500" height="5.800" fill="#a9a9c0" stroke="#111113" stroke-width="1.100"/><rect x="-54.700" y="-21.10" width="6.500" height="5.800" fill="#a9a9c0" stroke="#111113" stroke-width="1.100"/><rect x="-54.700" y="-8.90" width="6.500" height="5.800" fill="#a9a9c0" stroke="#111113" stroke-width="1.100"/><rect x="-54.700" y="3.30" width="6.500" height="5.800" fill="#a9a9c0" stroke="#111113" stroke-width="1.100"/><rect x="-54.700" y="15.50" width="6.500" height="5.800" fill="#a9a9c0" stroke="#111113" stroke-width="1.100"/><rect x="-54.700" y="27.70" width="6.500" height="5.800" fill="#a9a9c0" stroke="#111113" stroke-width="1.100"/><rect x="-54.700" y="39.90" width="6.500" height="5.800" fill="#a9a9c0" stroke="#111113" stroke-width="1.100"/><path d="M46.500 -46.300 H55.300 V-34.700 H52 V-6.300 H55.300 V5.900 H52 V34.500 H55.300 V45.500 H46.500 Z" fill="#a9a9c0" stroke="#111113" stroke-width="1"/><rect x="46.500" y="-45.800" width="3.600" height="90.800" fill="#48484f"/><rect x="50.100" y="-45.800" width="1.200" height="90.800" fill="#7e7e90"/><rect x="-49.900" y="-47.800" width="97" height="95.600" rx="1.200" fill="#131312"/><rect x="-48.400" y="-45.600" width="94" height="91.200" fill="#37373a"/><rect x="-44.700" y="-43.300" width="89.400" height="86.600" fill="#2f2d29" stroke="#0d0d0d" stroke-width="1.300"/><path d="M-49 -47 L-44.700 -43.300 M46.500 -47 L44.700 -43.300 M-49 47 L-44.700 43.300 M46.500 47 L44.700 43.300" stroke="#0d0d0d" stroke-width="0.900"/><path d="M-9 -46.600 H23 L25.500 -43.300 L23 -39.800 H-9 L-11.500 -43.300 Z" fill="#5f5f6c" stroke="#0d0d0d" stroke-width="1"/><rect x="-7.500" y="-45.800" width="29" height="2.700" fill="#b5b5c9"/><path d="M-9 39.800 H23 L25.500 43.300 L23 46.800 H-9 L-11.500 43.300 Z" fill="#5f5f6c" stroke="#0d0d0d" stroke-width="1"/><rect x="-7.500" y="43.200" width="29" height="2.700" fill="#b5b5c9"/><circle r="11.800" fill="none" stroke="#0b0b0b" stroke-width="1.100"/></g><g transform="translate(577.3 843.3)"><rect x="-54.700" y="-45.50" width="6.500" height="5.800" fill="#a9a9c0" stroke="#111113" stroke-width="1.100"/><rect x="-54.700" y="-33.30" width="6.500" height="5.800" fill="#a9a9c0" stroke="#111113" stroke-width="1.100"/><rect x="-54.700" y="-21.10" width="6.500" height="5.800" fill="#a9a9c0" stroke="#111113" stroke-width="1.100"/><rect x="-54.700" y="-8.90" width="6.500" height="5.800" fill="#a9a9c0" stroke="#111113" stroke-width="1.100"/><rect x="-54.700" y="3.30" width="6.500" height="5.800" fill="#a9a9c0" stroke="#111113" stroke-width="1.100"/><rect x="-54.700" y="15.50" width="6.500" height="5.800" fill="#a9a9c0" stroke="#111113" stroke-width="1.100"/><rect x="-54.700" y="27.70" width="6.500" height="5.800" fill="#a9a9c0" stroke="#111113" stroke-width="1.100"/><rect x="-54.700" y="39.90" width="6.500" height="5.800" fill="#a9a9c0" stroke="#111113" stroke-width="1.100"/><path d="M46.500 -46.300 H55.300 V-34.700 H52 V-6.300 H55.300 V5.900 H52 V34.500 H55.300 V45.500 H46.500 Z" fill="#a9a9c0" stroke="#111113" stroke-width="1"/><rect x="46.500" y="-45.800" width="3.600" height="90.800" fill="#48484f"/><rect x="50.100" y="-45.800" width="1.200" height="90.800" fill="#7e7e90"/><rect x="-49.900" y="-47.800" width="97" height="95.600" rx="1.200" fill="#131312"/><rect x="-48.400" y="-45.600" width="94" height="91.200" fill="#37373a"/><rect x="-44.700" y="-43.300" width="89.400" height="86.600" fill="#2f2d29" stroke="#0d0d0d" stroke-width="1.300"/><path d="M-49 -47 L-44.700 -43.300 M46.500 -47 L44.700 -43.300 M-49 47 L-44.700 43.300 M46.500 47 L44.700 43.300" stroke="#0d0d0d" stroke-width="0.900"/><path d="M-9 -46.600 H23 L25.500 -43.300 L23 -39.800 H-9 L-11.500 -43.300 Z" fill="#5f5f6c" stroke="#0d0d0d" stroke-width="1"/><rect x="-7.500" y="-45.800" width="29" height="2.700" fill="#b5b5c9"/><path d="M-9 39.800 H23 L25.500 43.300 L23 46.800 H-9 L-11.500 43.300 Z" fill="#5f5f6c" stroke="#0d0d0d" stroke-width="1"/><rect x="-7.500" y="43.200" width="29" height="2.700" fill="#b5b5c9"/><circle r="11.800" fill="none" stroke="#0b0b0b" stroke-width="1.100"/></g><g transform="translate(1233.9 249)"><rect x="-54.700" y="-45.50" width="6.500" height="5.800" fill="#a9a9c0" stroke="#111113" stroke-width="1.100"/><rect x="-54.700" y="-33.30" width="6.500" height="5.800" fill="#a9a9c0" stroke="#111113" stroke-width="1.100"/><rect x="-54.700" y="-21.10" width="6.500" height="5.800" fill="#a9a9c0" stroke="#111113" stroke-width="1.100"/><rect x="-54.700" y="-8.90" width="6.500" height="5.800" fill="#a9a9c0" stroke="#111113" stroke-width="1.100"/><rect x="-54.700" y="3.30" width="6.500" height="5.800" fill="#a9a9c0" stroke="#111113" stroke-width="1.100"/><rect x="-54.700" y="15.50" width="6.500" height="5.800" fill="#a9a9c0" stroke="#111113" stroke-width="1.100"/><rect x="-54.700" y="27.70" width="6.500" height="5.800" fill="#a9a9c0" stroke="#111113" stroke-width="1.100"/><rect x="-54.700" y="39.90" width="6.500" height="5.800" fill="#a9a9c0" stroke="#111113" stroke-width="1.100"/><path d="M46.500 -46.300 H55.300 V-34.700 H52 V-6.300 H55.300 V5.900 H52 V34.500 H55.300 V45.500 H46.500 Z" fill="#a9a9c0" stroke="#111113" stroke-width="1"/><rect x="46.500" y="-45.800" width="3.600" height="90.800" fill="#48484f"/><rect x="50.100" y="-45.800" width="1.200" height="90.800" fill="#7e7e90"/><rect x="-49.900" y="-47.800" width="97" height="95.600" rx="1.200" fill="#131312"/><rect x="-48.400" y="-45.600" width="94" height="91.200" fill="#37373a"/><rect x="-44.700" y="-43.300" width="89.400" height="86.600" fill="#2f2d29" stroke="#0d0d0d" stroke-width="1.300"/><path d="M-49 -47 L-44.700 -43.300 M46.500 -47 L44.700 -43.300 M-49 47 L-44.700 43.300 M46.500 47 L44.700 43.300" stroke="#0d0d0d" stroke-width="0.900"/><path d="M-9 -46.600 H23 L25.500 -43.300 L23 -39.800 H-9 L-11.500 -43.300 Z" fill="#5f5f6c" stroke="#0d0d0d" stroke-width="1"/><rect x="-7.500" y="-45.800" width="29" height="2.700" fill="#b5b5c9"/><path d="M-9 39.800 H23 L25.500 43.300 L23 46.800 H-9 L-11.500 43.300 Z" fill="#5f5f6c" stroke="#0d0d0d" stroke-width="1"/><rect x="-7.500" y="43.200" width="29" height="2.700" fill="#b5b5c9"/><circle r="11.800" fill="none" stroke="#0b0b0b" stroke-width="1.100"/></g><g transform="translate(1294.8 352.9)"><rect x="-54.700" y="-45.50" width="6.500" height="5.800" fill="#a9a9c0" stroke="#111113" stroke-width="1.100"/><rect x="-54.700" y="-33.30" width="6.500" height="5.800" fill="#a9a9c0" stroke="#111113" stroke-width="1.100"/><rect x="-54.700" y="-21.10" width="6.500" height="5.800" fill="#a9a9c0" stroke="#111113" stroke-width="1.100"/><rect x="-54.700" y="-8.90" width="6.500" height="5.800" fill="#a9a9c0" stroke="#111113" stroke-width="1.100"/><rect x="-54.700" y="3.30" width="6.500" height="5.800" fill="#a9a9c0" stroke="#111113" stroke-width="1.100"/><rect x="-54.700" y="15.50" width="6.500" height="5.800" fill="#a9a9c0" stroke="#111113" stroke-width="1.100"/><rect x="-54.700" y="27.70" width="6.500" height="5.800" fill="#a9a9c0" stroke="#111113" stroke-width="1.100"/><rect x="-54.700" y="39.90" width="6.500" height="5.800" fill="#a9a9c0" stroke="#111113" stroke-width="1.100"/><path d="M46.500 -46.300 H55.300 V-34.700 H52 V-6.300 H55.300 V5.900 H52 V34.500 H55.300 V45.500 H46.500 Z" fill="#a9a9c0" stroke="#111113" stroke-width="1"/><rect x="46.500" y="-45.800" width="3.600" height="90.800" fill="#48484f"/><rect x="50.100" y="-45.800" width="1.200" height="90.800" fill="#7e7e90"/><rect x="-49.900" y="-47.800" width="97" height="95.600" rx="1.200" fill="#131312"/><rect x="-48.400" y="-45.600" width="94" height="91.200" fill="#37373a"/><rect x="-44.700" y="-43.300" width="89.400" height="86.600" fill="#2f2d29" stroke="#0d0d0d" stroke-width="1.300"/><path d="M-49 -47 L-44.700 -43.300 M46.500 -47 L44.700 -43.300 M-49 47 L-44.700 43.300 M46.500 47 L44.700 43.300" stroke="#0d0d0d" stroke-width="0.900"/><path d="M-9 -46.600 H23 L25.500 -43.300 L23 -39.800 H-9 L-11.500 -43.300 Z" fill="#5f5f6c" stroke="#0d0d0d" stroke-width="1"/><rect x="-7.500" y="-45.800" width="29" height="2.700" fill="#b5b5c9"/><path d="M-9 39.800 H23 L25.500 43.300 L23 46.800 H-9 L-11.500 43.300 Z" fill="#5f5f6c" stroke="#0d0d0d" stroke-width="1"/><rect x="-7.500" y="43.200" width="29" height="2.700" fill="#b5b5c9"/><circle r="11.800" fill="none" stroke="#0b0b0b" stroke-width="1.100"/></g><g transform="translate(1208 474.4)"><rect x="-54.700" y="-45.50" width="6.500" height="5.800" fill="#a9a9c0" stroke="#111113" stroke-width="1.100"/><rect x="-54.700" y="-33.30" width="6.500" height="5.800" fill="#a9a9c0" stroke="#111113" stroke-width="1.100"/><rect x="-54.700" y="-21.10" width="6.500" height="5.800" fill="#a9a9c0" stroke="#111113" stroke-width="1.100"/><rect x="-54.700" y="-8.90" width="6.500" height="5.800" fill="#a9a9c0" stroke="#111113" stroke-width="1.100"/><rect x="-54.700" y="3.30" width="6.500" height="5.800" fill="#a9a9c0" stroke="#111113" stroke-width="1.100"/><rect x="-54.700" y="15.50" width="6.500" height="5.800" fill="#a9a9c0" stroke="#111113" stroke-width="1.100"/><rect x="-54.700" y="27.70" width="6.500" height="5.800" fill="#a9a9c0" stroke="#111113" stroke-width="1.100"/><rect x="-54.700" y="39.90" width="6.500" height="5.800" fill="#a9a9c0" stroke="#111113" stroke-width="1.100"/><path d="M46.500 -46.300 H55.300 V-34.700 H52 V-6.300 H55.300 V5.900 H52 V34.500 H55.300 V45.500 H46.500 Z" fill="#a9a9c0" stroke="#111113" stroke-width="1"/><rect x="46.500" y="-45.800" width="3.600" height="90.800" fill="#48484f"/><rect x="50.100" y="-45.800" width="1.200" height="90.800" fill="#7e7e90"/><rect x="-49.900" y="-47.800" width="97" height="95.600" rx="1.200" fill="#131312"/><rect x="-48.400" y="-45.600" width="94" height="91.200" fill="#37373a"/><rect x="-44.700" y="-43.300" width="89.400" height="86.600" fill="#2f2d29" stroke="#0d0d0d" stroke-width="1.300"/><path d="M-49 -47 L-44.700 -43.300 M46.500 -47 L44.700 -43.300 M-49 47 L-44.700 43.300 M46.500 47 L44.700 43.300" stroke="#0d0d0d" stroke-width="0.900"/><path d="M-9 -46.600 H23 L25.500 -43.300 L23 -39.800 H-9 L-11.500 -43.300 Z" fill="#5f5f6c" stroke="#0d0d0d" stroke-width="1"/><rect x="-7.500" y="-45.800" width="29" height="2.700" fill="#b5b5c9"/><path d="M-9 39.800 H23 L25.500 43.300 L23 46.800 H-9 L-11.500 43.300 Z" fill="#5f5f6c" stroke="#0d0d0d" stroke-width="1"/><rect x="-7.500" y="43.200" width="29" height="2.700" fill="#b5b5c9"/><circle r="11.800" fill="none" stroke="#0b0b0b" stroke-width="1.100"/></g><g transform="translate(1366.1 477.7)"><rect x="-54.700" y="-45.50" width="6.500" height="5.800" fill="#a9a9c0" stroke="#111113" stroke-width="1.100"/><rect x="-54.700" y="-33.30" width="6.500" height="5.800" fill="#a9a9c0" stroke="#111113" stroke-width="1.100"/><rect x="-54.700" y="-21.10" width="6.500" height="5.800" fill="#a9a9c0" stroke="#111113" stroke-width="1.100"/><rect x="-54.700" y="-8.90" width="6.500" height="5.800" fill="#a9a9c0" stroke="#111113" stroke-width="1.100"/><rect x="-54.700" y="3.30" width="6.500" height="5.800" fill="#a9a9c0" stroke="#111113" stroke-width="1.100"/><rect x="-54.700" y="15.50" width="6.500" height="5.800" fill="#a9a9c0" stroke="#111113" stroke-width="1.100"/><rect x="-54.700" y="27.70" width="6.500" height="5.800" fill="#a9a9c0" stroke="#111113" stroke-width="1.100"/><rect x="-54.700" y="39.90" width="6.500" height="5.800" fill="#a9a9c0" stroke="#111113" stroke-width="1.100"/><path d="M46.500 -46.300 H55.300 V-34.700 H52 V-6.300 H55.300 V5.900 H52 V34.500 H55.300 V45.500 H46.500 Z" fill="#a9a9c0" stroke="#111113" stroke-width="1"/><rect x="46.500" y="-45.800" width="3.600" height="90.800" fill="#48484f"/><rect x="50.100" y="-45.800" width="1.200" height="90.800" fill="#7e7e90"/><rect x="-49.900" y="-47.800" width="97" height="95.600" rx="1.200" fill="#131312"/><rect x="-48.400" y="-45.600" width="94" height="91.200" fill="#37373a"/><rect x="-44.700" y="-43.300" width="89.400" height="86.600" fill="#2f2d29" stroke="#0d0d0d" stroke-width="1.300"/><path d="M-49 -47 L-44.700 -43.300 M46.500 -47 L44.700 -43.300 M-49 47 L-44.700 43.300 M46.500 47 L44.700 43.300" stroke="#0d0d0d" stroke-width="0.900"/><path d="M-9 -46.600 H23 L25.500 -43.300 L23 -39.800 H-9 L-11.500 -43.300 Z" fill="#5f5f6c" stroke="#0d0d0d" stroke-width="1"/><rect x="-7.500" y="-45.800" width="29" height="2.700" fill="#b5b5c9"/><path d="M-9 39.800 H23 L25.500 43.300 L23 46.800 H-9 L-11.500 43.300 Z" fill="#5f5f6c" stroke="#0d0d0d" stroke-width="1"/><rect x="-7.500" y="43.200" width="29" height="2.700" fill="#b5b5c9"/><circle r="11.800" fill="none" stroke="#0b0b0b" stroke-width="1.100"/></g><g transform="translate(1304.9 586.5)"><rect x="-54.700" y="-45.50" width="6.500" height="5.800" fill="#a9a9c0" stroke="#111113" stroke-width="1.100"/><rect x="-54.700" y="-33.30" width="6.500" height="5.800" fill="#a9a9c0" stroke="#111113" stroke-width="1.100"/><rect x="-54.700" y="-21.10" width="6.500" height="5.800" fill="#a9a9c0" stroke="#111113" stroke-width="1.100"/><rect x="-54.700" y="-8.90" width="6.500" height="5.800" fill="#a9a9c0" stroke="#111113" stroke-width="1.100"/><rect x="-54.700" y="3.30" width="6.500" height="5.800" fill="#a9a9c0" stroke="#111113" stroke-width="1.100"/><rect x="-54.700" y="15.50" width="6.500" height="5.800" fill="#a9a9c0" stroke="#111113" stroke-width="1.100"/><rect x="-54.700" y="27.70" width="6.500" height="5.800" fill="#a9a9c0" stroke="#111113" stroke-width="1.100"/><rect x="-54.700" y="39.90" width="6.500" height="5.800" fill="#a9a9c0" stroke="#111113" stroke-width="1.100"/><path d="M46.500 -46.300 H55.300 V-34.700 H52 V-6.300 H55.300 V5.900 H52 V34.500 H55.300 V45.500 H46.500 Z" fill="#a9a9c0" stroke="#111113" stroke-width="1"/><rect x="46.500" y="-45.800" width="3.600" height="90.800" fill="#48484f"/><rect x="50.100" y="-45.800" width="1.200" height="90.800" fill="#7e7e90"/><rect x="-49.900" y="-47.800" width="97" height="95.600" rx="1.200" fill="#131312"/><rect x="-48.400" y="-45.600" width="94" height="91.200" fill="#37373a"/><rect x="-44.700" y="-43.300" width="89.400" height="86.600" fill="#2f2d29" stroke="#0d0d0d" stroke-width="1.300"/><path d="M-49 -47 L-44.700 -43.300 M46.500 -47 L44.700 -43.300 M-49 47 L-44.700 43.300 M46.500 47 L44.700 43.300" stroke="#0d0d0d" stroke-width="0.900"/><path d="M-9 -46.600 H23 L25.500 -43.300 L23 -39.800 H-9 L-11.500 -43.300 Z" fill="#5f5f6c" stroke="#0d0d0d" stroke-width="1"/><rect x="-7.500" y="-45.800" width="29" height="2.700" fill="#b5b5c9"/><path d="M-9 39.800 H23 L25.500 43.300 L23 46.800 H-9 L-11.500 43.300 Z" fill="#5f5f6c" stroke="#0d0d0d" stroke-width="1"/><rect x="-7.500" y="43.200" width="29" height="2.700" fill="#b5b5c9"/><circle r="11.800" fill="none" stroke="#0b0b0b" stroke-width="1.100"/></g><g transform="translate(1321.7 688.6)"><rect x="-54.700" y="-45.50" width="6.500" height="5.800" fill="#a9a9c0" stroke="#111113" stroke-width="1.100"/><rect x="-54.700" y="-33.30" width="6.500" height="5.800" fill="#a9a9c0" stroke="#111113" stroke-width="1.100"/><rect x="-54.700" y="-21.10" width="6.500" height="5.800" fill="#a9a9c0" stroke="#111113" stroke-width="1.100"/><rect x="-54.700" y="-8.90" width="6.500" height="5.800" fill="#a9a9c0" stroke="#111113" stroke-width="1.100"/><rect x="-54.700" y="3.30" width="6.500" height="5.800" fill="#a9a9c0" stroke="#111113" stroke-width="1.100"/><rect x="-54.700" y="15.50" width="6.500" height="5.800" fill="#a9a9c0" stroke="#111113" stroke-width="1.100"/><rect x="-54.700" y="27.70" width="6.500" height="5.800" fill="#a9a9c0" stroke="#111113" stroke-width="1.100"/><rect x="-54.700" y="39.90" width="6.500" height="5.800" fill="#a9a9c0" stroke="#111113" stroke-width="1.100"/><path d="M46.500 -46.300 H55.300 V-34.700 H52 V-6.300 H55.300 V5.900 H52 V34.500 H55.300 V45.500 H46.500 Z" fill="#a9a9c0" stroke="#111113" stroke-width="1"/><rect x="46.500" y="-45.800" width="3.600" height="90.800" fill="#48484f"/><rect x="50.100" y="-45.800" width="1.200" height="90.800" fill="#7e7e90"/><rect x="-49.900" y="-47.800" width="97" height="95.600" rx="1.200" fill="#131312"/><rect x="-48.400" y="-45.600" width="94" height="91.200" fill="#37373a"/><rect x="-44.700" y="-43.300" width="89.400" height="86.600" fill="#2f2d29" stroke="#0d0d0d" stroke-width="1.300"/><path d="M-49 -47 L-44.700 -43.300 M46.500 -47 L44.700 -43.300 M-49 47 L-44.700 43.300 M46.500 47 L44.700 43.300" stroke="#0d0d0d" stroke-width="0.900"/><path d="M-9 -46.600 H23 L25.500 -43.300 L23 -39.800 H-9 L-11.500 -43.300 Z" fill="#5f5f6c" stroke="#0d0d0d" stroke-width="1"/><rect x="-7.500" y="-45.800" width="29" height="2.700" fill="#b5b5c9"/><path d="M-9 39.800 H23 L25.500 43.300 L23 46.800 H-9 L-11.500 43.300 Z" fill="#5f5f6c" stroke="#0d0d0d" stroke-width="1"/><rect x="-7.500" y="43.200" width="29" height="2.700" fill="#b5b5c9"/><circle r="11.800" fill="none" stroke="#0b0b0b" stroke-width="1.100"/></g><g transform="translate(1336 802)"><rect x="-54.700" y="-45.50" width="6.500" height="5.800" fill="#a9a9c0" stroke="#111113" stroke-width="1.100"/><rect x="-54.700" y="-33.30" width="6.500" height="5.800" fill="#a9a9c0" stroke="#111113" stroke-width="1.100"/><rect x="-54.700" y="-21.10" width="6.500" height="5.800" fill="#a9a9c0" stroke="#111113" stroke-width="1.100"/><rect x="-54.700" y="-8.90" width="6.500" height="5.800" fill="#a9a9c0" stroke="#111113" stroke-width="1.100"/><rect x="-54.700" y="3.30" width="6.500" height="5.800" fill="#a9a9c0" stroke="#111113" stroke-width="1.100"/><rect x="-54.700" y="15.50" width="6.500" height="5.800" fill="#a9a9c0" stroke="#111113" stroke-width="1.100"/><rect x="-54.700" y="27.70" width="6.500" height="5.800" fill="#a9a9c0" stroke="#111113" stroke-width="1.100"/><rect x="-54.700" y="39.90" width="6.500" height="5.800" fill="#a9a9c0" stroke="#111113" stroke-width="1.100"/><path d="M46.500 -46.300 H55.300 V-34.700 H52 V-6.300 H55.300 V5.900 H52 V34.500 H55.300 V45.500 H46.500 Z" fill="#a9a9c0" stroke="#111113" stroke-width="1"/><rect x="46.500" y="-45.800" width="3.600" height="90.800" fill="#48484f"/><rect x="50.100" y="-45.800" width="1.200" height="90.800" fill="#7e7e90"/><rect x="-49.900" y="-47.800" width="97" height="95.600" rx="1.200" fill="#131312"/><rect x="-48.400" y="-45.600" width="94" height="91.200" fill="#37373a"/><rect x="-44.700" y="-43.300" width="89.400" height="86.600" fill="#2f2d29" stroke="#0d0d0d" stroke-width="1.300"/><path d="M-49 -47 L-44.700 -43.300 M46.500 -47 L44.700 -43.300 M-49 47 L-44.700 43.300 M46.500 47 L44.700 43.300" stroke="#0d0d0d" stroke-width="0.900"/><path d="M-9 -46.600 H23 L25.500 -43.300 L23 -39.800 H-9 L-11.500 -43.300 Z" fill="#5f5f6c" stroke="#0d0d0d" stroke-width="1"/><rect x="-7.500" y="-45.800" width="29" height="2.700" fill="#b5b5c9"/><path d="M-9 39.800 H23 L25.500 43.300 L23 46.800 H-9 L-11.500 43.300 Z" fill="#5f5f6c" stroke="#0d0d0d" stroke-width="1"/><rect x="-7.500" y="43.200" width="29" height="2.700" fill="#b5b5c9"/><circle r="11.800" fill="none" stroke="#0b0b0b" stroke-width="1.100"/></g></svg>
<span class="t" style="left:990.5px;top:881.00px;font-size:27px;color:#c9c5b8;font-weight:400;">A</span>
<div class="a" style="left:1812.700px;top:219.200px;width:63px;height:63px;background:#f1f1f1;border:1.200px solid #a4a4a4;border-radius:2.500px;box-shadow:0 1px 10px rgba(0,0,0,0.240);box-sizing:border-box;"></div>
<div class="a" style="left:1825px;top:232px;width:39px;height:38px;background:#e6e7ea;"></div>
<span class="t" style="left:1831.3px;top:241.75px;font-size:18.5px;color:#8e939b;font-weight:700;transform:scaleX(0.6977);">TOP</span>
<span class="t" style="left:1815px;top:201.05px;font-size:18.5px;color:#7ff080;font-weight:700;transform:scaleX(0.6321);">Y</span>
<span class="t" style="left:1880.9px;top:267.35px;font-size:18.5px;color:#ff8585;font-weight:700;transform:scaleX(0.6889);">X</span>
<span class="t" style="left:1805.6px;top:276.05px;font-size:18.5px;color:#7474ff;font-weight:700;transform:scaleX(0.8318);font-style:italic;">Z</span>
<div class="a" style="left:1876px;top:276px;width:2.5px;height:2.5px;background:#ff7575;"></div>
<div class="a" style="left:811px;top:978px;width:296px;height:30px;background:#f0f0f0;"></div>
<svg class="a" style="left:805px;top:976px" width="310" height="34" viewBox="805 976 310 34"><ellipse cx="824.500" cy="993.500" rx="8.800" ry="3.700" fill="none" stroke="#2b2b2b" stroke-width="1.500"/><rect x="823" y="986" width="3" height="15.500" fill="#e8e8e8" stroke="#2b2b2b" stroke-width="0.900"/><path d="M824.500 982.800 l-3.300 4.200 h6.600 z" fill="#e8e8e8" stroke="#2b2b2b" stroke-width="0.900"/><path d="M816 996.500 l5 -2.800 v5.600 z" fill="#2b2b2b"/><path d="M841.5 990.300 h7 l-3.500 4.500 z" fill="#2b2b2b"/><rect x="856.500" y="988.500" width="19" height="13.500" fill="#e9e9e9" stroke="#444" stroke-width="1.200"/><rect x="860.500" y="993" width="11" height="5.500" fill="#a8b4c8" stroke="#444" stroke-width="1"/><path d="M859 988 l4 -4 v3 l4 -2.500 v3 l4 -2 v2.500" fill="none" stroke="#555" stroke-width="1.100"/><path d="M892 994 l-2.500 -2.500 q-1.500 -0.500 -1 1.500 l4.500 7 q1.500 2 4 2 h5 q2.500 -0.500 3 -3.500 l1.500 -8 q0 -1.700 -1.600 -1.200 l-1 4.200 l0.300 -7.500 q-0.600 -1.600 -2 -0.400 l-0.600 6.500 l-0.400 -8.300 q-0.900 -1.400 -2.100 0 l-0.200 8.300 l-1.300 -7 q-1 -1.300 -2.100 0 l0.900 10.500 z" fill="#fafafa" stroke="#333" stroke-width="1.100" stroke-linejoin="round"/><circle cx="928" cy="991.500" r="5.700" fill="#dfeaf2" stroke="#555" stroke-width="1.400"/><path d="M932.300 996 l4.500 4.700" stroke="#333" stroke-width="2.600" stroke-linecap="round"/><path d="M935.500 986.500 h5 M938 984 v5 M935.500 991.500 h5" stroke="#333" stroke-width="1.100"/><circle cx="961.500" cy="991" r="7.300" fill="#f4f4f4" stroke="#444" stroke-width="1.500"/><rect x="958" y="987.500" width="7" height="7" fill="#ddd" stroke="#666" stroke-width="0.900"/><path d="M967 997 l5.300 5" stroke="#333" stroke-width="2.800" stroke-linecap="round"/><path d="M980 990.300 h7 l-3.500 4.500 z" fill="#2b2b2b"/><rect x="995.500" y="983.500" width="19" height="14.500" rx="1" fill="#e4e4e4" stroke="#444" stroke-width="1.200"/><rect x="998" y="986" width="14" height="9.500" fill="#9db8e0" stroke="#5877a8" stroke-width="0.800"/><path d="M1002 998 h6 l1 3 h-8 z" fill="#bbb" stroke="#555" stroke-width="0.800"/><path d="M1017.5 990.300 h7 l-3.500 4.500 z" fill="#2b2b2b"/><rect x="1033.500" y="983.500" width="19" height="18.500" fill="#cfcfcf" stroke="#555" stroke-width="1"/><path d="M1037.3 983.500 v18.500 M1033.500 987.2 h19" stroke="#6a6a6a" stroke-width="0.800"/><path d="M1041.1 983.500 v18.500 M1033.500 990.9 h19" stroke="#6a6a6a" stroke-width="0.800"/><path d="M1044.9 983.500 v18.500 M1033.500 994.6 h19" stroke="#6a6a6a" stroke-width="0.800"/><path d="M1048.7 983.500 v18.500 M1033.500 998.3 h19" stroke="#6a6a6a" stroke-width="0.800"/><path d="M1057 990.300 h7 l-3.500 4.500 z" fill="#2b2b2b"/><rect x="1072.5" y="984" width="8.500" height="7.800" rx="1" fill="#9fb6dc" stroke="#3f5f96" stroke-width="1.200"/><rect x="1082.5" y="984" width="8.500" height="7.800" rx="1" fill="#9fb6dc" stroke="#3f5f96" stroke-width="1.200"/><rect x="1072.5" y="993" width="8.500" height="7.800" rx="1" fill="#9fb6dc" stroke="#3f5f96" stroke-width="1.200"/><rect x="1082.5" y="993" width="8.500" height="7.800" rx="1" fill="#9fb6dc" stroke="#3f5f96" stroke-width="1.200"/><path d="M1095 990.300 h7 l-3.500 4.500 z" fill="#2b2b2b"/></svg>
<div class="a" style="left:0px;top:1013px;width:1920px;height:67px;background:#f2f2f2;"></div>
<div class="a" style="left:0px;top:1013px;width:1920px;height:1.5px;background:#e8e8e8;"></div>
<div class="a" style="left:1864px;top:1013px;width:56px;height:1.5px;background:#dcdcdc;"></div>
<div class="a" style="left:5px;top:1013.500px;width:732px;height:8px;background:#c9c9c9;border-radius:0 0 4px 4px;"></div>
<svg class="a" style="left:0;top:1024px" width="1920" height="56" viewBox="0 1024 1920 56"><rect x="13.700" y="1040.800" width="2.500" height="17.200" fill="#4a4a4a"/><path d="M16.200 1049.400 L28.700 1040.800 V1058 Z" fill="#4a4a4a"/><path d="M44.200 1049.400 L56.500 1041.500 V1057.300 Z" fill="#4a4a4a"/><rect x="57.500" y="1045" width="2.500" height="8.500" fill="#4a4a4a"/><path d="M75.800 1039.700 V1059.200 L90.800 1049.400 Z" fill="#4a4a4a"/><rect x="106.300" y="1045" width="2.500" height="8.500" fill="#4a4a4a"/><path d="M122.200 1049.400 L110 1041.500 V1057.300 Z" fill="#4a4a4a"/><path d="M151 1049.400 L138.700 1040.800 V1058 Z" fill="#4a4a4a"/><rect x="151" y="1040.800" width="2.700" height="17.200" fill="#4a4a4a"/><rect x="191.500" y="1063.800" width="1659" height="2.200" fill="#cfcfcf"/><rect x="1853" y="1063.800" width="4" height="2.200" fill="#cfcfcf"/><rect x="1860" y="1063.800" width="4" height="2.200" fill="#cfcfcf"/><rect x="191.30" y="1057" width="2.400" height="7" fill="#cfcfcf"/><path d="M184.5 1034.4 H196.8 M182.5 1036.4 V1048.6 M198.8 1036.4 V1042.4 M184.5 1050.6 H193.8" stroke="#555" stroke-width="1.100" fill="none"/><rect x="181.20" y="1033.10" width="2.600" height="2.600" fill="#1a8fff"/><rect x="197.50" y="1033.10" width="2.600" height="2.600" fill="#1a8fff"/><rect x="181.20" y="1049.30" width="2.600" height="2.600" fill="#1a8fff"/><path d="M194.0 1051.6 L201.7 1043.3 L203.5 1045.1 L195.8 1053.3 Z" fill="#f5b942"/><path d="M200.8 1044.200 L201.7 1043.300 Q203.3 1042.700 204.1 1044.500 L203.5 1045.900 L202.6 1046.900 Z" fill="#f5454f"/><path d="M194.0 1051.6 L192.7 1053.8999999999999 L195.8 1053.3 Z" fill="#666"/><rect x="221.30" y="1057" width="2.400" height="7" fill="#cfcfcf"/><path d="M213.0 1049 H224.5 L228.2 1045.300 V1049 L224.5 1052.600 H213.0 Z" fill="#bdbdbd"/><rect x="213.0" y="1037" width="11.5" height="11.700" fill="#6ab0e6"/><path d="M213.0 1037 L216.7 1033 H228.2 L224.5 1037 Z" fill="#8ccbfb"/><path d="M224.5 1037 L228.2 1033 V1044.800 L224.5 1048.700 Z" fill="#4593cf"/><path d="M231.1 1049.400 V1037" stroke="#222" stroke-width="1.100"/><path d="M231.1 1034 l-2.100 3.800 h4.200 z" fill="#222"/><rect x="251.30" y="1057" width="2.400" height="7" fill="#cfcfcf"/><path d="M243.0 1049 H254.5 L258.2 1045.300 V1049 L254.5 1052.600 H243.0 Z" fill="#bdbdbd"/><rect x="243.0" y="1037" width="11.5" height="11.700" fill="#6ab0e6"/><path d="M243.0 1037 L246.7 1033 H258.2 L254.5 1037 Z" fill="#8ccbfb"/><path d="M254.5 1037 L258.2 1033 V1044.800 L254.5 1048.700 Z" fill="#4593cf"/><path d="M261.1 1049.400 V1037" stroke="#222" stroke-width="1.100"/><path d="M261.1 1034 l-2.100 3.800 h4.200 z" fill="#222"/><rect x="281.30" y="1057" width="2.400" height="7" fill="#cfcfcf"/><path d="M273.0 1049 H284.5 L288.2 1045.300 V1049 L284.5 1052.600 H273.0 Z" fill="#bdbdbd"/><rect x="273.0" y="1037" width="11.5" height="11.700" fill="#6ab0e6"/><path d="M273.0 1037 L276.7 1033 H288.2 L284.5 1037 Z" fill="#8ccbfb"/><path d="M284.5 1037 L288.2 1033 V1044.800 L284.5 1048.700 Z" fill="#4593cf"/><path d="M291.1 1049.400 V1037" stroke="#222" stroke-width="1.100"/><path d="M291.1 1034 l-2.100 3.800 h4.200 z" fill="#222"/><rect x="311.30" y="1057" width="2.400" height="7" fill="#cfcfcf"/><path d="M302.7 1037.3 L306.7 1033.6 H322.7 V1048.6 L318.7 1052.6 H302.7 Z" fill="#d9d9d9" stroke="#7a7a7a" stroke-width="1.100" stroke-linejoin="round"/><path d="M303.5 1037.1 L307.0 1034.2 H321.9 L318.7 1037.1 Z" fill="#ececec"/><path d="M319.0 1037.3 L322.09999999999997 1034.5 V1048.3 L319.0 1051.8 Z" fill="#c2c2c2"/><g fill="#e4e4e4" stroke="#929292" stroke-width="1.100" transform="rotate(-38 311.5 1044.300)"><rect x="303.5" y="1041.800" width="9.300" height="5" rx="2.500"/><rect x="310.2" y="1041.800" width="9.300" height="5" rx="2.500"/></g><rect x="341.30" y="1057" width="2.400" height="7" fill="#cfcfcf"/><rect x="333.0" y="1033.600" width="8.200" height="19" fill="#f8f8f8" stroke="#6a6a6a" stroke-width="1"/><rect x="341.5" y="1033.400" width="11" height="8.200" fill="#6ab0e6" stroke="#5a9fd6" stroke-width="0.500"/><rect x="371.30" y="1057" width="2.400" height="7" fill="#cfcfcf"/><rect x="363.0" y="1033.600" width="8.200" height="19" fill="#f8f8f8" stroke="#6a6a6a" stroke-width="1"/><rect x="371.5" y="1033.400" width="11" height="8.200" fill="#6ab0e6" stroke="#5a9fd6" stroke-width="0.500"/><rect x="401.30" y="1057" width="2.400" height="7" fill="#cfcfcf"/><path d="M394.5 1034.4 H406.8 M392.5 1036.4 V1048.6 M408.8 1036.4 V1042.4 M394.5 1050.6 H403.8" stroke="#555" stroke-width="1.100" fill="none"/><rect x="391.20" y="1033.10" width="2.600" height="2.600" fill="#1a8fff"/><rect x="407.50" y="1033.10" width="2.600" height="2.600" fill="#1a8fff"/><rect x="391.20" y="1049.30" width="2.600" height="2.600" fill="#1a8fff"/><path d="M404.0 1051.6 L411.7 1043.3 L413.5 1045.1 L405.8 1053.3 Z" fill="#f5b942"/><path d="M410.8 1044.200 L411.7 1043.300 Q413.3 1042.700 414.1 1044.500 L413.5 1045.900 L412.6 1046.900 Z" fill="#f5454f"/><path d="M404.0 1051.6 L402.7 1053.8999999999999 L405.8 1053.3 Z" fill="#666"/><rect x="431.30" y="1057" width="2.400" height="7" fill="#cfcfcf"/><path d="M423.0 1049 H434.5 L438.2 1045.300 V1049 L434.5 1052.600 H423.0 Z" fill="#bdbdbd"/><rect x="423.0" y="1037" width="11.5" height="11.700" fill="#6ab0e6"/><path d="M423.0 1037 L426.7 1033 H438.2 L434.5 1037 Z" fill="#8ccbfb"/><path d="M434.5 1037 L438.2 1033 V1044.800 L434.5 1048.700 Z" fill="#4593cf"/><path d="M441.1 1049.400 V1037" stroke="#222" stroke-width="1.100"/><path d="M441.1 1034 l-2.100 3.800 h4.200 z" fill="#222"/><rect x="461.30" y="1057" width="2.400" height="7" fill="#cfcfcf"/><path d="M453.0 1049 H464.5 L468.2 1045.300 V1049 L464.5 1052.600 H453.0 Z" fill="#bdbdbd"/><rect x="453.0" y="1037" width="11.5" height="11.700" fill="#6ab0e6"/><path d="M453.0 1037 L456.7 1033 H468.2 L464.5 1037 Z" fill="#8ccbfb"/><path d="M464.5 1037 L468.2 1033 V1044.800 L464.5 1048.700 Z" fill="#4593cf"/><path d="M471.1 1049.400 V1037" stroke="#222" stroke-width="1.100"/><path d="M471.1 1034 l-2.100 3.800 h4.200 z" fill="#222"/><rect x="491.30" y="1057" width="2.400" height="7" fill="#cfcfcf"/><path d="M489.7 1036.9 H496.2 M486.7 1039.9 V1046.3 M489.7 1049.3 H496.2" stroke="#555" stroke-width="1" stroke-dasharray="2.500 1.500" fill="none"/><rect x="484.59999999999997" y="1034.8000000000002" width="4.200" height="4.200" fill="#f8f8f8" stroke="#555" stroke-width="0.900"/><rect x="496.80" y="1034.50" width="4.800" height="4.800" fill="#4f9fe0" stroke="#7fbcf0" stroke-width="0.400"/><rect x="484.30" y="1046.90" width="4.800" height="4.800" fill="#4f9fe0" stroke="#7fbcf0" stroke-width="0.400"/><rect x="496.80" y="1046.90" width="4.800" height="4.800" fill="#4f9fe0" stroke="#7fbcf0" stroke-width="0.400"/><rect x="521.30" y="1057" width="2.400" height="7" fill="#cfcfcf"/><path d="M514.5 1034.4 H526.8 M512.5 1036.4 V1048.6 M528.8 1036.4 V1042.4 M514.5 1050.6 H523.8" stroke="#555" stroke-width="1.100" fill="none"/><rect x="511.20" y="1033.10" width="2.600" height="2.600" fill="#1a8fff"/><rect x="527.50" y="1033.10" width="2.600" height="2.600" fill="#1a8fff"/><rect x="511.20" y="1049.30" width="2.600" height="2.600" fill="#1a8fff"/><path d="M524.0 1051.6 L531.7 1043.3 L533.5 1045.1 L525.8 1053.3 Z" fill="#f5b942"/><path d="M530.8 1044.200 L531.7 1043.300 Q533.3 1042.700 534.1 1044.500 L533.5 1045.900 L532.6 1046.900 Z" fill="#f5454f"/><path d="M524.0 1051.6 L522.7 1053.8999999999999 L525.8 1053.3 Z" fill="#666"/><rect x="551.30" y="1057" width="2.400" height="7" fill="#cfcfcf"/><path d="M543.0 1049 H554.5 L558.2 1045.300 V1049 L554.5 1052.600 H543.0 Z" fill="#bdbdbd"/><rect x="543.0" y="1037" width="11.5" height="11.700" fill="#6ab0e6"/><path d="M543.0 1037 L546.7 1033 H558.2 L554.5 1037 Z" fill="#8ccbfb"/><path d="M554.5 1037 L558.2 1033 V1044.800 L554.5 1048.700 Z" fill="#4593cf"/><path d="M561.1 1049.400 V1037" stroke="#222" stroke-width="1.100"/><path d="M561.1 1034 l-2.100 3.800 h4.200 z" fill="#222"/><rect x="581.30" y="1057" width="2.400" height="7" fill="#cfcfcf"/><path d="M572.7 1037.3 L576.7 1033.6 H592.7 V1048.6 L588.7 1052.6 H572.7 Z" fill="#d9d9d9" stroke="#7a7a7a" stroke-width="1.100" stroke-linejoin="round"/><path d="M573.5 1037.1 L577.0 1034.2 H591.9000000000001 L588.7 1037.1 Z" fill="#ececec"/><path d="M589.0 1037.3 L592.1 1034.5 V1048.3 L589.0 1051.8 Z" fill="#c2c2c2"/><g fill="#e4e4e4" stroke="#929292" stroke-width="1.100" transform="rotate(-38 581.5 1044.300)"><rect x="573.5" y="1041.800" width="9.300" height="5" rx="2.500"/><rect x="580.2" y="1041.800" width="9.300" height="5" rx="2.500"/></g><rect x="611.30" y="1057" width="2.400" height="7" fill="#cfcfcf"/><rect x="603.0" y="1033.600" width="8.200" height="19" fill="#f8f8f8" stroke="#6a6a6a" stroke-width="1"/><rect x="611.5" y="1033.400" width="11" height="8.200" fill="#6ab0e6" stroke="#5a9fd6" stroke-width="0.500"/><rect x="641.30" y="1057" width="2.400" height="7" fill="#cfcfcf"/><rect x="633.0" y="1033.600" width="8.200" height="19" fill="#f8f8f8" stroke="#6a6a6a" stroke-width="1"/><rect x="641.5" y="1033.400" width="11" height="8.200" fill="#6ab0e6" stroke="#5a9fd6" stroke-width="0.500"/><rect x="671.30" y="1057" width="2.400" height="7" fill="#cfcfcf"/><path d="M662.7 1037.3 L666.7 1033.6 H682.7 V1048.6 L678.7 1052.6 H662.7 Z" fill="#d9d9d9" stroke="#7a7a7a" stroke-width="1.100" stroke-linejoin="round"/><path d="M663.5 1037.1 L667.0 1034.2 H681.9000000000001 L678.7 1037.1 Z" fill="#ececec"/><path d="M679.0 1037.3 L682.1 1034.5 V1048.3 L679.0 1051.8 Z" fill="#c2c2c2"/><g fill="#e4e4e4" stroke="#929292" stroke-width="1.100" transform="rotate(-38 671.5 1044.300)"><rect x="663.5" y="1041.800" width="9.300" height="5" rx="2.500"/><rect x="670.2" y="1041.800" width="9.300" height="5" rx="2.500"/></g><rect x="701.30" y="1057" width="2.400" height="7" fill="#cfcfcf"/><path d="M692.7 1037.3 L696.7 1033.6 H712.7 V1048.6 L708.7 1052.6 H692.7 Z" fill="#d9d9d9" stroke="#7a7a7a" stroke-width="1.100" stroke-linejoin="round"/><path d="M693.5 1037.1 L697.0 1034.2 H711.9000000000001 L708.7 1037.1 Z" fill="#ececec"/><path d="M709.0 1037.3 L712.1 1034.5 V1048.3 L709.0 1051.8 Z" fill="#c2c2c2"/><g fill="#e4e4e4" stroke="#929292" stroke-width="1.100" transform="rotate(-38 701.5 1044.300)"><rect x="693.5" y="1041.800" width="9.300" height="5" rx="2.500"/><rect x="700.2" y="1041.800" width="9.300" height="5" rx="2.500"/></g><rect x="731.30" y="1057" width="2.400" height="7" fill="#cfcfcf"/><path d="M722.7 1037.3 L726.7 1033.6 H742.7 V1048.6 L738.7 1052.6 H722.7 Z" fill="#d9d9d9" stroke="#7a7a7a" stroke-width="1.100" stroke-linejoin="round"/><path d="M723.5 1037.1 L727.0 1034.2 H741.9000000000001 L738.7 1037.1 Z" fill="#ececec"/><path d="M739.0 1037.3 L742.1 1034.5 V1048.3 L739.0 1051.8 Z" fill="#c2c2c2"/><g fill="#e4e4e4" stroke="#929292" stroke-width="1.100" transform="rotate(-38 731.5 1044.300)"><rect x="723.5" y="1041.800" width="9.300" height="5" rx="2.500"/><rect x="730.2" y="1041.800" width="9.300" height="5" rx="2.500"/></g><rect x="761.30" y="1057" width="2.400" height="7" fill="#cfcfcf"/><rect x="753.0" y="1033.600" width="8.200" height="19" fill="#f8f8f8" stroke="#6a6a6a" stroke-width="1"/><rect x="761.5" y="1033.400" width="11" height="8.200" fill="#6ab0e6" stroke="#5a9fd6" stroke-width="0.500"/><rect x="791.30" y="1057" width="2.400" height="7" fill="#cfcfcf"/><rect x="783.0" y="1033.600" width="8.200" height="19" fill="#f8f8f8" stroke="#6a6a6a" stroke-width="1"/><rect x="791.5" y="1033.400" width="11" height="8.200" fill="#6ab0e6" stroke="#5a9fd6" stroke-width="0.500"/><rect x="821.30" y="1057" width="2.400" height="7" fill="#cfcfcf"/><rect x="813.0" y="1033.600" width="8.200" height="19" fill="#f8f8f8" stroke="#6a6a6a" stroke-width="1"/><rect x="821.5" y="1033.400" width="11" height="8.200" fill="#6ab0e6" stroke="#5a9fd6" stroke-width="0.500"/><rect x="851.30" y="1057" width="2.400" height="7" fill="#cfcfcf"/><path d="M842.7 1037.3 L846.7 1033.6 H862.7 V1048.6 L858.7 1052.6 H842.7 Z" fill="#d9d9d9" stroke="#7a7a7a" stroke-width="1.100" stroke-linejoin="round"/><path d="M843.5 1037.1 L847.0 1034.2 H861.9000000000001 L858.7 1037.1 Z" fill="#ececec"/><path d="M859.0 1037.3 L862.1 1034.5 V1048.3 L859.0 1051.8 Z" fill="#c2c2c2"/><g fill="#e4e4e4" stroke="#929292" stroke-width="1.100" transform="rotate(-38 851.5 1044.300)"><rect x="843.5" y="1041.800" width="9.300" height="5" rx="2.500"/><rect x="850.2" y="1041.800" width="9.300" height="5" rx="2.500"/></g><rect x="881.30" y="1057" width="2.400" height="7" fill="#cfcfcf"/><path d="M872.7 1037.3 L876.7 1033.6 H892.7 V1048.6 L888.7 1052.6 H872.7 Z" fill="#d9d9d9" stroke="#7a7a7a" stroke-width="1.100" stroke-linejoin="round"/><path d="M873.5 1037.1 L877.0 1034.2 H891.9000000000001 L888.7 1037.1 Z" fill="#ececec"/><path d="M889.0 1037.3 L892.1 1034.5 V1048.3 L889.0 1051.8 Z" fill="#c2c2c2"/><g fill="#e4e4e4" stroke="#929292" stroke-width="1.100" transform="rotate(-38 881.5 1044.300)"><rect x="873.5" y="1041.800" width="9.300" height="5" rx="2.500"/><rect x="880.2" y="1041.800" width="9.300" height="5" rx="2.500"/></g><rect x="911.30" y="1057" width="2.400" height="7" fill="#cfcfcf"/><rect x="903.0" y="1033.600" width="8.200" height="19" fill="#f8f8f8" stroke="#6a6a6a" stroke-width="1"/><rect x="911.5" y="1033.400" width="11" height="8.200" fill="#6ab0e6" stroke="#5a9fd6" stroke-width="0.500"/><rect x="941.30" y="1057" width="2.400" height="7" fill="#cfcfcf"/><rect x="933.0" y="1033.600" width="8.200" height="19" fill="#f8f8f8" stroke="#6a6a6a" stroke-width="1"/><rect x="941.5" y="1033.400" width="11" height="8.200" fill="#6ab0e6" stroke="#5a9fd6" stroke-width="0.500"/><rect x="971.30" y="1057" width="2.400" height="7" fill="#cfcfcf"/><rect x="963.0" y="1033.600" width="8.200" height="19" fill="#f8f8f8" stroke="#6a6a6a" stroke-width="1"/><rect x="971.5" y="1033.400" width="11" height="8.200" fill="#6ab0e6" stroke="#5a9fd6" stroke-width="0.500"/><rect x="1001.30" y="1057" width="2.400" height="7" fill="#cfcfcf"/><rect x="993.0" y="1033.600" width="8.200" height="19" fill="#f8f8f8" stroke="#6a6a6a" stroke-width="1"/><rect x="1001.5" y="1033.400" width="11" height="8.200" fill="#6ab0e6" stroke="#5a9fd6" stroke-width="0.500"/><rect x="1031.30" y="1057" width="2.400" height="7" fill="#cfcfcf"/><rect x="1023.0" y="1033.600" width="8.200" height="19" fill="#f8f8f8" stroke="#6a6a6a" stroke-width="1"/><rect x="1031.5" y="1033.400" width="11" height="8.200" fill="#6ab0e6" stroke="#5a9fd6" stroke-width="0.500"/><rect x="1061.30" y="1057" width="2.400" height="7" fill="#cfcfcf"/><path d="M1052.7 1037.3 L1056.7 1033.6 H1072.7 V1048.6 L1068.7 1052.6 H1052.7 Z" fill="#d9d9d9" stroke="#7a7a7a" stroke-width="1.100" stroke-linejoin="round"/><path d="M1053.5 1037.1 L1057.0 1034.2 H1071.9 L1068.7 1037.1 Z" fill="#ececec"/><path d="M1069.0 1037.3 L1072.1000000000001 1034.5 V1048.3 L1069.0 1051.8 Z" fill="#c2c2c2"/><g fill="#e4e4e4" stroke="#929292" stroke-width="1.100" transform="rotate(-38 1061.5 1044.300)"><rect x="1053.5" y="1041.800" width="9.300" height="5" rx="2.500"/><rect x="1060.2" y="1041.800" width="9.300" height="5" rx="2.500"/></g><rect x="1091.30" y="1057" width="2.400" height="7" fill="#cfcfcf"/><path d="M1082.7 1037.3 L1086.7 1033.6 H1102.7 V1048.6 L1098.7 1052.6 H1082.7 Z" fill="#d9d9d9" stroke="#7a7a7a" stroke-width="1.100" stroke-linejoin="round"/><path d="M1083.5 1037.1 L1087.0 1034.2 H1101.9 L1098.7 1037.1 Z" fill="#ececec"/><path d="M1099.0 1037.3 L1102.1000000000001 1034.5 V1048.3 L1099.0 1051.8 Z" fill="#c2c2c2"/><g fill="#e4e4e4" stroke="#929292" stroke-width="1.100" transform="rotate(-38 1091.5 1044.300)"><rect x="1083.5" y="1041.800" width="9.300" height="5" rx="2.500"/><rect x="1090.2" y="1041.800" width="9.300" height="5" rx="2.500"/></g><rect x="1121.30" y="1057" width="2.400" height="7" fill="#cfcfcf"/><rect x="1113.0" y="1033.600" width="8.200" height="19" fill="#f8f8f8" stroke="#6a6a6a" stroke-width="1"/><rect x="1121.5" y="1033.400" width="11" height="8.200" fill="#6ab0e6" stroke="#5a9fd6" stroke-width="0.500"/><rect x="1151.30" y="1057" width="2.400" height="7" fill="#cfcfcf"/><path d="M1144.5 1034.4 H1156.8 M1142.5 1036.4 V1048.6 M1158.8 1036.4 V1042.4 M1144.5 1050.6 H1153.8" stroke="#555" stroke-width="1.100" fill="none"/><rect x="1141.20" y="1033.10" width="2.600" height="2.600" fill="#1a8fff"/><rect x="1157.50" y="1033.10" width="2.600" height="2.600" fill="#1a8fff"/><rect x="1141.20" y="1049.30" width="2.600" height="2.600" fill="#1a8fff"/><path d="M1154.0 1051.6 L1161.7 1043.3 L1163.5 1045.1 L1155.8 1053.3 Z" fill="#f5b942"/><path d="M1160.8 1044.200 L1161.7 1043.300 Q1163.3 1042.700 1164.1 1044.500 L1163.5 1045.900 L1162.6 1046.900 Z" fill="#f5454f"/><path d="M1154.0 1051.6 L1152.7 1053.8999999999999 L1155.8 1053.3 Z" fill="#666"/><rect x="1181.30" y="1057" width="2.400" height="7" fill="#cfcfcf"/><path d="M1173.0 1049 H1184.5 L1188.2 1045.300 V1049 L1184.5 1052.600 H1173.0 Z" fill="#bdbdbd"/><rect x="1173.0" y="1037" width="11.5" height="11.700" fill="#6ab0e6"/><path d="M1173.0 1037 L1176.7 1033 H1188.2 L1184.5 1037 Z" fill="#8ccbfb"/><path d="M1184.5 1037 L1188.2 1033 V1044.800 L1184.5 1048.700 Z" fill="#4593cf"/><path d="M1191.1 1049.400 V1037" stroke="#222" stroke-width="1.100"/><path d="M1191.1 1034 l-2.100 3.800 h4.200 z" fill="#222"/><rect x="1211.30" y="1057" width="2.400" height="7" fill="#cfcfcf"/><path d="M1203.0 1049 H1214.5 L1218.2 1045.300 V1049 L1214.5 1052.600 H1203.0 Z" fill="#bdbdbd"/><rect x="1203.0" y="1037" width="11.5" height="11.700" fill="#6ab0e6"/><path d="M1203.0 1037 L1206.7 1033 H1218.2 L1214.5 1037 Z" fill="#8ccbfb"/><path d="M1214.5 1037 L1218.2 1033 V1044.800 L1214.5 1048.700 Z" fill="#4593cf"/><path d="M1221.1 1049.400 V1037" stroke="#222" stroke-width="1.100"/><path d="M1221.1 1034 l-2.100 3.800 h4.200 z" fill="#222"/><rect x="1241.30" y="1057" width="2.400" height="7" fill="#cfcfcf"/><path d="M1233.0 1049 H1244.5 L1248.2 1045.300 V1049 L1244.5 1052.600 H1233.0 Z" fill="#bdbdbd"/><rect x="1233.0" y="1037" width="11.5" height="11.700" fill="#6ab0e6"/><path d="M1233.0 1037 L1236.7 1033 H1248.2 L1244.5 1037 Z" fill="#8ccbfb"/><path d="M1244.5 1037 L1248.2 1033 V1044.800 L1244.5 1048.700 Z" fill="#4593cf"/><path d="M1251.1 1049.400 V1037" stroke="#222" stroke-width="1.100"/><path d="M1251.1 1034 l-2.100 3.800 h4.200 z" fill="#222"/><rect x="1271.30" y="1057" width="2.400" height="7" fill="#cfcfcf"/><path d="M1263.0 1049 H1274.5 L1278.2 1045.300 V1049 L1274.5 1052.600 H1263.0 Z" fill="#bdbdbd"/><rect x="1263.0" y="1037" width="11.5" height="11.700" fill="#6ab0e6"/><path d="M1263.0 1037 L1266.7 1033 H1278.2 L1274.5 1037 Z" fill="#8ccbfb"/><path d="M1274.5 1037 L1278.2 1033 V1044.800 L1274.5 1048.700 Z" fill="#4593cf"/><path d="M1281.1 1049.400 V1037" stroke="#222" stroke-width="1.100"/><path d="M1281.1 1034 l-2.100 3.800 h4.200 z" fill="#222"/><rect x="1301.30" y="1057" width="2.400" height="7" fill="#cfcfcf"/><path d="M1292.7 1037.3 L1296.7 1033.6 H1312.7 V1048.6 L1308.7 1052.6 H1292.7 Z" fill="#d9d9d9" stroke="#7a7a7a" stroke-width="1.100" stroke-linejoin="round"/><path d="M1293.5 1037.1 L1297.0 1034.2 H1311.9 L1308.7 1037.1 Z" fill="#ececec"/><path d="M1309.0 1037.3 L1312.1000000000001 1034.5 V1048.3 L1309.0 1051.8 Z" fill="#c2c2c2"/><g fill="#e4e4e4" stroke="#929292" stroke-width="1.100" transform="rotate(-38 1301.5 1044.300)"><rect x="1293.5" y="1041.800" width="9.300" height="5" rx="2.500"/><rect x="1300.2" y="1041.800" width="9.300" height="5" rx="2.500"/></g><rect x="1331.30" y="1057" width="2.400" height="7" fill="#cfcfcf"/><path d="M1322.7 1037.3 L1326.7 1033.6 H1342.7 V1048.6 L1338.7 1052.6 H1322.7 Z" fill="#d9d9d9" stroke="#7a7a7a" stroke-width="1.100" stroke-linejoin="round"/><path d="M1323.5 1037.1 L1327.0 1034.2 H1341.9 L1338.7 1037.1 Z" fill="#ececec"/><path d="M1339.0 1037.3 L1342.1000000000001 1034.5 V1048.3 L1339.0 1051.8 Z" fill="#c2c2c2"/><g fill="#e4e4e4" stroke="#929292" stroke-width="1.100" transform="rotate(-38 1331.5 1044.300)"><rect x="1323.5" y="1041.800" width="9.300" height="5" rx="2.500"/><rect x="1330.2" y="1041.800" width="9.300" height="5" rx="2.500"/></g><rect x="1361.30" y="1057" width="2.400" height="7" fill="#cfcfcf"/><path d="M1352.7 1037.3 L1356.7 1033.6 H1372.7 V1048.6 L1368.7 1052.6 H1352.7 Z" fill="#d9d9d9" stroke="#7a7a7a" stroke-width="1.100" stroke-linejoin="round"/><path d="M1353.5 1037.1 L1357.0 1034.2 H1371.9 L1368.7 1037.1 Z" fill="#ececec"/><path d="M1369.0 1037.3 L1372.1000000000001 1034.5 V1048.3 L1369.0 1051.8 Z" fill="#c2c2c2"/><g fill="#e4e4e4" stroke="#929292" stroke-width="1.100" transform="rotate(-38 1361.5 1044.300)"><rect x="1353.5" y="1041.800" width="9.300" height="5" rx="2.500"/><rect x="1360.2" y="1041.800" width="9.300" height="5" rx="2.500"/></g><rect x="1391.30" y="1057" width="2.400" height="7" fill="#cfcfcf"/><path d="M1382.7 1037.3 L1386.7 1033.6 H1402.7 V1048.6 L1398.7 1052.6 H1382.7 Z" fill="#d9d9d9" stroke="#7a7a7a" stroke-width="1.100" stroke-linejoin="round"/><path d="M1383.5 1037.1 L1387.0 1034.2 H1401.9 L1398.7 1037.1 Z" fill="#ececec"/><path d="M1399.0 1037.3 L1402.1000000000001 1034.5 V1048.3 L1399.0 1051.8 Z" fill="#c2c2c2"/><g fill="#e4e4e4" stroke="#929292" stroke-width="1.100" transform="rotate(-38 1391.5 1044.300)"><rect x="1383.5" y="1041.800" width="9.300" height="5" rx="2.500"/><rect x="1390.2" y="1041.800" width="9.300" height="5" rx="2.500"/></g><rect x="1421.30" y="1057" width="2.400" height="7" fill="#cfcfcf"/><path d="M1412.7 1037.3 L1416.7 1033.6 H1432.7 V1048.6 L1428.7 1052.6 H1412.7 Z" fill="#d9d9d9" stroke="#7a7a7a" stroke-width="1.100" stroke-linejoin="round"/><path d="M1413.5 1037.1 L1417.0 1034.2 H1431.9 L1428.7 1037.1 Z" fill="#ececec"/><path d="M1429.0 1037.3 L1432.1000000000001 1034.5 V1048.3 L1429.0 1051.8 Z" fill="#c2c2c2"/><g fill="#e4e4e4" stroke="#929292" stroke-width="1.100" transform="rotate(-38 1421.5 1044.300)"><rect x="1413.5" y="1041.800" width="9.300" height="5" rx="2.500"/><rect x="1420.2" y="1041.800" width="9.300" height="5" rx="2.500"/></g><rect x="1451.30" y="1057" width="2.400" height="7" fill="#cfcfcf"/><path d="M1442.7 1037.3 L1446.7 1033.6 H1462.7 V1048.6 L1458.7 1052.6 H1442.7 Z" fill="#d9d9d9" stroke="#7a7a7a" stroke-width="1.100" stroke-linejoin="round"/><path d="M1443.5 1037.1 L1447.0 1034.2 H1461.9 L1458.7 1037.1 Z" fill="#ececec"/><path d="M1459.0 1037.3 L1462.1000000000001 1034.5 V1048.3 L1459.0 1051.8 Z" fill="#c2c2c2"/><g fill="#e4e4e4" stroke="#929292" stroke-width="1.100" transform="rotate(-38 1451.5 1044.300)"><rect x="1443.5" y="1041.800" width="9.300" height="5" rx="2.500"/><rect x="1450.2" y="1041.800" width="9.300" height="5" rx="2.500"/></g><rect x="1481.30" y="1057" width="2.400" height="7" fill="#cfcfcf"/><path d="M1479.7 1036.9 H1486.2 M1476.7 1039.9 V1046.3 M1479.7 1049.3 H1486.2" stroke="#555" stroke-width="1" stroke-dasharray="2.500 1.500" fill="none"/><rect x="1474.6000000000001" y="1034.8000000000002" width="4.200" height="4.200" fill="#f8f8f8" stroke="#555" stroke-width="0.900"/><rect x="1486.80" y="1034.50" width="4.800" height="4.800" fill="#4f9fe0" stroke="#7fbcf0" stroke-width="0.400"/><rect x="1474.30" y="1046.90" width="4.800" height="4.800" fill="#4f9fe0" stroke="#7fbcf0" stroke-width="0.400"/><rect x="1486.80" y="1046.90" width="4.800" height="4.800" fill="#4f9fe0" stroke="#7fbcf0" stroke-width="0.400"/><rect x="1511.30" y="1057" width="2.400" height="7" fill="#cfcfcf"/><rect x="1503.0" y="1033.600" width="8.200" height="19" fill="#f8f8f8" stroke="#6a6a6a" stroke-width="1"/><rect x="1511.5" y="1033.400" width="11" height="8.200" fill="#6ab0e6" stroke="#5a9fd6" stroke-width="0.500"/><rect x="1541.30" y="1057" width="2.400" height="7" fill="#cfcfcf"/><path d="M1532.7 1037.3 L1536.7 1033.6 H1552.7 V1048.6 L1548.7 1052.6 H1532.7 Z" fill="#d9d9d9" stroke="#7a7a7a" stroke-width="1.100" stroke-linejoin="round"/><path d="M1533.5 1037.1 L1537.0 1034.2 H1551.9 L1548.7 1037.1 Z" fill="#ececec"/><path d="M1549.0 1037.3 L1552.1000000000001 1034.5 V1048.3 L1549.0 1051.8 Z" fill="#c2c2c2"/><g fill="#e4e4e4" stroke="#929292" stroke-width="1.100" transform="rotate(-38 1541.5 1044.300)"><rect x="1533.5" y="1041.800" width="9.300" height="5" rx="2.500"/><rect x="1540.2" y="1041.800" width="9.300" height="5" rx="2.500"/></g><rect x="1571.30" y="1057" width="2.400" height="7" fill="#cfcfcf"/><path d="M1569.7 1036.9 H1576.2 M1566.7 1039.9 V1046.3 M1569.7 1049.3 H1576.2" stroke="#555" stroke-width="1" stroke-dasharray="2.500 1.500" fill="none"/><rect x="1564.6000000000001" y="1034.8000000000002" width="4.200" height="4.200" fill="#f8f8f8" stroke="#555" stroke-width="0.900"/><rect x="1576.80" y="1034.50" width="4.800" height="4.800" fill="#4f9fe0" stroke="#7fbcf0" stroke-width="0.400"/><rect x="1564.30" y="1046.90" width="4.800" height="4.800" fill="#4f9fe0" stroke="#7fbcf0" stroke-width="0.400"/><rect x="1576.80" y="1046.90" width="4.800" height="4.800" fill="#4f9fe0" stroke="#7fbcf0" stroke-width="0.400"/><rect x="1601.30" y="1057" width="2.400" height="7" fill="#cfcfcf"/><path d="M1592.7 1037.3 L1596.7 1033.6 H1612.7 V1048.6 L1608.7 1052.6 H1592.7 Z" fill="#d9d9d9" stroke="#7a7a7a" stroke-width="1.100" stroke-linejoin="round"/><path d="M1593.5 1037.1 L1597.0 1034.2 H1611.9 L1608.7 1037.1 Z" fill="#ececec"/><path d="M1609.0 1037.3 L1612.1000000000001 1034.5 V1048.3 L1609.0 1051.8 Z" fill="#c2c2c2"/><g fill="#e4e4e4" stroke="#929292" stroke-width="1.100" transform="rotate(-38 1601.5 1044.300)"><rect x="1593.5" y="1041.800" width="9.300" height="5" rx="2.500"/><rect x="1600.2" y="1041.800" width="9.300" height="5" rx="2.500"/></g><rect x="1631.30" y="1057" width="2.400" height="7" fill="#cfcfcf"/><path d="M1622.7 1037.3 L1626.7 1033.6 H1642.7 V1048.6 L1638.7 1052.6 H1622.7 Z" fill="#d9d9d9" stroke="#7a7a7a" stroke-width="1.100" stroke-linejoin="round"/><path d="M1623.5 1037.1 L1627.0 1034.2 H1641.9 L1638.7 1037.1 Z" fill="#ececec"/><path d="M1639.0 1037.3 L1642.1000000000001 1034.5 V1048.3 L1639.0 1051.8 Z" fill="#c2c2c2"/><g fill="#e4e4e4" stroke="#929292" stroke-width="1.100" transform="rotate(-38 1631.5 1044.300)"><rect x="1623.5" y="1041.800" width="9.300" height="5" rx="2.500"/><rect x="1630.2" y="1041.800" width="9.300" height="5" rx="2.500"/></g><rect x="1661.30" y="1057" width="2.400" height="7" fill="#cfcfcf"/><path d="M1652.7 1037.3 L1656.7 1033.6 H1672.7 V1048.6 L1668.7 1052.6 H1652.7 Z" fill="#d9d9d9" stroke="#7a7a7a" stroke-width="1.100" stroke-linejoin="round"/><path d="M1653.5 1037.1 L1657.0 1034.2 H1671.9 L1668.7 1037.1 Z" fill="#ececec"/><path d="M1669.0 1037.3 L1672.1000000000001 1034.5 V1048.3 L1669.0 1051.8 Z" fill="#c2c2c2"/><g fill="#e4e4e4" stroke="#929292" stroke-width="1.100" transform="rotate(-38 1661.5 1044.300)"><rect x="1653.5" y="1041.800" width="9.300" height="5" rx="2.500"/><rect x="1660.2" y="1041.800" width="9.300" height="5" rx="2.500"/></g><rect x="1691.30" y="1057" width="2.400" height="7" fill="#cfcfcf"/><path d="M1682.7 1037.3 L1686.7 1033.6 H1702.7 V1048.6 L1698.7 1052.6 H1682.7 Z" fill="#d9d9d9" stroke="#7a7a7a" stroke-width="1.100" stroke-linejoin="round"/><path d="M1683.5 1037.1 L1687.0 1034.2 H1701.9 L1698.7 1037.1 Z" fill="#ececec"/><path d="M1699.0 1037.3 L1702.1000000000001 1034.5 V1048.3 L1699.0 1051.8 Z" fill="#c2c2c2"/><g fill="#e4e4e4" stroke="#929292" stroke-width="1.100" transform="rotate(-38 1691.5 1044.300)"><rect x="1683.5" y="1041.800" width="9.300" height="5" rx="2.500"/><rect x="1690.2" y="1041.800" width="9.300" height="5" rx="2.500"/></g><rect x="1721.30" y="1057" width="2.400" height="7" fill="#cfcfcf"/><path d="M1712.7 1037.3 L1716.7 1033.6 H1732.7 V1048.6 L1728.7 1052.6 H1712.7 Z" fill="#d9d9d9" stroke="#7a7a7a" stroke-width="1.100" stroke-linejoin="round"/><path d="M1713.5 1037.1 L1717.0 1034.2 H1731.9 L1728.7 1037.1 Z" fill="#ececec"/><path d="M1729.0 1037.3 L1732.1000000000001 1034.5 V1048.3 L1729.0 1051.8 Z" fill="#c2c2c2"/><g fill="#e4e4e4" stroke="#929292" stroke-width="1.100" transform="rotate(-38 1721.5 1044.300)"><rect x="1713.5" y="1041.800" width="9.300" height="5" rx="2.500"/><rect x="1720.2" y="1041.800" width="9.300" height="5" rx="2.500"/></g><rect x="1751.30" y="1057" width="2.400" height="7" fill="#cfcfcf"/><path d="M1742.7 1037.3 L1746.7 1033.6 H1762.7 V1048.6 L1758.7 1052.6 H1742.7 Z" fill="#d9d9d9" stroke="#7a7a7a" stroke-width="1.100" stroke-linejoin="round"/><path d="M1743.5 1037.1 L1747.0 1034.2 H1761.9 L1758.7 1037.1 Z" fill="#ececec"/><path d="M1759.0 1037.3 L1762.1000000000001 1034.5 V1048.3 L1759.0 1051.8 Z" fill="#c2c2c2"/><g fill="#e4e4e4" stroke="#929292" stroke-width="1.100" transform="rotate(-38 1751.5 1044.300)"><rect x="1743.5" y="1041.800" width="9.300" height="5" rx="2.500"/><rect x="1750.2" y="1041.800" width="9.300" height="5" rx="2.500"/></g><rect x="1781.30" y="1057" width="2.400" height="7" fill="#cfcfcf"/><path d="M1772.7 1037.3 L1776.7 1033.6 H1792.7 V1048.6 L1788.7 1052.6 H1772.7 Z" fill="#d9d9d9" stroke="#7a7a7a" stroke-width="1.100" stroke-linejoin="round"/><path d="M1773.5 1037.1 L1777.0 1034.2 H1791.9 L1788.7 1037.1 Z" fill="#ececec"/><path d="M1789.0 1037.3 L1792.1000000000001 1034.5 V1048.3 L1789.0 1051.8 Z" fill="#c2c2c2"/><g fill="#e4e4e4" stroke="#929292" stroke-width="1.100" transform="rotate(-38 1781.5 1044.300)"><rect x="1773.5" y="1041.800" width="9.300" height="5" rx="2.500"/><rect x="1780.2" y="1041.800" width="9.300" height="5" rx="2.500"/></g><rect x="1811.30" y="1057" width="2.400" height="7" fill="#cfcfcf"/><path d="M1802.7 1037.3 L1806.7 1033.6 H1822.7 V1048.6 L1818.7 1052.6 H1802.7 Z" fill="#d9d9d9" stroke="#7a7a7a" stroke-width="1.100" stroke-linejoin="round"/><path d="M1803.5 1037.1 L1807.0 1034.2 H1821.9 L1818.7 1037.1 Z" fill="#ececec"/><path d="M1819.0 1037.3 L1822.1000000000001 1034.5 V1048.3 L1819.0 1051.8 Z" fill="#c2c2c2"/><g fill="#e4e4e4" stroke="#929292" stroke-width="1.100" transform="rotate(-38 1811.5 1044.300)"><rect x="1803.5" y="1041.800" width="9.300" height="5" rx="2.500"/><rect x="1810.2" y="1041.800" width="9.300" height="5" rx="2.500"/></g><rect x="1841.30" y="1057" width="2.400" height="7" fill="#cfcfcf"/><path d="M1832.7 1037.3 L1836.7 1033.6 H1852.7 V1048.6 L1848.7 1052.6 H1832.7 Z" fill="#d9d9d9" stroke="#7a7a7a" stroke-width="1.100" stroke-linejoin="round"/><path d="M1833.5 1037.1 L1837.0 1034.2 H1851.9 L1848.7 1037.1 Z" fill="#ececec"/><path d="M1849.0 1037.3 L1852.1000000000001 1034.5 V1048.3 L1849.0 1051.8 Z" fill="#c2c2c2"/><g fill="#e4e4e4" stroke="#929292" stroke-width="1.100" transform="rotate(-38 1841.5 1044.300)"><rect x="1833.5" y="1041.800" width="9.300" height="5" rx="2.500"/><rect x="1840.2" y="1041.800" width="9.300" height="5" rx="2.500"/></g></svg>
<svg class="a" style="left:1883px;top:1038px;" width="22" height="22" viewBox="0 0 22 22"><g transform="translate(11 11)"><rect x="-2.300" y="-10.200" width="4.600" height="5" transform="rotate(0)" fill="#9a9a9a"/><rect x="-2.300" y="-10.200" width="4.600" height="5" transform="rotate(45)" fill="#9a9a9a"/><rect x="-2.300" y="-10.200" width="4.600" height="5" transform="rotate(90)" fill="#9a9a9a"/><rect x="-2.300" y="-10.200" width="4.600" height="5" transform="rotate(135)" fill="#9a9a9a"/><rect x="-2.300" y="-10.200" width="4.600" height="5" transform="rotate(180)" fill="#9a9a9a"/><rect x="-2.300" y="-10.200" width="4.600" height="5" transform="rotate(225)" fill="#9a9a9a"/><rect x="-2.300" y="-10.200" width="4.600" height="5" transform="rotate(270)" fill="#9a9a9a"/><rect x="-2.300" y="-10.200" width="4.600" height="5" transform="rotate(315)" fill="#9a9a9a"/><circle r="7.400" fill="#9a9a9a"/><circle r="3.300" fill="#f2f2f2"/></g></svg>
</body></html>
